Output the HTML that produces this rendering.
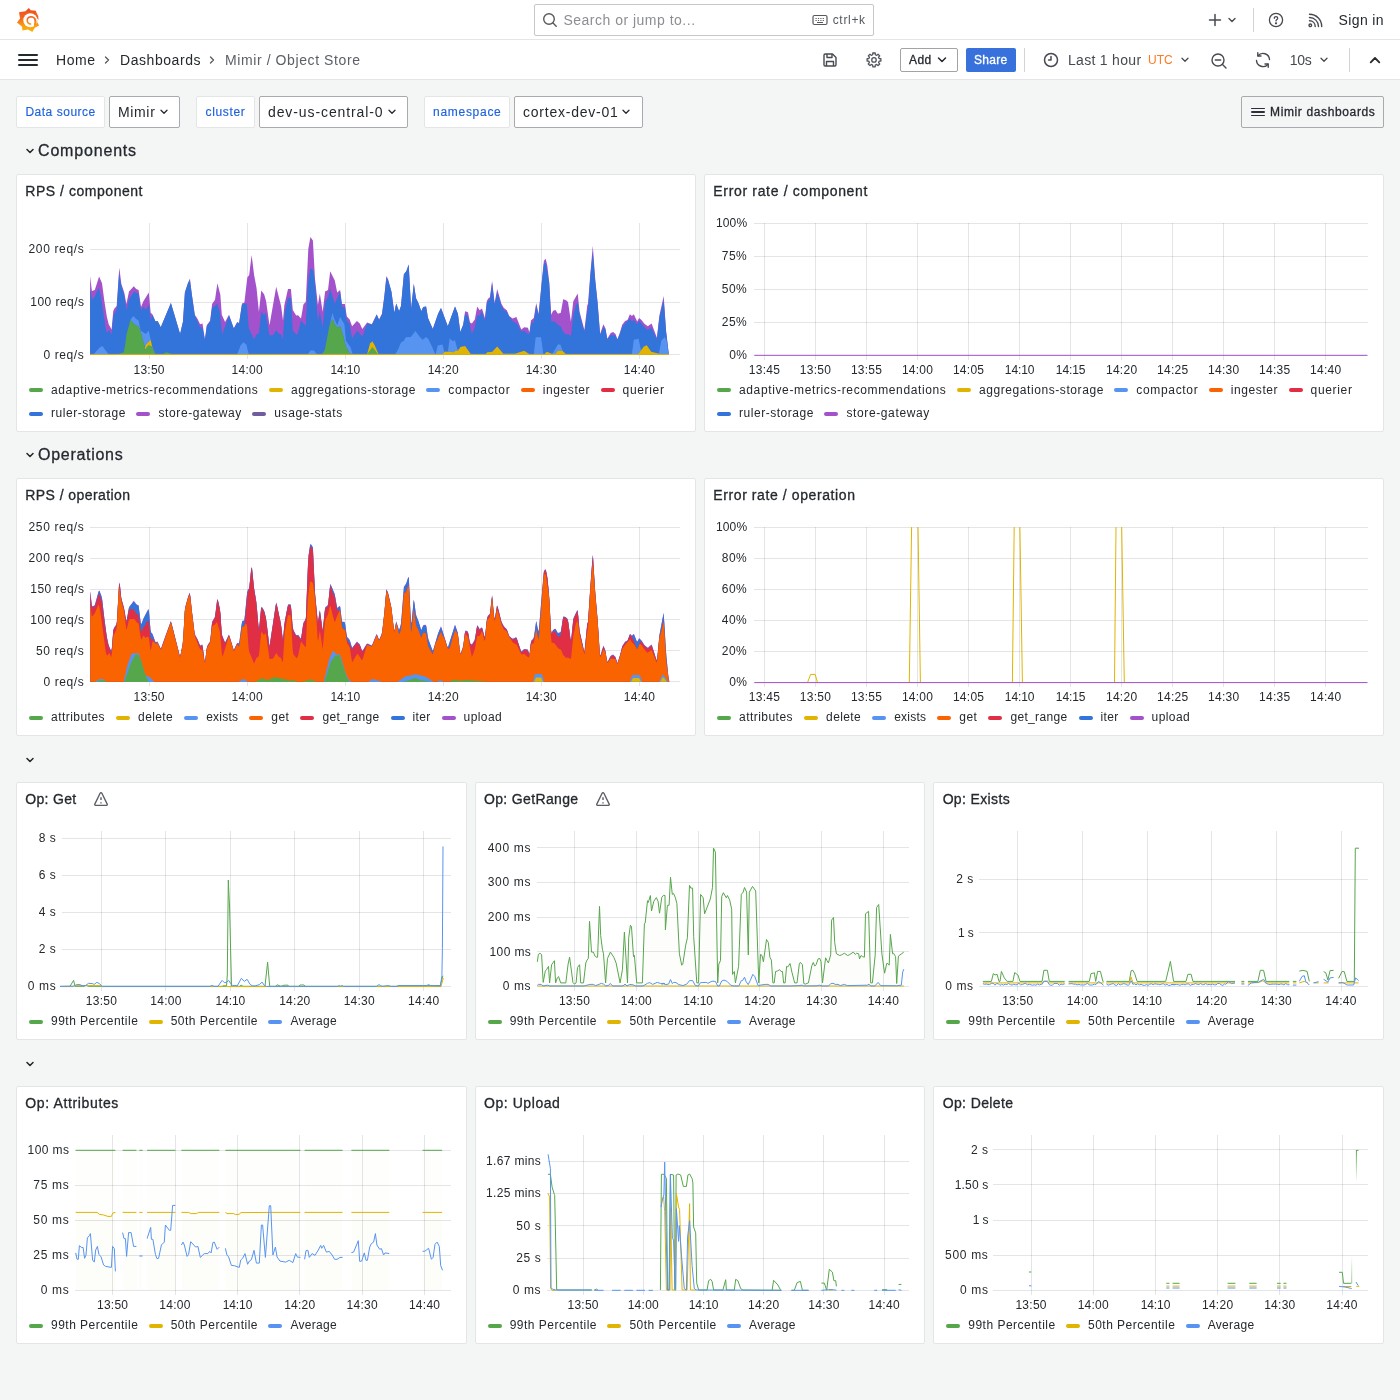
<!DOCTYPE html>
<html lang="en"><head><meta charset="utf-8"><title>Mimir / Object Store - Dashboards - Grafana</title>
<style>
html,body{margin:0;padding:0;}
body{width:1400px;height:1400px;background:#f4f5f5;font-family:"Liberation Sans",sans-serif;position:relative;overflow:hidden;color:#24292e;}
.t{position:absolute;white-space:nowrap;line-height:1;}
.b{position:absolute;box-sizing:border-box;}
svg{position:absolute;overflow:visible;}
svg text{font-family:"Liberation Sans",sans-serif;}
#root{position:absolute;left:0;top:0;width:1400px;height:1400px;will-change:transform;}
</style></head><body><div id="root">

<div class="b" style="left:0px;top:0px;width:1400px;height:40px;background:#fff;border-radius:0px;border-bottom:1px solid #e4e5e6;"></div>
<div class="b" style="left:0px;top:40px;width:1400px;height:40px;background:#fff;border-radius:0px;border-bottom:1px solid #e4e5e6;"></div>
<svg style="left:10px;top:2px" width="36" height="36" viewBox="0 0 1400 1400">
<defs><linearGradient id="lg" x1="0" y1="1165" x2="0" y2="235" gradientUnits="userSpaceOnUse"><stop offset="0" stop-color="#fbb70a"/><stop offset="0.250" stop-color="#f9a010"/><stop offset="0.550" stop-color="#f26c20"/><stop offset="1" stop-color="#ef4a1c"/></linearGradient></defs>
<path fill="url(#lg)" d="M735 235 L805 325 L1000 340 L1040 440 Q1140 560 1110 700 L1075 690 L1060 790 L1130 910 L965 1000 L870 1165 L700 1065 L480 1110 L470 960 L272 800 L392 640 L350 400 L600 360 Z"/>
<circle cx="790" cy="712" r="272" fill="#fff"/>
<path fill="#fff" d="M1020 640 L1120 690 L1075 700 L1062 790 L1010 800 Z"/>
<path fill="none" stroke="url(#lg)" stroke-width="58" stroke-linecap="round" d="M800 860 Q690 850 670 730 Q665 600 800 575 Q960 575 985 720 Q1000 830 960 900"/>
<path fill="url(#lg)" d="M1010 640 Q1050 760 1010 900 L930 960 L930 880 Q980 800 950 660 Z"/>
</svg>
<div class="b" style="left:534px;top:4px;width:340px;height:32px;background:#fff;border-radius:2px;border:1px solid #c4c7cb;"></div>
<svg style="left:542px;top:12px" width="16" height="16" viewBox="0 0 16 16" fill="none" stroke="#55595f" stroke-width="1.400" stroke-linecap="round"><circle cx="7" cy="7" r="5.300"/><path d="M11 11 L14.200 14.200"/></svg>
<div class="t" style="left:563.40px;top:11.95px;font-size:14px;color:#8b8e94;letter-spacing:0.499px;line-height:1.15;">Search or jump to...</div>
<svg style="left:812px;top:14px" width="16" height="12" viewBox="0 0 16 12" fill="none" stroke="#55595f" stroke-width="1.200"><rect x="1" y="1.500" width="14" height="9" rx="1.500"/><path d="M3.500 4.500h9 M3.500 6.500h9" stroke-dasharray="1.200 1.200" stroke-width="1"/><path d="M5 8.500h6" stroke-width="1"/></svg>
<div class="t" style="left:832.70px;top:14.30px;font-size:12px;color:#55595f;letter-spacing:0.681px;line-height:1.15;">ctrl+k</div>
<svg style="left:1208px;top:13px" width="14" height="14" viewBox="0 0 14 14" fill="none" stroke="#464a50" stroke-width="1.500" stroke-linecap="round"><path d="M7 1.500v11M1.500 7h11"/></svg>
<svg style="left:1227px;top:16px" width="10" height="8" viewBox="0 0 10 8" fill="none" stroke="#464a50" stroke-width="1.400" stroke-linecap="round" stroke-linejoin="round"><path d="M2 2.500l3 3 3-3"/></svg>
<div class="b" style="left:1253px;top:8px;width:1px;height:24px;background:#d2d4d7;border-radius:0px;"></div>
<svg style="left:1268px;top:12px" width="16" height="16" viewBox="0 0 16 16" fill="none" stroke="#464a50" stroke-width="1.300" stroke-linecap="round"><circle cx="8" cy="8" r="6.600"/><path d="M6.300 6.300c0-1 .8-1.700 1.700-1.700 1 0 1.700.7 1.700 1.600 0 1.300-1.700 1.400-1.700 2.700"/><circle cx="8" cy="11.300" r="0.500" fill="#464a50"/></svg>
<svg style="left:1308px;top:13px" width="15" height="15" viewBox="0 0 15 15" fill="none" stroke="#464a50" stroke-width="1.400" stroke-linecap="round"><circle cx="2.300" cy="12.300" r="1.300"/><path d="M1.500 7.800c3.300 0 5.700 2.400 5.700 5.700M1.500 4.500c5 0 9 4 9 9M1.500 1.300c6.800 0 12.200 5.400 12.200 12.200"/></svg>
<div class="t" style="left:1338.50px;top:11.95px;font-size:14px;color:#24292e;letter-spacing:0.386px;line-height:1.15;">Sign in</div>
<div class="b" style="left:18px;top:54px;width:20px;height:2px;background:#24292e;border-radius:1px;"></div>
<div class="b" style="left:18px;top:59px;width:20px;height:2px;background:#24292e;border-radius:1px;"></div>
<div class="b" style="left:18px;top:64px;width:20px;height:2px;background:#24292e;border-radius:1px;"></div>
<div class="t" style="left:56.00px;top:51.95px;font-size:14px;color:#24292e;letter-spacing:0.568px;line-height:1.15;">Home</div>
<svg style="left:103px;top:55px" width="8" height="10" viewBox="0 0 8 10" fill="none" stroke="#55595f" stroke-width="1.300" stroke-linecap="round" stroke-linejoin="round"><path d="M2.500 2l3 3-3 3"/></svg>
<div class="t" style="left:120.00px;top:51.95px;font-size:14px;color:#24292e;letter-spacing:0.555px;line-height:1.15;">Dashboards</div>
<svg style="left:208px;top:55px" width="8" height="10" viewBox="0 0 8 10" fill="none" stroke="#55595f" stroke-width="1.300" stroke-linecap="round" stroke-linejoin="round"><path d="M2.500 2l3 3-3 3"/></svg>
<div class="t" style="left:225.00px;top:51.95px;font-size:14px;color:#5b5f66;letter-spacing:0.592px;line-height:1.15;">Mimir / Object Store</div>
<svg style="left:822px;top:52px" width="16" height="16" viewBox="0 0 16 16" fill="none" stroke="#464a50" stroke-width="1.400" stroke-linejoin="round"><path d="M2 3.200c0-.7.500-1.200 1.200-1.200h7.300l3.500 3.500v7.300c0 .7-.5 1.200-1.200 1.200H3.200c-.7 0-1.200-.5-1.200-1.200z"/><path d="M5 2v3.500h5V2M4.500 14V9.500h7V14"/></svg>
<svg style="left:866px;top:52px" width="16" height="16" viewBox="0 0 16 16" fill="none" stroke="#50545a" stroke-width="1.300" stroke-linejoin="round"><circle cx="8" cy="7.900" r="2.250"/><path transform="translate(0 -0.100)" d="M6.72 2.86L6.78 1.11L9.22 1.11L9.28 2.86L10.73 3.46L12.02 2.27L13.73 3.98L12.54 5.27L13.14 6.72L14.89 6.78L14.89 9.22L13.14 9.28L12.54 10.73L13.73 12.02L12.02 13.73L10.73 12.54L9.28 13.14L9.22 14.89L6.78 14.89L6.72 13.14L5.27 12.54L3.98 13.73L2.27 12.02L3.46 10.73L2.86 9.28L1.11 9.22L1.11 6.78L2.86 6.72L3.46 5.27L2.27 3.98L3.98 2.27L5.27 3.46Z"/></svg>
<div class="b" style="left:900px;top:48px;width:58px;height:24px;background:#fff;border-radius:2px;border:1px solid #a0a3a8;"></div>
<div class="t" style="left:909.00px;top:54.30px;font-size:12px;color:#24292e;letter-spacing:0.385px;line-height:1.15;-webkit-text-stroke:0.3px #24292e;">Add</div>
<svg style="left:936px;top:56px" width="12" height="8" viewBox="0 0 12 8" fill="none" stroke="#24292e" stroke-width="1.500" stroke-linecap="round" stroke-linejoin="round"><path d="M2.500 2l3.500 3.500L9.500 2"/></svg>
<div class="b" style="left:966px;top:48px;width:50px;height:24px;background:#3871dc;border-radius:2px;"></div>
<div class="t" style="left:974.00px;top:54.30px;font-size:12px;color:#fff;letter-spacing:0.297px;line-height:1.15;-webkit-text-stroke:0.3px #fff;">Share</div>
<div class="b" style="left:1024px;top:48px;width:1px;height:24px;background:#d2d4d7;border-radius:0px;"></div>
<svg style="left:1043px;top:52px" width="16" height="16" viewBox="0 0 16 16" fill="none" stroke="#464a50" stroke-width="1.500" stroke-linecap="round" stroke-linejoin="round"><circle cx="8" cy="8" r="6.500"/><path d="M8 4.600V8H5.600"/></svg>
<div class="t" style="left:1068.00px;top:51.95px;font-size:14px;color:#464a50;letter-spacing:0.299px;line-height:1.15;">Last 1 hour</div>
<div class="t" style="left:1148.00px;top:54.30px;font-size:12px;color:#ff7a20;letter-spacing:0.043px;line-height:1.15;">UTC</div>
<svg style="left:1179px;top:56px" width="12" height="8" viewBox="0 0 12 8" fill="none" stroke="#464a50" stroke-width="1.300" stroke-linecap="round" stroke-linejoin="round"><path d="M3 2.300l3 3 3-3"/></svg>
<svg style="left:1210px;top:52px" width="18" height="18" viewBox="0 0 18 18" fill="none" stroke="#464a50" stroke-width="1.400" stroke-linecap="round"><circle cx="8" cy="8" r="6"/><path d="M5.300 8h5.400M12.500 12.500l3.500 3.500"/></svg>
<svg style="left:1254px;top:51px" width="18" height="18" viewBox="0 0 18 18" fill="none" stroke="#464a50" stroke-width="1.400" stroke-linecap="round" stroke-linejoin="round"><path d="M15.500 8.500a6.500 6.500 0 0 0-11.500-3.700M2.500 9.500a6.500 6.500 0 0 0 11.500 3.700"/><path d="M3.800 1.800v3.200h3.200M14.200 16.200v-3.200h-3.200"/></svg>
<div class="t" style="left:1289.70px;top:51.95px;font-size:14px;color:#464a50;letter-spacing:-0.254px;line-height:1.15;">10s</div>
<svg style="left:1318px;top:56px" width="12" height="8" viewBox="0 0 12 8" fill="none" stroke="#464a50" stroke-width="1.300" stroke-linecap="round" stroke-linejoin="round"><path d="M3 2.300l3 3 3-3"/></svg>
<div class="b" style="left:1349px;top:48px;width:1px;height:24px;background:#d2d4d7;border-radius:0px;"></div>
<svg style="left:1367px;top:54px" width="16" height="12" viewBox="0 0 16 12" fill="none" stroke="#24292e" stroke-width="1.800" stroke-linecap="round" stroke-linejoin="round"><path d="M3.700 8.300L8 4l4.300 4.300"/></svg>
<div class="b" style="left:16px;top:96px;width:89px;height:32px;background:#fff;border-radius:2px;border:1px solid #e4e5e6;"></div>
<div class="t" style="left:25.40px;top:106.10px;font-size:12px;color:#1f62e0;letter-spacing:0.519px;line-height:1.15;-webkit-text-stroke:0.15px #1f62e0;">Data source</div>
<div class="b" style="left:109px;top:96px;width:71px;height:32px;background:#fff;border-radius:2px;border:1px solid #a7aaae;"></div>
<div class="t" style="left:117.90px;top:103.95px;font-size:14px;color:#24292e;letter-spacing:0.682px;line-height:1.15;">Mimir</div>
<svg style="left:158px;top:108px" width="12" height="8" viewBox="0 0 12 8" fill="none" stroke="#24292e" stroke-width="1.300" stroke-linecap="round" stroke-linejoin="round"><path d="M3 2.300l3 3 3-3"/></svg>
<div class="b" style="left:196px;top:96px;width:59px;height:32px;background:#fff;border-radius:2px;border:1px solid #e4e5e6;"></div>
<div class="t" style="left:205.50px;top:106.10px;font-size:12px;color:#1f62e0;letter-spacing:0.665px;line-height:1.15;-webkit-text-stroke:0.15px #1f62e0;">cluster</div>
<div class="b" style="left:259px;top:96px;width:149px;height:32px;background:#fff;border-radius:2px;border:1px solid #a7aaae;"></div>
<div class="t" style="left:268.00px;top:103.95px;font-size:14px;color:#24292e;letter-spacing:0.900px;line-height:1.15;">dev-us-central-0</div>
<svg style="left:386px;top:108px" width="12" height="8" viewBox="0 0 12 8" fill="none" stroke="#24292e" stroke-width="1.300" stroke-linecap="round" stroke-linejoin="round"><path d="M3 2.300l3 3 3-3"/></svg>
<div class="b" style="left:424px;top:96px;width:86px;height:32px;background:#fff;border-radius:2px;border:1px solid #e4e5e6;"></div>
<div class="t" style="left:433.00px;top:106.10px;font-size:12px;color:#1f62e0;letter-spacing:0.719px;line-height:1.15;-webkit-text-stroke:0.15px #1f62e0;">namespace</div>
<div class="b" style="left:514px;top:96px;width:129px;height:32px;background:#fff;border-radius:2px;border:1px solid #a7aaae;"></div>
<div class="t" style="left:523.00px;top:103.95px;font-size:14px;color:#24292e;letter-spacing:0.766px;line-height:1.15;">cortex-dev-01</div>
<svg style="left:620px;top:108px" width="12" height="8" viewBox="0 0 12 8" fill="none" stroke="#24292e" stroke-width="1.300" stroke-linecap="round" stroke-linejoin="round"><path d="M3 2.300l3 3 3-3"/></svg>
<div class="b" style="left:1241px;top:96px;width:143px;height:32px;background:transparent;border-radius:2px;border:1px solid #a7aaae;"></div>
<div class="b" style="left:1251.4px;top:108px;width:13.4px;height:1.4px;background:#2c3137;border-radius:1px;"></div>
<div class="b" style="left:1251.4px;top:111.4px;width:13.4px;height:1.4px;background:#2c3137;border-radius:1px;"></div>
<div class="b" style="left:1251.4px;top:114.8px;width:13.4px;height:1.4px;background:#2c3137;border-radius:1px;"></div>
<div class="t" style="left:1270.00px;top:105.80px;font-size:12px;color:#24292e;letter-spacing:0.633px;line-height:1.15;-webkit-text-stroke:0.3px #24292e;">Mimir dashboards</div>
<svg style="left:24px;top:146px" width="12" height="10" viewBox="0 0 12 10" fill="none" stroke="#24292e" stroke-width="1.550" stroke-linecap="round" stroke-linejoin="round"><path d="M3 3.500l3 3 3-3"/></svg>
<div class="t" style="left:38.00px;top:141.80px;font-size:16px;color:#24292e;letter-spacing:0.822px;line-height:1.15;-webkit-text-stroke:0.3px #24292e;">Components</div>
<svg style="left:24px;top:450px" width="12" height="10" viewBox="0 0 12 10" fill="none" stroke="#24292e" stroke-width="1.550" stroke-linecap="round" stroke-linejoin="round"><path d="M3 3.500l3 3 3-3"/></svg>
<div class="t" style="left:38.00px;top:445.80px;font-size:16px;color:#24292e;letter-spacing:0.717px;line-height:1.15;-webkit-text-stroke:0.3px #24292e;">Operations</div>
<svg style="left:24px;top:755px" width="12" height="10" viewBox="0 0 12 10" fill="none" stroke="#24292e" stroke-width="1.550" stroke-linecap="round" stroke-linejoin="round"><path d="M3 3.500l3 3 3-3"/></svg>
<svg style="left:24px;top:1059px" width="12" height="10" viewBox="0 0 12 10" fill="none" stroke="#24292e" stroke-width="1.550" stroke-linecap="round" stroke-linejoin="round"><path d="M3 3.500l3 3 3-3"/></svg>
<div class="b" style="left:16px;top:174px;width:680px;height:258px;background:#fff;border-radius:2px;border:1px solid #e4e5e6;"></div>
<div class="t" style="left:25.30px;top:182.95px;font-size:14px;color:#24292e;letter-spacing:0.533px;line-height:1.15;-webkit-text-stroke:0.3px #24292e;">RPS / component</div>
<div class="b" style="left:29.0px;top:388.3px;width:14px;height:4px;border-radius:2px;background:#56a64b"></div>
<div class="t" style="left:51.00px;top:383.80px;font-size:12px;color:#24292e;letter-spacing:0.628px;line-height:1.15;">adaptive-metrics-recommendations</div>
<div class="b" style="left:268.9px;top:388.3px;width:14px;height:4px;border-radius:2px;background:#e0b400"></div>
<div class="t" style="left:290.90px;top:383.80px;font-size:12px;color:#24292e;letter-spacing:0.580px;line-height:1.15;">aggregations-storage</div>
<div class="b" style="left:426.3px;top:388.3px;width:14px;height:4px;border-radius:2px;background:#5794f2"></div>
<div class="t" style="left:448.30px;top:383.80px;font-size:12px;color:#24292e;letter-spacing:0.665px;line-height:1.15;">compactor</div>
<div class="b" style="left:520.7px;top:388.3px;width:14px;height:4px;border-radius:2px;background:#fa6400"></div>
<div class="t" style="left:542.70px;top:383.80px;font-size:12px;color:#24292e;letter-spacing:0.602px;line-height:1.15;">ingester</div>
<div class="b" style="left:600.6px;top:388.3px;width:14px;height:4px;border-radius:2px;background:#e02f44"></div>
<div class="t" style="left:622.60px;top:383.80px;font-size:12px;color:#24292e;letter-spacing:0.663px;line-height:1.15;">querier</div>
<div class="b" style="left:29.0px;top:411.6px;width:14px;height:4px;border-radius:2px;background:#3274d9"></div>
<div class="t" style="left:51.00px;top:407.10px;font-size:12px;color:#24292e;letter-spacing:0.536px;line-height:1.15;">ruler-storage</div>
<div class="b" style="left:136.4px;top:411.6px;width:14px;height:4px;border-radius:2px;background:#a352cc"></div>
<div class="t" style="left:158.40px;top:407.10px;font-size:12px;color:#24292e;letter-spacing:0.626px;line-height:1.15;">store-gateway</div>
<div class="b" style="left:252.3px;top:411.6px;width:14px;height:4px;border-radius:2px;background:#705da0"></div>
<div class="t" style="left:274.30px;top:407.10px;font-size:12px;color:#24292e;letter-spacing:0.589px;line-height:1.15;">usage-stats</div>
<div class="t" style="left:28.53px;top:243.10px;font-size:12px;color:#24292e;letter-spacing:0.650px;line-height:1.15;">200 req/s</div>
<div class="t" style="left:30.27px;top:295.80px;font-size:12px;color:#24292e;letter-spacing:0.457px;line-height:1.15;">100 req/s</div>
<div class="t" style="left:43.48px;top:348.50px;font-size:12px;color:#24292e;letter-spacing:0.607px;line-height:1.15;">0 req/s</div>
<div class="t" style="left:133.47px;top:363.50px;font-size:12px;color:#24292e;letter-spacing:0.260px;line-height:1.15;">13:50</div>
<div class="t" style="left:231.53px;top:363.50px;font-size:12px;color:#24292e;letter-spacing:0.260px;line-height:1.15;">14:00</div>
<div class="t" style="left:330.45px;top:363.50px;font-size:12px;color:#24292e;letter-spacing:-0.087px;line-height:1.15;">14:10</div>
<div class="t" style="left:427.63px;top:363.50px;font-size:12px;color:#24292e;letter-spacing:0.260px;line-height:1.15;">14:20</div>
<div class="t" style="left:525.68px;top:363.50px;font-size:12px;color:#24292e;letter-spacing:0.260px;line-height:1.15;">14:30</div>
<div class="t" style="left:623.74px;top:363.50px;font-size:12px;color:#24292e;letter-spacing:0.260px;line-height:1.15;">14:40</div>
<div class="b" style="left:704px;top:174px;width:680px;height:258px;background:#fff;border-radius:2px;border:1px solid #e4e5e6;"></div>
<div class="t" style="left:713.30px;top:182.95px;font-size:14px;color:#24292e;letter-spacing:0.668px;line-height:1.15;-webkit-text-stroke:0.3px #24292e;">Error rate / component</div>
<div class="b" style="left:717.0px;top:388.3px;width:14px;height:4px;border-radius:2px;background:#56a64b"></div>
<div class="t" style="left:739.00px;top:383.80px;font-size:12px;color:#24292e;letter-spacing:0.628px;line-height:1.15;">adaptive-metrics-recommendations</div>
<div class="b" style="left:956.9px;top:388.3px;width:14px;height:4px;border-radius:2px;background:#e0b400"></div>
<div class="t" style="left:978.90px;top:383.80px;font-size:12px;color:#24292e;letter-spacing:0.580px;line-height:1.15;">aggregations-storage</div>
<div class="b" style="left:1114.3px;top:388.3px;width:14px;height:4px;border-radius:2px;background:#5794f2"></div>
<div class="t" style="left:1136.30px;top:383.80px;font-size:12px;color:#24292e;letter-spacing:0.665px;line-height:1.15;">compactor</div>
<div class="b" style="left:1208.7px;top:388.3px;width:14px;height:4px;border-radius:2px;background:#fa6400"></div>
<div class="t" style="left:1230.70px;top:383.80px;font-size:12px;color:#24292e;letter-spacing:0.602px;line-height:1.15;">ingester</div>
<div class="b" style="left:1288.6px;top:388.3px;width:14px;height:4px;border-radius:2px;background:#e02f44"></div>
<div class="t" style="left:1310.60px;top:383.80px;font-size:12px;color:#24292e;letter-spacing:0.663px;line-height:1.15;">querier</div>
<div class="b" style="left:717.0px;top:411.6px;width:14px;height:4px;border-radius:2px;background:#3274d9"></div>
<div class="t" style="left:739.00px;top:407.10px;font-size:12px;color:#24292e;letter-spacing:0.536px;line-height:1.15;">ruler-storage</div>
<div class="b" style="left:824.4px;top:411.6px;width:14px;height:4px;border-radius:2px;background:#a352cc"></div>
<div class="t" style="left:846.40px;top:407.10px;font-size:12px;color:#24292e;letter-spacing:0.626px;line-height:1.15;">store-gateway</div>
<div class="t" style="left:716.06px;top:217.20px;font-size:12px;color:#24292e;letter-spacing:0.113px;line-height:1.15;">100%</div>
<div class="t" style="left:721.80px;top:250.20px;font-size:12px;color:#24292e;letter-spacing:0.463px;line-height:1.15;">75%</div>
<div class="t" style="left:721.80px;top:283.20px;font-size:12px;color:#24292e;letter-spacing:0.463px;line-height:1.15;">50%</div>
<div class="t" style="left:721.80px;top:316.10px;font-size:12px;color:#24292e;letter-spacing:0.463px;line-height:1.15;">25%</div>
<div class="t" style="left:729.27px;top:349.10px;font-size:12px;color:#24292e;letter-spacing:0.294px;line-height:1.15;">0%</div>
<div class="t" style="left:748.85px;top:364.10px;font-size:12px;color:#24292e;letter-spacing:0.260px;line-height:1.15;">13:45</div>
<div class="t" style="left:799.87px;top:364.10px;font-size:12px;color:#24292e;letter-spacing:0.260px;line-height:1.15;">13:50</div>
<div class="t" style="left:850.89px;top:364.10px;font-size:12px;color:#24292e;letter-spacing:0.260px;line-height:1.15;">13:55</div>
<div class="t" style="left:901.92px;top:364.10px;font-size:12px;color:#24292e;letter-spacing:0.260px;line-height:1.15;">14:00</div>
<div class="t" style="left:952.94px;top:364.10px;font-size:12px;color:#24292e;letter-spacing:0.260px;line-height:1.15;">14:05</div>
<div class="t" style="left:1004.83px;top:364.10px;font-size:12px;color:#24292e;letter-spacing:-0.087px;line-height:1.15;">14:10</div>
<div class="t" style="left:1055.86px;top:364.10px;font-size:12px;color:#24292e;letter-spacing:-0.087px;line-height:1.15;">14:15</div>
<div class="t" style="left:1106.01px;top:364.10px;font-size:12px;color:#24292e;letter-spacing:0.260px;line-height:1.15;">14:20</div>
<div class="t" style="left:1157.04px;top:364.10px;font-size:12px;color:#24292e;letter-spacing:0.260px;line-height:1.15;">14:25</div>
<div class="t" style="left:1208.06px;top:364.10px;font-size:12px;color:#24292e;letter-spacing:0.260px;line-height:1.15;">14:30</div>
<div class="t" style="left:1259.08px;top:364.10px;font-size:12px;color:#24292e;letter-spacing:0.260px;line-height:1.15;">14:35</div>
<div class="t" style="left:1310.11px;top:364.10px;font-size:12px;color:#24292e;letter-spacing:0.260px;line-height:1.15;">14:40</div>
<div class="b" style="left:16px;top:478px;width:680px;height:258px;background:#fff;border-radius:2px;border:1px solid #e4e5e6;"></div>
<div class="t" style="left:25.30px;top:486.95px;font-size:14px;color:#24292e;letter-spacing:0.426px;line-height:1.15;-webkit-text-stroke:0.3px #24292e;">RPS / operation</div>
<div class="b" style="left:29.0px;top:715.6px;width:14px;height:4px;border-radius:2px;background:#56a64b"></div>
<div class="t" style="left:51.00px;top:711.10px;font-size:12px;color:#24292e;letter-spacing:0.466px;line-height:1.15;">attributes</div>
<div class="b" style="left:116.1px;top:715.6px;width:14px;height:4px;border-radius:2px;background:#e0b400"></div>
<div class="t" style="left:138.10px;top:711.10px;font-size:12px;color:#24292e;letter-spacing:0.385px;line-height:1.15;">delete</div>
<div class="b" style="left:184.2px;top:715.6px;width:14px;height:4px;border-radius:2px;background:#5794f2"></div>
<div class="t" style="left:206.20px;top:711.10px;font-size:12px;color:#24292e;letter-spacing:0.221px;line-height:1.15;">exists</div>
<div class="b" style="left:249.3px;top:715.6px;width:14px;height:4px;border-radius:2px;background:#fa6400"></div>
<div class="t" style="left:271.30px;top:711.10px;font-size:12px;color:#24292e;letter-spacing:0.443px;line-height:1.15;">get</div>
<div class="b" style="left:300.4px;top:715.6px;width:14px;height:4px;border-radius:2px;background:#e02f44"></div>
<div class="t" style="left:322.40px;top:711.10px;font-size:12px;color:#24292e;letter-spacing:0.330px;line-height:1.15;">get_range</div>
<div class="b" style="left:390.5px;top:715.6px;width:14px;height:4px;border-radius:2px;background:#3274d9"></div>
<div class="t" style="left:412.50px;top:711.10px;font-size:12px;color:#24292e;letter-spacing:0.332px;line-height:1.15;">iter</div>
<div class="b" style="left:441.6px;top:715.6px;width:14px;height:4px;border-radius:2px;background:#a352cc"></div>
<div class="t" style="left:463.60px;top:711.10px;font-size:12px;color:#24292e;letter-spacing:0.411px;line-height:1.15;">upload</div>
<div class="t" style="left:28.53px;top:521.00px;font-size:12px;color:#24292e;letter-spacing:0.650px;line-height:1.15;">250 req/s</div>
<div class="t" style="left:28.53px;top:551.90px;font-size:12px;color:#24292e;letter-spacing:0.650px;line-height:1.15;">200 req/s</div>
<div class="t" style="left:30.27px;top:582.80px;font-size:12px;color:#24292e;letter-spacing:0.457px;line-height:1.15;">150 req/s</div>
<div class="t" style="left:30.27px;top:613.70px;font-size:12px;color:#24292e;letter-spacing:0.457px;line-height:1.15;">100 req/s</div>
<div class="t" style="left:36.01px;top:644.60px;font-size:12px;color:#24292e;letter-spacing:0.631px;line-height:1.15;">50 req/s</div>
<div class="t" style="left:43.48px;top:675.50px;font-size:12px;color:#24292e;letter-spacing:0.607px;line-height:1.15;">0 req/s</div>
<div class="t" style="left:133.47px;top:690.50px;font-size:12px;color:#24292e;letter-spacing:0.260px;line-height:1.15;">13:50</div>
<div class="t" style="left:231.53px;top:690.50px;font-size:12px;color:#24292e;letter-spacing:0.260px;line-height:1.15;">14:00</div>
<div class="t" style="left:330.45px;top:690.50px;font-size:12px;color:#24292e;letter-spacing:-0.087px;line-height:1.15;">14:10</div>
<div class="t" style="left:427.63px;top:690.50px;font-size:12px;color:#24292e;letter-spacing:0.260px;line-height:1.15;">14:20</div>
<div class="t" style="left:525.68px;top:690.50px;font-size:12px;color:#24292e;letter-spacing:0.260px;line-height:1.15;">14:30</div>
<div class="t" style="left:623.74px;top:690.50px;font-size:12px;color:#24292e;letter-spacing:0.260px;line-height:1.15;">14:40</div>
<div class="b" style="left:704px;top:478px;width:680px;height:258px;background:#fff;border-radius:2px;border:1px solid #e4e5e6;"></div>
<div class="t" style="left:713.30px;top:486.95px;font-size:14px;color:#24292e;letter-spacing:0.595px;line-height:1.15;-webkit-text-stroke:0.3px #24292e;">Error rate / operation</div>
<div class="b" style="left:717.0px;top:715.6px;width:14px;height:4px;border-radius:2px;background:#56a64b"></div>
<div class="t" style="left:739.00px;top:711.10px;font-size:12px;color:#24292e;letter-spacing:0.466px;line-height:1.15;">attributes</div>
<div class="b" style="left:804.1px;top:715.6px;width:14px;height:4px;border-radius:2px;background:#e0b400"></div>
<div class="t" style="left:826.10px;top:711.10px;font-size:12px;color:#24292e;letter-spacing:0.385px;line-height:1.15;">delete</div>
<div class="b" style="left:872.2px;top:715.6px;width:14px;height:4px;border-radius:2px;background:#5794f2"></div>
<div class="t" style="left:894.20px;top:711.10px;font-size:12px;color:#24292e;letter-spacing:0.221px;line-height:1.15;">exists</div>
<div class="b" style="left:937.3px;top:715.6px;width:14px;height:4px;border-radius:2px;background:#fa6400"></div>
<div class="t" style="left:959.30px;top:711.10px;font-size:12px;color:#24292e;letter-spacing:0.443px;line-height:1.15;">get</div>
<div class="b" style="left:988.4px;top:715.6px;width:14px;height:4px;border-radius:2px;background:#e02f44"></div>
<div class="t" style="left:1010.40px;top:711.10px;font-size:12px;color:#24292e;letter-spacing:0.330px;line-height:1.15;">get_range</div>
<div class="b" style="left:1078.5px;top:715.6px;width:14px;height:4px;border-radius:2px;background:#3274d9"></div>
<div class="t" style="left:1100.50px;top:711.10px;font-size:12px;color:#24292e;letter-spacing:0.332px;line-height:1.15;">iter</div>
<div class="b" style="left:1129.6px;top:715.6px;width:14px;height:4px;border-radius:2px;background:#a352cc"></div>
<div class="t" style="left:1151.60px;top:711.10px;font-size:12px;color:#24292e;letter-spacing:0.411px;line-height:1.15;">upload</div>
<div class="t" style="left:716.06px;top:520.90px;font-size:12px;color:#24292e;letter-spacing:0.113px;line-height:1.15;">100%</div>
<div class="t" style="left:721.80px;top:552.00px;font-size:12px;color:#24292e;letter-spacing:0.463px;line-height:1.15;">80%</div>
<div class="t" style="left:721.80px;top:583.10px;font-size:12px;color:#24292e;letter-spacing:0.463px;line-height:1.15;">60%</div>
<div class="t" style="left:721.80px;top:614.20px;font-size:12px;color:#24292e;letter-spacing:0.463px;line-height:1.15;">40%</div>
<div class="t" style="left:721.80px;top:645.30px;font-size:12px;color:#24292e;letter-spacing:0.463px;line-height:1.15;">20%</div>
<div class="t" style="left:729.27px;top:676.40px;font-size:12px;color:#24292e;letter-spacing:0.294px;line-height:1.15;">0%</div>
<div class="t" style="left:748.85px;top:691.40px;font-size:12px;color:#24292e;letter-spacing:0.260px;line-height:1.15;">13:45</div>
<div class="t" style="left:799.87px;top:691.40px;font-size:12px;color:#24292e;letter-spacing:0.260px;line-height:1.15;">13:50</div>
<div class="t" style="left:850.89px;top:691.40px;font-size:12px;color:#24292e;letter-spacing:0.260px;line-height:1.15;">13:55</div>
<div class="t" style="left:901.92px;top:691.40px;font-size:12px;color:#24292e;letter-spacing:0.260px;line-height:1.15;">14:00</div>
<div class="t" style="left:952.94px;top:691.40px;font-size:12px;color:#24292e;letter-spacing:0.260px;line-height:1.15;">14:05</div>
<div class="t" style="left:1004.83px;top:691.40px;font-size:12px;color:#24292e;letter-spacing:-0.087px;line-height:1.15;">14:10</div>
<div class="t" style="left:1055.86px;top:691.40px;font-size:12px;color:#24292e;letter-spacing:-0.087px;line-height:1.15;">14:15</div>
<div class="t" style="left:1106.01px;top:691.40px;font-size:12px;color:#24292e;letter-spacing:0.260px;line-height:1.15;">14:20</div>
<div class="t" style="left:1157.04px;top:691.40px;font-size:12px;color:#24292e;letter-spacing:0.260px;line-height:1.15;">14:25</div>
<div class="t" style="left:1208.06px;top:691.40px;font-size:12px;color:#24292e;letter-spacing:0.260px;line-height:1.15;">14:30</div>
<div class="t" style="left:1259.08px;top:691.40px;font-size:12px;color:#24292e;letter-spacing:0.260px;line-height:1.15;">14:35</div>
<div class="t" style="left:1310.11px;top:691.40px;font-size:12px;color:#24292e;letter-spacing:0.260px;line-height:1.15;">14:40</div>
<div class="b" style="left:16px;top:782px;width:451px;height:258px;background:#fff;border-radius:2px;border:1px solid #e4e5e6;"></div>
<div class="t" style="left:25.30px;top:790.95px;font-size:14px;color:#24292e;letter-spacing:0.312px;line-height:1.15;-webkit-text-stroke:0.3px #24292e;">Op: Get</div>
<svg style="left:93.1px;top:791.5px" width="16" height="15" viewBox="0 0 16 15" fill="none" stroke="#5a5e64" stroke-width="1.350" stroke-linejoin="round" stroke-linecap="round"><path d="M8 0.700Q8.600 0.700 8.900 1.300L14.200 12.100Q14.600 13.200 13.500 13.300H2.500Q1.400 13.200 1.800 12.100L7.100 1.300Q7.400 0.700 8 0.700Z"/><path d="M8 5.200v2.900" stroke-width="1.400" stroke-linecap="butt"/><path d="M7.300 10.900h1.400" stroke-width="1.200" stroke-linecap="butt"/></svg>
<div class="b" style="left:29.0px;top:1019.6px;width:14px;height:4px;border-radius:2px;background:#56a64b"></div>
<div class="t" style="left:51.00px;top:1015.10px;font-size:12px;color:#24292e;letter-spacing:0.485px;line-height:1.15;">99th Percentile</div>
<div class="b" style="left:148.7px;top:1019.6px;width:14px;height:4px;border-radius:2px;background:#e0b400"></div>
<div class="t" style="left:170.70px;top:1015.10px;font-size:12px;color:#24292e;letter-spacing:0.485px;line-height:1.15;">50th Percentile</div>
<div class="b" style="left:268.4px;top:1019.6px;width:14px;height:4px;border-radius:2px;background:#5794f2"></div>
<div class="t" style="left:290.40px;top:1015.10px;font-size:12px;color:#24292e;letter-spacing:0.319px;line-height:1.15;">Average</div>
<div class="t" style="left:38.87px;top:831.90px;font-size:12px;color:#24292e;letter-spacing:0.477px;line-height:1.15;">8 s</div>
<div class="t" style="left:38.87px;top:869.00px;font-size:12px;color:#24292e;letter-spacing:0.477px;line-height:1.15;">6 s</div>
<div class="t" style="left:38.87px;top:906.00px;font-size:12px;color:#24292e;letter-spacing:0.477px;line-height:1.15;">4 s</div>
<div class="t" style="left:38.87px;top:943.10px;font-size:12px;color:#24292e;letter-spacing:0.477px;line-height:1.15;">2 s</div>
<div class="t" style="left:27.82px;top:980.10px;font-size:12px;color:#24292e;letter-spacing:0.620px;line-height:1.15;">0 ms</div>
<div class="t" style="left:85.82px;top:995.10px;font-size:12px;color:#24292e;letter-spacing:0.260px;line-height:1.15;">13:50</div>
<div class="t" style="left:150.28px;top:995.10px;font-size:12px;color:#24292e;letter-spacing:0.260px;line-height:1.15;">14:00</div>
<div class="t" style="left:215.60px;top:995.10px;font-size:12px;color:#24292e;letter-spacing:-0.087px;line-height:1.15;">14:10</div>
<div class="t" style="left:279.19px;top:995.10px;font-size:12px;color:#24292e;letter-spacing:0.260px;line-height:1.15;">14:20</div>
<div class="t" style="left:343.65px;top:995.10px;font-size:12px;color:#24292e;letter-spacing:0.260px;line-height:1.15;">14:30</div>
<div class="t" style="left:408.11px;top:995.10px;font-size:12px;color:#24292e;letter-spacing:0.260px;line-height:1.15;">14:40</div>
<div class="b" style="left:475px;top:782px;width:450px;height:258px;background:#fff;border-radius:2px;border:1px solid #e4e5e6;"></div>
<div class="t" style="left:483.97px;top:790.95px;font-size:14px;color:#24292e;letter-spacing:0.349px;line-height:1.15;-webkit-text-stroke:0.3px #24292e;">Op: GetRange</div>
<svg style="left:595.0px;top:791.5px" width="16" height="15" viewBox="0 0 16 15" fill="none" stroke="#5a5e64" stroke-width="1.350" stroke-linejoin="round" stroke-linecap="round"><path d="M8 0.700Q8.600 0.700 8.900 1.300L14.200 12.100Q14.600 13.200 13.500 13.300H2.500Q1.400 13.200 1.800 12.100L7.100 1.300Q7.400 0.700 8 0.700Z"/><path d="M8 5.200v2.900" stroke-width="1.400" stroke-linecap="butt"/><path d="M7.300 10.900h1.400" stroke-width="1.200" stroke-linecap="butt"/></svg>
<div class="b" style="left:487.7px;top:1019.6px;width:14px;height:4px;border-radius:2px;background:#56a64b"></div>
<div class="t" style="left:509.70px;top:1015.10px;font-size:12px;color:#24292e;letter-spacing:0.485px;line-height:1.15;">99th Percentile</div>
<div class="b" style="left:607.4px;top:1019.6px;width:14px;height:4px;border-radius:2px;background:#e0b400"></div>
<div class="t" style="left:629.40px;top:1015.10px;font-size:12px;color:#24292e;letter-spacing:0.485px;line-height:1.15;">50th Percentile</div>
<div class="b" style="left:727.1px;top:1019.6px;width:14px;height:4px;border-radius:2px;background:#5794f2"></div>
<div class="t" style="left:749.10px;top:1015.10px;font-size:12px;color:#24292e;letter-spacing:0.319px;line-height:1.15;">Average</div>
<div class="t" style="left:487.77px;top:841.70px;font-size:12px;color:#24292e;letter-spacing:0.680px;line-height:1.15;">400 ms</div>
<div class="t" style="left:487.77px;top:876.30px;font-size:12px;color:#24292e;letter-spacing:0.680px;line-height:1.15;">300 ms</div>
<div class="t" style="left:487.77px;top:910.90px;font-size:12px;color:#24292e;letter-spacing:0.680px;line-height:1.15;">200 ms</div>
<div class="t" style="left:489.51px;top:945.50px;font-size:12px;color:#24292e;letter-spacing:0.391px;line-height:1.15;">100 ms</div>
<div class="t" style="left:502.72px;top:980.10px;font-size:12px;color:#24292e;letter-spacing:0.620px;line-height:1.15;">0 ms</div>
<div class="t" style="left:558.92px;top:995.10px;font-size:12px;color:#24292e;letter-spacing:0.260px;line-height:1.15;">13:50</div>
<div class="t" style="left:620.71px;top:995.10px;font-size:12px;color:#24292e;letter-spacing:0.260px;line-height:1.15;">14:00</div>
<div class="t" style="left:683.36px;top:995.10px;font-size:12px;color:#24292e;letter-spacing:-0.087px;line-height:1.15;">14:10</div>
<div class="t" style="left:744.28px;top:995.10px;font-size:12px;color:#24292e;letter-spacing:0.260px;line-height:1.15;">14:20</div>
<div class="t" style="left:806.07px;top:995.10px;font-size:12px;color:#24292e;letter-spacing:0.260px;line-height:1.15;">14:30</div>
<div class="t" style="left:867.86px;top:995.10px;font-size:12px;color:#24292e;letter-spacing:0.260px;line-height:1.15;">14:40</div>
<div class="b" style="left:933px;top:782px;width:451px;height:258px;background:#fff;border-radius:2px;border:1px solid #e4e5e6;"></div>
<div class="t" style="left:942.63px;top:790.95px;font-size:14px;color:#24292e;letter-spacing:0.357px;line-height:1.15;-webkit-text-stroke:0.3px #24292e;">Op: Exists</div>
<div class="b" style="left:946.3px;top:1019.6px;width:14px;height:4px;border-radius:2px;background:#56a64b"></div>
<div class="t" style="left:968.30px;top:1015.10px;font-size:12px;color:#24292e;letter-spacing:0.485px;line-height:1.15;">99th Percentile</div>
<div class="b" style="left:1066.0px;top:1019.6px;width:14px;height:4px;border-radius:2px;background:#e0b400"></div>
<div class="t" style="left:1088.00px;top:1015.10px;font-size:12px;color:#24292e;letter-spacing:0.485px;line-height:1.15;">50th Percentile</div>
<div class="b" style="left:1185.7px;top:1019.6px;width:14px;height:4px;border-radius:2px;background:#5794f2"></div>
<div class="t" style="left:1207.70px;top:1015.10px;font-size:12px;color:#24292e;letter-spacing:0.319px;line-height:1.15;">Average</div>
<div class="t" style="left:956.27px;top:873.00px;font-size:12px;color:#24292e;letter-spacing:0.477px;line-height:1.15;">2 s</div>
<div class="t" style="left:958.00px;top:926.60px;font-size:12px;color:#24292e;letter-spacing:-0.101px;line-height:1.15;">1 s</div>
<div class="t" style="left:945.22px;top:980.10px;font-size:12px;color:#24292e;letter-spacing:0.620px;line-height:1.15;">0 ms</div>
<div class="t" style="left:1002.13px;top:995.10px;font-size:12px;color:#24292e;letter-spacing:0.260px;line-height:1.15;">13:50</div>
<div class="t" style="left:1066.78px;top:995.10px;font-size:12px;color:#24292e;letter-spacing:0.260px;line-height:1.15;">14:00</div>
<div class="t" style="left:1132.29px;top:995.10px;font-size:12px;color:#24292e;letter-spacing:-0.087px;line-height:1.15;">14:10</div>
<div class="t" style="left:1196.07px;top:995.10px;font-size:12px;color:#24292e;letter-spacing:0.260px;line-height:1.15;">14:20</div>
<div class="t" style="left:1260.72px;top:995.10px;font-size:12px;color:#24292e;letter-spacing:0.260px;line-height:1.15;">14:30</div>
<div class="t" style="left:1325.37px;top:995.10px;font-size:12px;color:#24292e;letter-spacing:0.260px;line-height:1.15;">14:40</div>
<div class="b" style="left:16px;top:1086px;width:451px;height:258px;background:#fff;border-radius:2px;border:1px solid #e4e5e6;"></div>
<div class="t" style="left:25.30px;top:1094.95px;font-size:14px;color:#24292e;letter-spacing:0.635px;line-height:1.15;-webkit-text-stroke:0.3px #24292e;">Op: Attributes</div>
<div class="b" style="left:29.0px;top:1323.6px;width:14px;height:4px;border-radius:2px;background:#56a64b"></div>
<div class="t" style="left:51.00px;top:1319.10px;font-size:12px;color:#24292e;letter-spacing:0.485px;line-height:1.15;">99th Percentile</div>
<div class="b" style="left:148.7px;top:1323.6px;width:14px;height:4px;border-radius:2px;background:#e0b400"></div>
<div class="t" style="left:170.70px;top:1319.10px;font-size:12px;color:#24292e;letter-spacing:0.485px;line-height:1.15;">50th Percentile</div>
<div class="b" style="left:268.4px;top:1323.6px;width:14px;height:4px;border-radius:2px;background:#5794f2"></div>
<div class="t" style="left:290.40px;top:1319.10px;font-size:12px;color:#24292e;letter-spacing:0.319px;line-height:1.15;">Average</div>
<div class="t" style="left:27.61px;top:1144.10px;font-size:12px;color:#24292e;letter-spacing:0.391px;line-height:1.15;">100 ms</div>
<div class="t" style="left:33.35px;top:1179.10px;font-size:12px;color:#24292e;letter-spacing:0.656px;line-height:1.15;">75 ms</div>
<div class="t" style="left:33.35px;top:1214.10px;font-size:12px;color:#24292e;letter-spacing:0.656px;line-height:1.15;">50 ms</div>
<div class="t" style="left:33.35px;top:1249.10px;font-size:12px;color:#24292e;letter-spacing:0.656px;line-height:1.15;">25 ms</div>
<div class="t" style="left:40.82px;top:1284.10px;font-size:12px;color:#24292e;letter-spacing:0.620px;line-height:1.15;">0 ms</div>
<div class="t" style="left:96.98px;top:1299.10px;font-size:12px;color:#24292e;letter-spacing:0.260px;line-height:1.15;">13:50</div>
<div class="t" style="left:159.37px;top:1299.10px;font-size:12px;color:#24292e;letter-spacing:0.260px;line-height:1.15;">14:00</div>
<div class="t" style="left:222.63px;top:1299.10px;font-size:12px;color:#24292e;letter-spacing:-0.087px;line-height:1.15;">14:10</div>
<div class="t" style="left:284.16px;top:1299.10px;font-size:12px;color:#24292e;letter-spacing:0.260px;line-height:1.15;">14:20</div>
<div class="t" style="left:346.56px;top:1299.10px;font-size:12px;color:#24292e;letter-spacing:0.260px;line-height:1.15;">14:30</div>
<div class="t" style="left:408.95px;top:1299.10px;font-size:12px;color:#24292e;letter-spacing:0.260px;line-height:1.15;">14:40</div>
<div class="b" style="left:475px;top:1086px;width:450px;height:258px;background:#fff;border-radius:2px;border:1px solid #e4e5e6;"></div>
<div class="t" style="left:483.97px;top:1094.95px;font-size:14px;color:#24292e;letter-spacing:0.564px;line-height:1.15;-webkit-text-stroke:0.3px #24292e;">Op: Upload</div>
<div class="b" style="left:487.7px;top:1323.6px;width:14px;height:4px;border-radius:2px;background:#56a64b"></div>
<div class="t" style="left:509.70px;top:1319.10px;font-size:12px;color:#24292e;letter-spacing:0.485px;line-height:1.15;">99th Percentile</div>
<div class="b" style="left:607.4px;top:1323.6px;width:14px;height:4px;border-radius:2px;background:#e0b400"></div>
<div class="t" style="left:629.40px;top:1319.10px;font-size:12px;color:#24292e;letter-spacing:0.485px;line-height:1.15;">50th Percentile</div>
<div class="b" style="left:727.1px;top:1323.6px;width:14px;height:4px;border-radius:2px;background:#5794f2"></div>
<div class="t" style="left:749.10px;top:1319.10px;font-size:12px;color:#24292e;letter-spacing:0.319px;line-height:1.15;">Average</div>
<div class="t" style="left:486.02px;top:1155.10px;font-size:12px;color:#24292e;letter-spacing:0.351px;line-height:1.15;">1.67 mins</div>
<div class="t" style="left:486.02px;top:1187.30px;font-size:12px;color:#24292e;letter-spacing:0.351px;line-height:1.15;">1.25 mins</div>
<div class="t" style="left:516.30px;top:1219.60px;font-size:12px;color:#24292e;letter-spacing:0.558px;line-height:1.15;">50 s</div>
<div class="t" style="left:516.30px;top:1251.80px;font-size:12px;color:#24292e;letter-spacing:0.558px;line-height:1.15;">25 s</div>
<div class="t" style="left:512.72px;top:1284.10px;font-size:12px;color:#24292e;letter-spacing:0.620px;line-height:1.15;">0 ms</div>
<div class="t" style="left:567.47px;top:1299.10px;font-size:12px;color:#24292e;letter-spacing:0.260px;line-height:1.15;">13:50</div>
<div class="t" style="left:627.68px;top:1299.10px;font-size:12px;color:#24292e;letter-spacing:0.260px;line-height:1.15;">14:00</div>
<div class="t" style="left:688.75px;top:1299.10px;font-size:12px;color:#24292e;letter-spacing:-0.087px;line-height:1.15;">14:10</div>
<div class="t" style="left:748.09px;top:1299.10px;font-size:12px;color:#24292e;letter-spacing:0.260px;line-height:1.15;">14:20</div>
<div class="t" style="left:808.30px;top:1299.10px;font-size:12px;color:#24292e;letter-spacing:0.260px;line-height:1.15;">14:30</div>
<div class="t" style="left:868.51px;top:1299.10px;font-size:12px;color:#24292e;letter-spacing:0.260px;line-height:1.15;">14:40</div>
<div class="b" style="left:933px;top:1086px;width:451px;height:258px;background:#fff;border-radius:2px;border:1px solid #e4e5e6;"></div>
<div class="t" style="left:942.63px;top:1094.95px;font-size:14px;color:#24292e;letter-spacing:0.396px;line-height:1.15;-webkit-text-stroke:0.3px #24292e;">Op: Delete</div>
<div class="b" style="left:946.3px;top:1323.6px;width:14px;height:4px;border-radius:2px;background:#56a64b"></div>
<div class="t" style="left:968.30px;top:1319.10px;font-size:12px;color:#24292e;letter-spacing:0.485px;line-height:1.15;">99th Percentile</div>
<div class="b" style="left:1066.0px;top:1323.6px;width:14px;height:4px;border-radius:2px;background:#e0b400"></div>
<div class="t" style="left:1088.00px;top:1319.10px;font-size:12px;color:#24292e;letter-spacing:0.485px;line-height:1.15;">50th Percentile</div>
<div class="b" style="left:1185.7px;top:1323.6px;width:14px;height:4px;border-radius:2px;background:#5794f2"></div>
<div class="t" style="left:1207.70px;top:1319.10px;font-size:12px;color:#24292e;letter-spacing:0.319px;line-height:1.15;">Average</div>
<div class="t" style="left:971.07px;top:1143.50px;font-size:12px;color:#24292e;letter-spacing:0.477px;line-height:1.15;">2 s</div>
<div class="t" style="left:954.70px;top:1178.70px;font-size:12px;color:#24292e;letter-spacing:0.188px;line-height:1.15;">1.50 s</div>
<div class="t" style="left:972.80px;top:1213.80px;font-size:12px;color:#24292e;letter-spacing:-0.101px;line-height:1.15;">1 s</div>
<div class="t" style="left:945.07px;top:1249.00px;font-size:12px;color:#24292e;letter-spacing:0.680px;line-height:1.15;">500 ms</div>
<div class="t" style="left:960.02px;top:1284.10px;font-size:12px;color:#24292e;letter-spacing:0.620px;line-height:1.15;">0 ms</div>
<div class="t" style="left:1015.45px;top:1299.10px;font-size:12px;color:#24292e;letter-spacing:0.260px;line-height:1.15;">13:50</div>
<div class="t" style="left:1077.64px;top:1299.10px;font-size:12px;color:#24292e;letter-spacing:0.260px;line-height:1.15;">14:00</div>
<div class="t" style="left:1140.69px;top:1299.10px;font-size:12px;color:#24292e;letter-spacing:-0.087px;line-height:1.15;">14:10</div>
<div class="t" style="left:1202.00px;top:1299.10px;font-size:12px;color:#24292e;letter-spacing:0.260px;line-height:1.15;">14:20</div>
<div class="t" style="left:1264.19px;top:1299.10px;font-size:12px;color:#24292e;letter-spacing:0.260px;line-height:1.15;">14:30</div>
<div class="t" style="left:1326.37px;top:1299.10px;font-size:12px;color:#24292e;letter-spacing:0.260px;line-height:1.15;">14:40</div>
<svg style="left:0;top:0" width="1400" height="1400" viewBox="0 0 1400 1400"><path d="M90 249.5H680" stroke="rgba(36,41,46,0.12)" stroke-width="1"/>
<path d="M90 302.5H680" stroke="rgba(36,41,46,0.12)" stroke-width="1"/>
<path d="M90 354.5H680" stroke="rgba(36,41,46,0.12)" stroke-width="1"/>
<path d="M149.5 223V359" stroke="rgba(36,41,46,0.12)" stroke-width="1"/>
<path d="M247.5 223V359" stroke="rgba(36,41,46,0.12)" stroke-width="1"/>
<path d="M345.5 223V359" stroke="rgba(36,41,46,0.12)" stroke-width="1"/>
<path d="M443.5 223V359" stroke="rgba(36,41,46,0.12)" stroke-width="1"/>
<path d="M541.5 223V359" stroke="rgba(36,41,46,0.12)" stroke-width="1"/>
<path d="M639.5 223V359" stroke="rgba(36,41,46,0.12)" stroke-width="1"/>
<path d="M90.1 354.7 L90.1 276.1 L91.9 291.1 L94.8 290.1 L99.1 276.6 L102.0 283.3 L104.4 301.2 L106.8 316.6 L108.7 324.3 L111.6 329.6 L113.3 310.8 L114.5 308.4 L116.7 306.0 L119.3 267.4 L121.3 283.8 L124.2 292.5 L126.4 304.1 L129.0 291.5 L133.8 286.2 L136.2 289.1 L138.6 290.1 L141.0 307.0 L143.4 301.2 L148.8 292.5 L150.7 312.8 L152.4 314.2 L155.5 321.4 L157.6 320.9 L160.8 327.2 L170.9 303.1 L180.1 334.0 L183.0 321.4 L184.9 292.5 L188.0 282.9 L189.9 278.5 L191.9 294.4 L194.8 314.7 L197.6 319.0 L200.1 324.3 L202.5 323.4 L204.9 339.8 L206.8 325.3 L210.2 320.5 L212.1 304.1 L215.0 299.7 L217.4 283.3 L220.3 294.4 L221.8 314.7 L225.1 321.9 L229.0 314.7 L233.8 328.2 L237.2 321.9 L239.1 322.9 L242.0 303.6 L244.4 302.6 L247.3 277.6 L249.2 275.1 L251.6 254.9 L254.1 275.1 L256.5 287.7 L258.9 311.8 L261.3 290.6 L264.2 294.4 L266.1 301.2 L269.5 325.3 L276.2 286.7 L281.1 306.0 L283.0 320.5 L284.4 305.0 L288.0 289.1 L290.9 289.1 L292.8 309.9 L296.2 315.6 L298.1 315.2 L301.0 318.5 L303.4 304.6 L305.8 301.7 L308.3 249.1 L310.4 237.1 L312.9 240.4 L315.0 279.0 L317.9 305.0 L319.8 293.5 L322.7 311.8 L325.1 291.5 L328.0 290.1 L330.2 271.3 L334.8 280.4 L337.2 292.5 L340.1 290.1 L342.0 304.1 L344.9 304.1 L346.8 316.6 L349.7 319.5 L352.1 326.3 L356.9 320.9 L359.8 323.4 L362.3 329.1 L367.1 322.4 L371.9 324.3 L376.7 314.2 L379.1 319.5 L382.0 313.7 L384.4 295.4 L386.4 276.1 L388.0 279.0 L391.4 291.5 L394.3 312.8 L396.2 303.6 L399.1 311.3 L401.0 306.0 L403.9 274.2 L406.3 271.3 L408.7 264.5 L411.1 308.9 L413.8 283.8 L416.0 298.3 L418.4 303.1 L421.3 311.3 L423.2 307.0 L426.1 306.5 L428.0 318.1 L432.8 329.1 L438.1 313.7 L441.0 307.9 L447.8 326.3 L455.0 306.5 L457.9 313.7 L460.3 332.0 L463.2 324.8 L465.1 311.3 L468.0 312.3 L470.0 322.4 L471.9 323.4 L474.8 319.5 L477.2 306.5 L479.6 310.3 L482.0 308.4 L484.9 318.1 L486.8 301.2 L488.0 298.8 L489.9 297.3 L492.1 280.9 L494.6 303.1 L497.2 289.1 L501.5 304.1 L503.9 307.9 L506.8 310.3 L509.2 316.1 L512.6 318.5 L516.4 317.1 L521.3 329.6 L524.2 327.2 L528.0 327.7 L529.5 333.0 L530.9 320.5 L533.8 318.1 L536.2 303.1 L538.6 313.7 L542.0 279.0 L543.9 260.7 L545.7 258.8 L547.3 265.5 L549.2 281.9 L551.2 314.7 L553.1 310.8 L555.5 309.9 L557.9 313.7 L560.8 312.8 L563.2 299.3 L566.1 300.2 L568.0 302.1 L570.9 321.4 L573.3 301.2 L577.7 293.5 L579.6 311.8 L584.4 330.1 L587.3 305.0 L588.0 304.1 L590.4 273.2 L592.8 245.7 L595.2 279.0 L597.6 302.1 L600.1 334.0 L603.4 324.3 L605.4 328.2 L607.3 338.8 L610.7 333.0 L613.1 332.0 L615.5 334.0 L617.4 339.3 L619.8 333.0 L622.2 324.8 L625.1 320.9 L627.5 320.0 L629.9 314.2 L631.9 316.1 L633.8 314.2 L637.2 321.4 L639.1 318.1 L641.5 320.0 L644.4 323.8 L647.8 326.3 L651.6 323.4 L656.9 337.8 L659.4 315.6 L663.7 295.9 L666.1 331.1 L668.8 354.2 L668.8 354.7Z" fill="#a352cc" fill-opacity="1" stroke="none"/>
<path d="M90.1 354.7 L90.1 287.7 L91.9 299.7 L94.8 296.4 L98.6 287.7 L100.1 292.5 L102.5 307.0 L105.8 329.1 L106.8 332.5 L109.2 330.1 L111.6 334.5 L113.3 315.6 L116.7 309.9 L119.1 273.2 L121.3 285.8 L124.2 294.4 L126.4 310.3 L129.0 299.3 L134.3 291.5 L138.6 293.9 L141.0 310.3 L143.4 307.0 L145.9 309.4 L148.8 305.0 L150.7 320.0 L152.4 314.7 L155.5 321.4 L157.6 320.9 L160.8 327.2 L170.9 303.1 L180.1 334.0 L183.0 321.4 L184.9 292.5 L188.0 282.9 L189.9 280.4 L191.9 295.4 L194.8 315.6 L200.1 327.2 L202.5 327.7 L204.9 339.8 L206.8 326.3 L210.2 321.4 L212.1 307.4 L215.0 306.0 L216.9 303.6 L219.8 311.8 L222.2 334.5 L229.0 315.6 L233.8 328.7 L237.2 322.4 L239.1 323.4 L242.0 304.6 L246.8 303.6 L248.8 328.2 L254.1 339.3 L256.5 334.5 L258.9 333.0 L261.3 311.8 L264.2 315.2 L265.6 312.3 L269.5 335.4 L273.3 334.9 L276.2 330.1 L278.6 333.5 L281.1 334.5 L282.7 339.3 L284.9 311.8 L288.0 297.8 L290.9 298.3 L292.8 330.6 L296.7 334.9 L298.1 332.5 L301.0 320.5 L305.8 325.8 L307.8 284.8 L310.2 268.4 L313.1 269.8 L315.0 282.9 L317.9 321.4 L319.8 310.8 L322.7 327.2 L325.1 302.1 L328.0 297.3 L330.2 289.1 L334.8 303.6 L340.1 291.5 L342.0 307.0 L344.9 307.0 L346.8 320.5 L349.7 323.8 L352.1 338.3 L357.4 330.6 L362.3 336.9 L367.1 323.4 L371.9 324.8 L376.7 314.7 L379.1 320.0 L382.0 314.2 L384.4 296.4 L386.4 277.6 L388.0 280.0 L391.4 291.5 L394.3 312.8 L396.2 303.6 L399.1 311.3 L401.0 306.0 L403.9 274.2 L406.3 271.3 L408.7 264.5 L411.1 308.9 L413.8 283.8 L416.0 298.3 L418.4 303.1 L421.3 311.3 L423.2 307.0 L426.1 306.5 L428.0 318.1 L432.8 329.1 L438.1 313.7 L441.0 307.9 L447.8 326.3 L455.0 306.5 L457.9 313.7 L460.3 332.0 L463.2 324.8 L465.1 313.7 L468.0 316.6 L471.9 334.0 L474.8 327.2 L477.2 315.6 L479.6 315.6 L482.0 311.3 L484.9 321.4 L486.8 303.1 L488.0 301.2 L489.9 299.7 L492.1 282.9 L494.6 304.6 L497.2 292.5 L501.5 306.0 L503.9 310.3 L506.8 311.8 L509.2 316.6 L513.1 321.4 L516.9 323.4 L521.3 331.6 L524.2 331.1 L529.0 334.5 L531.4 322.4 L533.8 322.4 L536.2 305.0 L538.6 316.1 L542.0 280.4 L543.9 263.6 L545.7 262.6 L549.2 282.9 L551.2 321.4 L554.5 321.4 L558.4 325.3 L560.8 326.3 L563.2 332.0 L566.1 334.5 L568.0 334.0 L570.9 335.9 L573.3 315.6 L575.8 305.5 L577.7 302.1 L579.6 314.7 L584.4 332.0 L587.3 311.8 L588.0 309.9 L590.4 275.1 L592.8 252.0 L595.2 280.9 L597.6 304.1 L600.1 334.9 L603.4 327.2 L605.4 329.1 L607.3 339.3 L610.7 334.9 L615.5 335.4 L617.4 339.8 L619.8 334.0 L622.2 326.7 L625.1 323.4 L629.9 318.5 L631.9 321.4 L633.8 320.0 L637.2 324.3 L639.1 320.5 L644.4 327.2 L647.3 330.1 L651.6 327.7 L656.9 339.3 L659.4 317.6 L663.7 300.2 L666.1 332.0 L668.8 354.2 L668.8 354.7Z" fill="#3274d9" fill-opacity="1" stroke="none"/>
<path d="M93.8 354.2 L99.6 347.5 L102.5 346.0 L104.9 349.4 L108.7 354.2Z" fill="#5794f2" fill-opacity="1" stroke="none"/>
<path d="M130.4 320.0 L133.3 316.1 L136.2 319.0 L138.6 320.5 L140.6 330.6 L145.9 334.0 L148.6 330.6 L150.7 339.8 L145.9 344.6 L145.4 349.4 L141.0 333.0 L138.6 326.3 L135.3 325.3Z" fill="#5794f2" fill-opacity="1" stroke="none"/>
<path d="M237.2 354.2 L240.6 345.5 L243.4 342.2 L246.3 344.6 L248.8 354.2Z" fill="#5794f2" fill-opacity="1" stroke="none"/>
<path d="M307.8 354.2 L310.4 350.4 L314.0 350.4 L316.9 354.2Z" fill="#5794f2" fill-opacity="1" stroke="none"/>
<path d="M329.5 325.3 L332.6 312.8 L333.8 317.6 L337.2 325.3 L340.1 317.1 L344.4 324.3 L345.9 340.7 L350.7 347.5 L352.6 354.2 L349.7 353.3 L345.9 346.5 L342.5 333.0 L340.1 326.3 L337.7 327.7 L335.3 325.3 L332.6 319.0Z" fill="#5794f2" fill-opacity="1" stroke="none"/>
<path d="M395.2 354.2 L397.6 350.4 L401.0 342.6 L403.9 340.7 L405.8 337.3 L410.7 336.9 L415.5 331.1 L419.8 336.9 L422.7 339.8 L426.1 336.9 L428.5 339.3 L431.9 346.5 L435.3 354.2Z" fill="#5794f2" fill-opacity="1" stroke="none"/>
<path d="M435.7 354.2 L437.7 345.5 L442.5 344.6 L444.4 352.3 L447.8 352.3 L449.7 338.3 L452.6 341.2 L455.0 340.2 L457.4 349.4 L459.4 348.9 L458.4 350.4 L455.5 350.8 L453.6 352.3 L449.7 351.8 L444.9 351.8 L442.0 354.2Z" fill="#5794f2" fill-opacity="1" stroke="none"/>
<path d="M533.8 354.2 L535.7 337.3 L541.0 337.3 L543.4 354.2Z" fill="#5794f2" fill-opacity="1" stroke="none"/>
<path d="M552.6 353.7 L557.9 344.6 L560.3 344.6 L562.7 350.8 L557.9 350.8 L555.5 353.7Z" fill="#5794f2" fill-opacity="1" stroke="none"/>
<path d="M631.9 354.2 L633.8 339.8 L638.6 338.8 L641.0 350.4 L638.1 354.2Z" fill="#5794f2" fill-opacity="1" stroke="none"/>
<path d="M658.9 353.7 L661.3 340.7 L664.7 336.9 L666.6 340.7 L668.5 354.2Z" fill="#5794f2" fill-opacity="1" stroke="none"/>
<path d="M144.4 349.4 L145.9 344.6 L150.7 339.8 L152.4 347.5 L155.5 354.2 L151.2 346.0 L148.3 345.5 L145.4 349.4Z" fill="#e0b400" fill-opacity="1" stroke="none"/>
<path d="M367.1 354.2 L370.0 343.6 L372.4 341.2 L374.8 345.5 L378.6 354.2Z" fill="#e0b400" fill-opacity="1" stroke="none"/>
<path d="M442.0 354.2 L444.9 351.8 L449.7 351.8 L453.6 352.3 L455.5 350.8 L458.4 350.4 L460.3 347.0 L465.1 346.0 L470.9 354.2Z" fill="#e0b400" fill-opacity="1" stroke="none"/>
<path d="M485.4 354.2 L488.0 351.8 L488.0 354.2Z" fill="#e0b400" fill-opacity="1" stroke="none"/>
<path d="M488.0 354.2 L488.0 352.3 L492.3 351.8 L497.2 346.5 L503.4 353.7 L515.0 353.7 L524.2 350.8 L529.5 354.2Z" fill="#e0b400" fill-opacity="1" stroke="none"/>
<path d="M544.4 354.2 L546.8 351.8 L551.6 353.7 L555.5 353.7 L557.9 350.8 L562.3 350.8 L566.1 354.2Z" fill="#e0b400" fill-opacity="1" stroke="none"/>
<path d="M638.1 354.2 L643.9 346.5 L646.8 345.3 L651.2 351.8 L659.4 353.7 L665.1 354.2Z" fill="#e0b400" fill-opacity="1" stroke="none"/>
<path d="M117.9 354.2 L123.7 352.3 L125.1 345.5 L126.6 334.0 L130.4 320.0 L135.3 325.3 L138.6 326.3 L141.0 333.0 L145.4 349.4 L148.3 345.5 L151.2 346.0 L155.5 354.2Z" fill="#56a64b" fill-opacity="1" stroke="none"/>
<path d="M162.3 354.2 L166.6 352.3 L171.9 354.2Z" fill="#56a64b" fill-opacity="1" stroke="none"/>
<path d="M321.8 354.2 L324.6 350.4 L326.6 340.7 L329.5 325.3 L332.6 319.0 L335.3 325.3 L337.7 327.7 L340.1 326.3 L342.5 333.0 L345.9 346.5 L349.7 353.3 L352.6 354.2Z" fill="#56a64b" fill-opacity="1" stroke="none"/>
<path d="M367.1 354.2 L372.4 347.0 L378.2 354.2Z" fill="#56a64b" fill-opacity="1" stroke="none"/>
<path d="M90.3 354.4H669" stroke="#e0b400" stroke-width="1"/>
<path d="M754 223.5H1368" stroke="rgba(36,41,46,0.12)" stroke-width="1"/>
<path d="M754 256.5H1368" stroke="rgba(36,41,46,0.12)" stroke-width="1"/>
<path d="M754 289.5H1368" stroke="rgba(36,41,46,0.12)" stroke-width="1"/>
<path d="M754 322.5H1368" stroke="rgba(36,41,46,0.12)" stroke-width="1"/>
<path d="M754 355.5H1368" stroke="rgba(36,41,46,0.12)" stroke-width="1"/>
<path d="M764.5 223V360" stroke="rgba(36,41,46,0.12)" stroke-width="1"/>
<path d="M815.5 223V360" stroke="rgba(36,41,46,0.12)" stroke-width="1"/>
<path d="M866.5 223V360" stroke="rgba(36,41,46,0.12)" stroke-width="1"/>
<path d="M917.5 223V360" stroke="rgba(36,41,46,0.12)" stroke-width="1"/>
<path d="M968.5 223V360" stroke="rgba(36,41,46,0.12)" stroke-width="1"/>
<path d="M1019.5 223V360" stroke="rgba(36,41,46,0.12)" stroke-width="1"/>
<path d="M1070.5 223V360" stroke="rgba(36,41,46,0.12)" stroke-width="1"/>
<path d="M1121.5 223V360" stroke="rgba(36,41,46,0.12)" stroke-width="1"/>
<path d="M1172.5 223V360" stroke="rgba(36,41,46,0.12)" stroke-width="1"/>
<path d="M1223.5 223V360" stroke="rgba(36,41,46,0.12)" stroke-width="1"/>
<path d="M1274.5 223V360" stroke="rgba(36,41,46,0.12)" stroke-width="1"/>
<path d="M1325.5 223V360" stroke="rgba(36,41,46,0.12)" stroke-width="1"/>
<path d="M754.3 355.3 L1367.4 355.3" fill="none" stroke="#a352cc" stroke-width="1" stroke-linejoin="round"/>
<path d="M90 527.5H680" stroke="rgba(36,41,46,0.12)" stroke-width="1"/>
<path d="M90 558.5H680" stroke="rgba(36,41,46,0.12)" stroke-width="1"/>
<path d="M90 589.5H680" stroke="rgba(36,41,46,0.12)" stroke-width="1"/>
<path d="M90 619.5H680" stroke="rgba(36,41,46,0.12)" stroke-width="1"/>
<path d="M90 650.5H680" stroke="rgba(36,41,46,0.12)" stroke-width="1"/>
<path d="M90 681.5H680" stroke="rgba(36,41,46,0.12)" stroke-width="1"/>
<path d="M149.5 527V686" stroke="rgba(36,41,46,0.12)" stroke-width="1"/>
<path d="M247.5 527V686" stroke="rgba(36,41,46,0.12)" stroke-width="1"/>
<path d="M345.5 527V686" stroke="rgba(36,41,46,0.12)" stroke-width="1"/>
<path d="M443.5 527V686" stroke="rgba(36,41,46,0.12)" stroke-width="1"/>
<path d="M541.5 527V686" stroke="rgba(36,41,46,0.12)" stroke-width="1"/>
<path d="M639.5 527V686" stroke="rgba(36,41,46,0.12)" stroke-width="1"/>
<path d="M90.3 681.7 L90.3 590.7 L91.0 597.8 L91.7 604.9 L92.4 606.3 L93.1 606.0 L93.8 605.7 L94.5 605.4 L95.2 603.7 L95.9 601.1 L96.6 598.6 L97.3 596.0 L98.0 593.5 L98.7 590.9 L99.4 590.4 L100.1 592.3 L100.8 594.2 L101.5 596.1 L102.2 599.3 L102.9 605.4 L103.6 611.5 L104.3 617.5 L105.0 622.9 L105.7 628.1 L106.4 633.4 L107.1 637.8 L107.8 641.1 L108.5 644.4 L109.2 646.5 L109.9 648.0 L110.6 649.5 L111.3 651.0 L112.0 646.7 L112.7 637.2 L113.4 629.3 L114.1 627.8 L114.8 626.5 L115.5 625.6 L116.2 624.7 L116.9 621.2 L117.6 609.0 L118.3 596.8 L119.0 584.7 L119.7 582.3 L120.4 589.3 L121.1 596.3 L121.8 599.9 L122.5 602.3 L123.2 604.8 L123.9 607.2 L124.6 610.8 L125.3 615.1 L126.0 619.4 L126.7 619.9 L127.4 616.0 L128.1 612.0 L128.8 608.1 L129.5 606.4 L130.2 605.5 L130.9 604.6 L131.6 603.7 L132.3 602.8 L133.0 601.8 L133.7 600.9 L134.4 601.6 L135.1 602.6 L135.8 603.6 L136.5 604.3 L137.2 604.7 L137.9 605.0 L138.6 605.3 L139.3 610.9 L140.0 616.6 L140.7 622.4 L141.4 624.1 L142.1 622.1 L142.8 620.2 L143.5 618.2 L144.2 616.9 L144.9 615.6 L145.6 614.2 L146.3 612.9 L147.0 611.5 L147.7 610.2 L148.4 608.8 L149.1 612.4 L149.8 621.1 L150.5 629.7 L151.2 632.4 L151.9 633.1 L152.6 634.1 L153.3 636.0 L154.0 638.0 L154.7 639.9 L155.4 641.8 L156.1 641.9 L156.8 641.7 L157.5 641.6 L158.2 642.9 L158.9 644.5 L159.6 646.1 L160.3 647.7 L161.0 648.3 L161.7 646.4 L162.4 644.4 L163.1 642.5 L163.8 640.5 L164.5 638.6 L165.2 636.6 L165.9 634.6 L166.6 632.7 L167.3 630.7 L168.0 628.8 L168.7 626.8 L169.4 624.9 L170.1 622.9 L170.8 621.0 L171.5 622.8 L172.2 625.6 L172.9 628.4 L173.6 631.1 L174.3 633.9 L175.0 636.7 L175.7 639.4 L176.4 642.2 L177.1 645.0 L177.8 647.7 L178.5 650.5 L179.2 653.3 L179.9 656.0 L180.6 654.2 L181.3 650.7 L182.0 647.1 L182.7 643.5 L183.4 634.8 L184.1 622.5 L184.8 610.2 L185.5 606.0 L186.2 603.4 L186.9 600.9 L187.6 598.3 L188.3 596.1 L189.0 594.2 L189.7 592.4 L190.4 596.3 L191.1 603.1 L191.8 609.9 L192.5 615.7 L193.2 621.4 L193.9 627.2 L194.6 632.9 L195.3 635.1 L196.0 636.4 L196.7 637.6 L197.4 638.8 L198.1 640.4 L198.8 642.2 L199.5 644.0 L200.2 645.4 L200.9 645.1 L201.6 644.8 L202.3 644.4 L203.0 648.6 L203.7 654.2 L204.4 659.8 L205.1 661.6 L205.8 655.4 L206.5 649.3 L207.2 645.9 L207.9 644.8 L208.6 643.6 L209.3 642.4 L210.0 641.3 L210.7 635.8 L211.4 628.8 L212.1 621.8 L212.8 620.5 L213.5 619.3 L214.2 618.1 L214.9 616.8 L215.6 611.9 L216.3 606.3 L217.0 600.7 L217.7 598.7 L218.4 601.9 L219.1 605.0 L219.8 608.2 L220.5 613.6 L221.2 625.1 L221.9 634.5 L222.6 636.3 L223.3 638.1 L224.0 639.8 L224.7 641.6 L225.4 642.0 L226.1 640.5 L226.8 639.0 L227.5 637.4 L228.2 635.9 L228.9 634.4 L229.6 636.2 L230.3 638.5 L231.0 640.8 L231.7 643.1 L232.4 645.4 L233.1 647.7 L233.8 650.0 L234.5 648.5 L235.2 647.0 L235.9 645.4 L236.6 643.9 L237.3 642.7 L238.0 643.1 L238.7 643.5 L239.4 641.5 L240.1 636.0 L240.8 630.6 L241.5 625.1 L242.2 621.1 L242.9 620.7 L243.6 620.4 L244.3 620.1 L245.0 614.1 L245.7 607.0 L246.4 599.8 L247.1 592.7 L247.8 589.9 L248.5 588.9 L249.2 587.9 L249.9 581.2 L250.6 574.4 L251.3 567.5 L252.0 567.6 L252.7 574.4 L253.4 581.3 L254.1 588.1 L254.8 592.3 L255.5 596.6 L256.2 600.9 L256.9 607.6 L257.6 615.8 L258.3 624.0 L259.0 629.5 L259.7 622.3 L260.4 615.1 L261.1 607.8 L261.8 606.7 L262.5 607.8 L263.2 608.9 L263.9 610.0 L264.6 612.1 L265.3 615.0 L266.0 617.9 L266.7 623.3 L267.4 629.1 L268.1 635.0 L268.8 640.9 L269.5 646.5 L270.2 641.8 L270.9 637.1 L271.6 632.4 L272.3 627.7 L273.0 623.1 L273.7 618.4 L274.4 613.7 L275.1 609.0 L275.8 604.3 L276.5 602.6 L277.2 605.9 L277.9 609.2 L278.6 612.5 L279.3 615.8 L280.0 619.0 L280.7 622.3 L281.4 627.0 L282.1 633.2 L282.8 639.3 L283.5 634.5 L284.2 625.8 L284.9 620.4 L285.6 616.8 L286.3 613.1 L287.0 609.4 L287.7 605.8 L288.4 604.2 L289.1 604.2 L289.8 604.2 L290.5 604.2 L291.2 608.1 L291.9 616.9 L292.6 625.7 L293.3 629.5 L294.0 630.9 L294.7 632.3 L295.4 633.7 L296.1 635.1 L296.8 635.1 L297.5 634.9 L298.2 634.8 L298.9 635.8 L299.6 636.8 L300.3 637.7 L301.0 638.7 L301.7 634.1 L302.4 629.3 L303.1 624.5 L303.8 621.8 L304.5 620.8 L305.2 619.8 L305.9 617.4 L306.6 599.5 L307.3 581.6 L308.0 563.7 L308.7 554.3 L309.4 549.6 L310.1 545.0 L310.8 543.8 L311.5 544.9 L312.2 546.0 L312.9 547.5 L313.6 562.5 L314.3 577.4 L315.0 592.3 L315.7 599.7 L316.4 607.1 L317.1 614.5 L317.8 621.9 L318.5 618.6 L319.2 613.7 L319.9 609.9 L320.6 615.1 L321.3 620.3 L322.0 625.5 L322.7 630.7 L323.4 624.0 L324.1 617.1 L324.8 610.2 L325.5 606.8 L326.2 606.4 L326.9 606.0 L327.6 605.6 L328.3 602.5 L329.0 595.6 L329.7 588.6 L330.4 583.7 L331.1 585.3 L331.8 587.0 L332.5 588.6 L333.2 590.3 L333.9 592.0 L334.6 593.6 L335.3 597.1 L336.0 601.2 L336.7 605.3 L337.4 607.9 L338.1 607.3 L338.8 606.6 L339.5 605.9 L340.2 606.4 L340.9 612.4 L341.6 618.3 L342.3 621.7 L343.0 621.7 L343.7 621.7 L344.4 621.7 L345.1 623.3 L345.8 628.6 L346.5 634.0 L347.2 636.9 L347.9 637.7 L348.6 638.5 L349.3 639.3 L350.0 640.8 L350.7 643.1 L351.4 645.4 L352.1 647.7 L352.8 646.9 L353.5 646.0 L354.2 645.1 L354.9 644.2 L355.6 643.3 L356.3 642.4 L357.0 641.6 L357.7 642.3 L358.4 642.9 L359.1 643.6 L359.8 644.3 L360.5 646.2 L361.2 648.2 L361.9 650.1 L362.6 650.6 L363.3 649.4 L364.0 648.3 L364.7 647.1 L365.4 646.0 L366.1 644.8 L366.8 643.7 L367.5 643.4 L368.2 643.7 L368.9 644.1 L369.6 644.4 L370.3 644.7 L371.0 645.1 L371.7 645.4 L372.4 644.2 L373.1 642.5 L373.8 640.8 L374.5 639.1 L375.2 637.3 L375.9 635.6 L376.6 633.9 L377.3 635.1 L378.0 636.9 L378.7 638.7 L379.4 639.2 L380.1 637.5 L380.8 635.9 L381.5 634.3 L382.2 631.4 L382.9 625.2 L383.6 619.0 L384.3 612.7 L385.0 604.9 L385.7 596.7 L386.4 589.0 L387.1 590.5 L387.8 591.9 L388.5 594.5 L389.2 597.6 L389.9 600.6 L390.6 603.7 L391.3 606.7 L392.0 612.4 L392.7 618.4 L393.4 624.4 L394.1 630.5 L394.8 628.9 L395.5 625.0 L396.2 621.2 L396.9 623.4 L397.6 625.6 L398.3 627.7 L399.0 629.9 L399.7 628.2 L400.4 626.0 L401.1 622.9 L401.8 613.9 L402.5 604.9 L403.2 595.9 L403.9 586.8 L404.6 585.7 L405.3 584.7 L406.0 583.7 L406.7 582.0 L407.4 579.7 L408.1 577.4 L408.8 576.8 L409.5 591.9 L410.2 607.0 L410.9 622.1 L411.6 622.4 L412.3 614.8 L413.0 607.2 L413.7 599.5 L414.4 602.4 L415.1 608.0 L415.8 613.6 L416.5 616.2 L417.2 617.8 L417.9 619.5 L418.6 621.3 L419.3 623.7 L420.0 626.0 L420.7 628.3 L421.4 629.9 L422.1 628.0 L422.8 626.2 L423.5 625.1 L424.2 624.9 L424.9 624.8 L425.6 624.7 L426.3 626.0 L427.0 631.0 L427.7 635.9 L428.4 639.2 L429.1 641.0 L429.8 642.9 L430.5 644.8 L431.2 646.7 L431.9 648.6 L432.6 650.5 L433.3 649.6 L434.0 647.2 L434.7 644.8 L435.4 642.4 L436.1 640.0 L436.8 637.6 L437.5 635.2 L438.2 632.9 L438.9 631.3 L439.6 629.6 L440.3 628.0 L441.0 626.3 L441.7 628.4 L442.4 630.6 L443.1 632.8 L443.8 635.0 L444.5 637.3 L445.2 639.5 L445.9 641.7 L446.6 644.0 L447.3 646.2 L448.0 647.1 L448.7 644.8 L449.4 642.6 L450.1 640.3 L450.8 638.1 L451.5 635.8 L452.2 633.6 L452.9 631.4 L453.6 629.1 L454.3 626.9 L455.0 624.6 L455.7 626.6 L456.4 628.6 L457.1 630.7 L457.8 632.7 L458.5 638.3 L459.2 644.5 L459.9 650.7 L460.6 653.7 L461.3 651.7 L462.0 649.6 L462.7 647.6 L463.4 644.5 L464.1 638.8 L464.8 633.0 L465.5 630.4 L466.2 630.6 L466.9 630.9 L467.6 631.2 L468.3 633.0 L469.0 637.3 L469.7 641.6 L470.4 643.5 L471.1 643.9 L471.8 644.3 L472.5 643.4 L473.2 642.3 L473.9 641.2 L474.6 640.1 L475.3 636.6 L476.0 632.2 L476.7 627.7 L477.4 624.9 L478.1 626.2 L478.8 627.6 L479.5 628.9 L480.2 628.5 L480.9 627.9 L481.6 627.2 L482.3 627.9 L483.0 630.6 L483.7 633.4 L484.4 636.1 L485.1 636.2 L485.8 629.0 L486.5 621.9 L487.2 617.5 L487.9 615.8 L488.6 615.0 L489.3 614.4 L490.0 613.2 L490.7 606.8 L491.4 600.5 L492.1 595.1 L492.8 602.4 L493.5 609.6 L494.2 616.9 L494.9 618.4 L495.6 614.0 L496.3 609.6 L497.0 605.2 L497.7 606.4 L498.4 609.2 L499.1 612.0 L499.8 614.9 L500.5 617.7 L501.2 620.5 L501.9 622.5 L502.6 623.8 L503.3 625.1 L504.0 626.3 L504.7 627.0 L505.4 627.7 L506.1 628.4 L506.8 629.1 L507.5 631.0 L508.2 633.0 L508.9 635.0 L509.6 636.2 L510.3 636.8 L511.0 637.4 L511.7 637.9 L512.4 638.5 L513.1 638.5 L513.8 638.2 L514.5 637.9 L515.2 637.5 L515.9 637.2 L516.6 637.5 L517.3 639.6 L518.0 641.7 L518.7 643.9 L519.4 646.0 L520.1 648.1 L520.8 650.3 L521.5 651.5 L522.2 650.8 L522.9 650.1 L523.6 649.4 L524.3 648.9 L525.0 649.0 L525.7 649.1 L526.4 649.2 L527.1 649.3 L527.8 649.4 L528.5 651.5 L529.2 654.5 L529.9 651.2 L530.6 644.1 L531.3 640.6 L532.0 639.9 L532.7 639.2 L533.4 638.5 L534.1 636.0 L534.8 630.9 L535.5 625.8 L536.2 620.7 L536.9 624.1 L537.6 627.7 L538.3 631.4 L539.0 628.5 L539.7 620.1 L540.4 611.7 L541.1 603.2 L541.8 594.8 L542.5 586.8 L543.2 579.0 L543.9 571.2 L544.6 570.0 L545.3 569.1 L546.0 570.2 L546.7 573.6 L547.4 577.4 L548.1 584.4 L548.8 591.4 L549.5 601.0 L550.2 615.0 L550.9 628.9 L551.6 633.1 L552.3 631.5 L553.0 629.9 L553.7 629.4 L554.4 629.0 L555.1 628.7 L555.8 629.1 L556.5 630.4 L557.2 631.7 L557.9 633.0 L558.6 632.8 L559.3 632.5 L560.0 632.2 L560.7 632.0 L561.4 628.0 L562.1 623.4 L562.8 618.8 L563.5 616.2 L564.2 616.5 L564.9 616.7 L565.6 617.0 L566.3 617.4 L567.0 618.3 L567.7 619.1 L568.4 622.3 L569.1 627.8 L569.8 633.2 L570.5 638.7 L571.2 639.4 L571.9 632.5 L572.6 625.7 L573.3 618.8 L574.0 617.0 L574.7 615.5 L575.4 614.0 L576.1 612.6 L576.8 611.1 L577.5 609.7 L578.2 615.1 L578.9 622.9 L579.6 630.7 L580.3 633.9 L581.0 637.0 L581.7 640.1 L582.4 643.2 L583.1 646.3 L583.8 649.4 L584.5 651.6 L585.2 644.5 L585.9 637.3 L586.6 630.2 L587.3 623.1 L588.0 621.7 L588.7 611.2 L589.4 600.7 L590.1 590.2 L590.8 580.3 L591.5 571.0 L592.2 561.6 L592.9 554.6 L593.6 565.9 L594.3 577.2 L595.0 588.6 L595.7 597.6 L596.4 605.5 L597.1 613.4 L597.8 621.9 L598.5 632.7 L599.2 643.6 L599.9 654.4 L600.6 655.0 L601.3 652.6 L602.0 650.3 L602.7 647.9 L603.4 645.6 L604.1 647.1 L604.8 648.7 L605.5 650.9 L606.2 655.4 L606.9 659.9 L607.6 661.8 L608.3 660.4 L609.0 659.0 L609.7 657.6 L610.4 656.2 L611.1 655.5 L611.8 655.1 L612.5 654.8 L613.2 654.6 L613.9 655.3 L614.6 656.0 L615.3 656.6 L616.0 658.5 L616.7 660.7 L617.4 663.0 L618.1 660.9 L618.8 658.8 L619.5 656.6 L620.2 654.2 L620.9 651.4 L621.6 648.6 L622.3 645.9 L623.0 644.8 L623.7 643.8 L624.4 642.7 L625.1 641.6 L625.8 641.2 L626.5 640.9 L627.2 640.5 L627.9 639.4 L628.6 637.4 L629.3 635.4 L630.0 633.7 L630.7 634.5 L631.4 635.3 L632.1 635.6 L632.8 634.8 L633.5 634.0 L634.2 634.6 L634.9 636.4 L635.6 638.1 L636.3 639.9 L637.0 641.6 L637.7 641.0 L638.4 639.6 L639.1 638.1 L639.8 638.8 L640.5 639.4 L641.2 640.1 L641.9 641.0 L642.6 642.1 L643.3 643.2 L644.0 644.3 L644.7 645.2 L645.4 645.7 L646.1 646.3 L646.8 646.9 L647.5 647.5 L648.2 647.4 L648.9 646.8 L649.6 646.1 L650.3 645.5 L651.0 644.9 L651.7 644.5 L652.4 646.8 L653.1 649.0 L653.8 651.2 L654.5 653.5 L655.2 655.7 L655.9 658.0 L656.6 660.2 L657.3 657.5 L658.0 650.0 L658.7 642.4 L659.4 635.1 L660.1 631.3 L660.8 627.6 L661.5 623.9 L662.2 620.1 L662.9 616.4 L663.6 612.6 L664.3 622.4 L665.0 634.4 L665.7 646.4 L666.4 656.3 L667.1 663.3 L667.8 670.4 L668.5 677.4 L669.2 680.5 L669.2 681.7Z" fill="#a352cc" fill-opacity="1" stroke="none"/>
<path d="M90.3 681.7 L90.3 591.3 L91.0 598.4 L91.7 605.5 L92.4 606.9 L93.1 606.6 L93.8 606.3 L94.5 606.0 L95.2 604.3 L95.9 601.7 L96.6 599.2 L97.3 596.6 L98.0 594.1 L98.7 591.5 L99.4 591.0 L100.1 592.9 L100.8 594.8 L101.5 596.7 L102.2 599.9 L102.9 606.0 L103.6 612.1 L104.3 618.1 L105.0 623.5 L105.7 628.7 L106.4 634.0 L107.1 638.4 L107.8 641.7 L108.5 645.0 L109.2 647.1 L109.9 648.6 L110.6 650.1 L111.3 651.6 L112.0 647.3 L112.7 637.8 L113.4 629.9 L114.1 628.4 L114.8 627.1 L115.5 626.2 L116.2 625.3 L116.9 621.8 L117.6 609.6 L118.3 597.4 L119.0 585.3 L119.7 582.9 L120.4 589.9 L121.1 596.9 L121.8 600.5 L122.5 602.9 L123.2 605.4 L123.9 607.8 L124.6 611.4 L125.3 615.7 L126.0 620.0 L126.7 620.5 L127.4 616.6 L128.1 612.6 L128.8 608.7 L129.5 607.0 L130.2 606.1 L130.9 605.2 L131.6 604.3 L132.3 603.4 L133.0 602.4 L133.7 601.5 L134.4 602.2 L135.1 603.2 L135.8 604.2 L136.5 604.9 L137.2 605.3 L137.9 605.6 L138.6 605.9 L139.3 611.5 L140.0 617.2 L140.7 623.0 L141.4 624.7 L142.1 622.7 L142.8 620.8 L143.5 618.8 L144.2 617.5 L144.9 616.2 L145.6 614.8 L146.3 613.5 L147.0 612.1 L147.7 610.8 L148.4 609.4 L149.1 613.0 L149.8 621.7 L150.5 630.3 L151.2 633.0 L151.9 633.7 L152.6 634.7 L153.3 636.6 L154.0 638.6 L154.7 640.5 L155.4 642.4 L156.1 642.5 L156.8 642.3 L157.5 642.2 L158.2 643.5 L158.9 645.1 L159.6 646.7 L160.3 648.3 L161.0 648.9 L161.7 647.0 L162.4 645.0 L163.1 643.1 L163.8 641.1 L164.5 639.2 L165.2 637.2 L165.9 635.2 L166.6 633.3 L167.3 631.3 L168.0 629.4 L168.7 627.4 L169.4 625.5 L170.1 623.5 L170.8 621.6 L171.5 623.4 L172.2 626.2 L172.9 629.0 L173.6 631.7 L174.3 634.5 L175.0 637.3 L175.7 640.0 L176.4 642.8 L177.1 645.6 L177.8 648.3 L178.5 651.1 L179.2 653.9 L179.9 656.6 L180.6 654.8 L181.3 651.3 L182.0 647.7 L182.7 644.1 L183.4 635.4 L184.1 623.1 L184.8 610.8 L185.5 606.6 L186.2 604.0 L186.9 601.5 L187.6 598.9 L188.3 596.7 L189.0 594.8 L189.7 593.0 L190.4 596.9 L191.1 603.7 L191.8 610.5 L192.5 616.3 L193.2 622.0 L193.9 627.8 L194.6 633.5 L195.3 635.7 L196.0 637.0 L196.7 638.2 L197.4 639.4 L198.1 641.0 L198.8 642.8 L199.5 644.6 L200.2 646.0 L200.9 645.7 L201.6 645.4 L202.3 645.0 L203.0 649.2 L203.7 654.8 L204.4 660.4 L205.1 662.2 L205.8 656.0 L206.5 649.9 L207.2 646.5 L207.9 645.4 L208.6 644.2 L209.3 643.0 L210.0 641.9 L210.7 636.4 L211.4 629.4 L212.1 622.4 L212.8 621.1 L213.5 619.9 L214.2 618.7 L214.9 617.4 L215.6 612.5 L216.3 606.9 L217.0 601.3 L217.7 599.3 L218.4 602.5 L219.1 605.6 L219.8 608.8 L220.5 614.2 L221.2 625.7 L221.9 635.1 L222.6 636.9 L223.3 638.7 L224.0 640.4 L224.7 642.2 L225.4 642.6 L226.1 641.1 L226.8 639.6 L227.5 638.0 L228.2 636.5 L228.9 635.0 L229.6 636.8 L230.3 639.1 L231.0 641.4 L231.7 643.7 L232.4 646.0 L233.1 648.3 L233.8 650.6 L234.5 649.1 L235.2 647.6 L235.9 646.0 L236.6 644.5 L237.3 643.3 L238.0 643.7 L238.7 644.1 L239.4 642.1 L240.1 636.6 L240.8 631.2 L241.5 625.7 L242.2 621.7 L242.9 621.3 L243.6 621.0 L244.3 620.7 L245.0 614.7 L245.7 607.6 L246.4 600.4 L247.1 593.3 L247.8 590.5 L248.5 589.5 L249.2 588.5 L249.9 581.8 L250.6 575.0 L251.3 568.1 L252.0 568.2 L252.7 575.0 L253.4 581.9 L254.1 588.7 L254.8 592.9 L255.5 597.2 L256.2 601.5 L256.9 608.2 L257.6 616.4 L258.3 624.6 L259.0 630.1 L259.7 622.9 L260.4 615.7 L261.1 608.4 L261.8 607.3 L262.5 608.4 L263.2 609.5 L263.9 610.6 L264.6 612.7 L265.3 615.6 L266.0 618.5 L266.7 623.9 L267.4 629.7 L268.1 635.6 L268.8 641.5 L269.5 647.1 L270.2 642.4 L270.9 637.7 L271.6 633.0 L272.3 628.3 L273.0 623.7 L273.7 619.0 L274.4 614.3 L275.1 609.6 L275.8 604.9 L276.5 603.2 L277.2 606.5 L277.9 609.8 L278.6 613.1 L279.3 616.4 L280.0 619.6 L280.7 622.9 L281.4 627.6 L282.1 633.8 L282.8 639.9 L283.5 635.1 L284.2 626.4 L284.9 621.0 L285.6 617.4 L286.3 613.7 L287.0 610.0 L287.7 606.4 L288.4 604.8 L289.1 604.8 L289.8 604.8 L290.5 604.8 L291.2 608.7 L291.9 617.5 L292.6 626.3 L293.3 630.1 L294.0 631.5 L294.7 632.9 L295.4 634.3 L296.1 635.7 L296.8 635.7 L297.5 635.5 L298.2 635.4 L298.9 636.4 L299.6 637.4 L300.3 638.3 L301.0 639.3 L301.7 634.7 L302.4 629.9 L303.1 625.1 L303.8 622.4 L304.5 621.4 L305.2 620.4 L305.9 618.0 L306.6 600.1 L307.3 582.2 L308.0 564.3 L308.7 554.9 L309.4 550.2 L310.1 545.6 L310.8 544.4 L311.5 545.5 L312.2 546.6 L312.9 548.1 L313.6 563.1 L314.3 578.0 L315.0 592.9 L315.7 600.3 L316.4 607.7 L317.1 615.1 L317.8 622.5 L318.5 619.2 L319.2 614.3 L319.9 610.5 L320.6 615.7 L321.3 620.9 L322.0 626.1 L322.7 631.3 L323.4 624.6 L324.1 617.7 L324.8 610.8 L325.5 607.4 L326.2 607.0 L326.9 606.6 L327.6 606.2 L328.3 603.1 L329.0 596.2 L329.7 589.2 L330.4 584.3 L331.1 585.9 L331.8 587.6 L332.5 589.2 L333.2 590.9 L333.9 592.6 L334.6 594.2 L335.3 597.7 L336.0 601.8 L336.7 605.9 L337.4 608.5 L338.1 607.9 L338.8 607.2 L339.5 606.5 L340.2 607.0 L340.9 613.0 L341.6 618.9 L342.3 622.3 L343.0 622.3 L343.7 622.3 L344.4 622.3 L345.1 623.9 L345.8 629.2 L346.5 634.6 L347.2 637.5 L347.9 638.3 L348.6 639.1 L349.3 639.9 L350.0 641.4 L350.7 643.7 L351.4 646.0 L352.1 648.3 L352.8 647.5 L353.5 646.6 L354.2 645.7 L354.9 644.8 L355.6 643.9 L356.3 643.0 L357.0 642.2 L357.7 642.9 L358.4 643.5 L359.1 644.2 L359.8 644.9 L360.5 646.8 L361.2 648.8 L361.9 650.7 L362.6 651.2 L363.3 650.0 L364.0 648.9 L364.7 647.7 L365.4 646.6 L366.1 645.4 L366.8 644.3 L367.5 644.0 L368.2 644.3 L368.9 644.7 L369.6 645.0 L370.3 645.3 L371.0 645.7 L371.7 646.0 L372.4 644.8 L373.1 643.1 L373.8 641.4 L374.5 639.7 L375.2 637.9 L375.9 636.2 L376.6 634.5 L377.3 635.7 L378.0 637.5 L378.7 639.3 L379.4 639.8 L380.1 638.1 L380.8 636.5 L381.5 634.9 L382.2 632.0 L382.9 625.8 L383.6 619.6 L384.3 613.3 L385.0 605.5 L385.7 597.3 L386.4 589.6 L387.1 591.1 L387.8 592.5 L388.5 595.1 L389.2 598.2 L389.9 601.2 L390.6 604.3 L391.3 607.3 L392.0 613.0 L392.7 619.0 L393.4 625.0 L394.1 631.1 L394.8 629.5 L395.5 625.6 L396.2 621.8 L396.9 624.0 L397.6 626.2 L398.3 628.3 L399.0 630.5 L399.7 628.8 L400.4 626.6 L401.1 623.5 L401.8 614.5 L402.5 605.5 L403.2 596.5 L403.9 587.4 L404.6 586.3 L405.3 585.3 L406.0 584.3 L406.7 582.6 L407.4 580.3 L408.1 578.0 L408.8 577.4 L409.5 592.5 L410.2 607.6 L410.9 622.7 L411.6 623.0 L412.3 615.4 L413.0 607.8 L413.7 600.1 L414.4 603.0 L415.1 608.6 L415.8 614.2 L416.5 616.8 L417.2 618.4 L417.9 620.1 L418.6 621.9 L419.3 624.3 L420.0 626.6 L420.7 628.9 L421.4 630.5 L422.1 628.6 L422.8 626.8 L423.5 625.7 L424.2 625.5 L424.9 625.4 L425.6 625.3 L426.3 626.6 L427.0 631.6 L427.7 636.5 L428.4 639.8 L429.1 641.6 L429.8 643.5 L430.5 645.4 L431.2 647.3 L431.9 649.2 L432.6 651.1 L433.3 650.2 L434.0 647.8 L434.7 645.4 L435.4 643.0 L436.1 640.6 L436.8 638.2 L437.5 635.8 L438.2 633.5 L438.9 631.9 L439.6 630.2 L440.3 628.6 L441.0 626.9 L441.7 629.0 L442.4 631.2 L443.1 633.4 L443.8 635.6 L444.5 637.9 L445.2 640.1 L445.9 642.3 L446.6 644.6 L447.3 646.8 L448.0 647.7 L448.7 645.4 L449.4 643.2 L450.1 640.9 L450.8 638.7 L451.5 636.4 L452.2 634.2 L452.9 632.0 L453.6 629.7 L454.3 627.5 L455.0 625.2 L455.7 627.2 L456.4 629.2 L457.1 631.3 L457.8 633.3 L458.5 638.9 L459.2 645.1 L459.9 651.3 L460.6 654.3 L461.3 652.3 L462.0 650.2 L462.7 648.2 L463.4 645.1 L464.1 639.4 L464.8 633.6 L465.5 631.0 L466.2 631.2 L466.9 631.5 L467.6 631.8 L468.3 633.6 L469.0 637.9 L469.7 642.2 L470.4 644.1 L471.1 644.5 L471.8 644.9 L472.5 644.0 L473.2 642.9 L473.9 641.8 L474.6 640.7 L475.3 637.2 L476.0 632.8 L476.7 628.3 L477.4 625.5 L478.1 626.8 L478.8 628.2 L479.5 629.5 L480.2 629.1 L480.9 628.5 L481.6 627.8 L482.3 628.5 L483.0 631.2 L483.7 634.0 L484.4 636.7 L485.1 636.8 L485.8 629.6 L486.5 622.5 L487.2 618.1 L487.9 616.4 L488.6 615.6 L489.3 615.0 L490.0 613.8 L490.7 607.4 L491.4 601.1 L492.1 595.7 L492.8 603.0 L493.5 610.2 L494.2 617.5 L494.9 619.0 L495.6 614.6 L496.3 610.2 L497.0 605.8 L497.7 607.0 L498.4 609.8 L499.1 612.6 L499.8 615.5 L500.5 618.3 L501.2 621.1 L501.9 623.1 L502.6 624.4 L503.3 625.7 L504.0 626.9 L504.7 627.6 L505.4 628.3 L506.1 629.0 L506.8 629.7 L507.5 631.6 L508.2 633.6 L508.9 635.6 L509.6 636.8 L510.3 637.4 L511.0 638.0 L511.7 638.5 L512.4 639.1 L513.1 639.1 L513.8 638.8 L514.5 638.5 L515.2 638.1 L515.9 637.8 L516.6 638.1 L517.3 640.2 L518.0 642.3 L518.7 644.5 L519.4 646.6 L520.1 648.7 L520.8 650.9 L521.5 652.1 L522.2 651.4 L522.9 650.7 L523.6 650.0 L524.3 649.5 L525.0 649.6 L525.7 649.7 L526.4 649.8 L527.1 649.9 L527.8 650.0 L528.5 652.1 L529.2 655.1 L529.9 651.8 L530.6 644.7 L531.3 641.2 L532.0 640.5 L532.7 639.8 L533.4 639.1 L534.1 636.6 L534.8 631.5 L535.5 626.4 L536.2 621.3 L536.9 624.7 L537.6 628.3 L538.3 632.0 L539.0 629.1 L539.7 620.7 L540.4 612.3 L541.1 603.8 L541.8 595.4 L542.5 587.4 L543.2 579.6 L543.9 571.8 L544.6 570.6 L545.3 569.7 L546.0 570.8 L546.7 574.2 L547.4 578.0 L548.1 585.0 L548.8 592.0 L549.5 601.6 L550.2 615.6 L550.9 629.5 L551.6 633.7 L552.3 632.1 L553.0 630.5 L553.7 630.0 L554.4 629.6 L555.1 629.3 L555.8 629.7 L556.5 631.0 L557.2 632.3 L557.9 633.6 L558.6 633.4 L559.3 633.1 L560.0 632.8 L560.7 632.6 L561.4 628.6 L562.1 624.0 L562.8 619.4 L563.5 616.8 L564.2 617.1 L564.9 617.3 L565.6 617.6 L566.3 618.0 L567.0 618.9 L567.7 619.7 L568.4 622.9 L569.1 628.4 L569.8 633.8 L570.5 639.3 L571.2 640.0 L571.9 633.1 L572.6 626.3 L573.3 619.4 L574.0 617.6 L574.7 616.1 L575.4 614.6 L576.1 613.2 L576.8 611.7 L577.5 610.3 L578.2 615.7 L578.9 623.5 L579.6 631.3 L580.3 634.5 L581.0 637.6 L581.7 640.7 L582.4 643.8 L583.1 646.9 L583.8 650.0 L584.5 652.2 L585.2 645.1 L585.9 637.9 L586.6 630.8 L587.3 623.7 L588.0 622.3 L588.7 611.8 L589.4 601.3 L590.1 590.8 L590.8 580.9 L591.5 571.6 L592.2 562.2 L592.9 555.2 L593.6 566.5 L594.3 577.8 L595.0 589.2 L595.7 598.2 L596.4 606.1 L597.1 614.0 L597.8 622.5 L598.5 633.3 L599.2 644.2 L599.9 655.0 L600.6 655.6 L601.3 653.2 L602.0 650.9 L602.7 648.5 L603.4 646.2 L604.1 647.7 L604.8 649.3 L605.5 651.5 L606.2 656.0 L606.9 660.5 L607.6 662.4 L608.3 661.0 L609.0 659.6 L609.7 658.2 L610.4 656.8 L611.1 656.1 L611.8 655.7 L612.5 655.4 L613.2 655.2 L613.9 655.9 L614.6 656.6 L615.3 657.2 L616.0 659.1 L616.7 661.3 L617.4 663.6 L618.1 661.5 L618.8 659.4 L619.5 657.2 L620.2 654.8 L620.9 652.0 L621.6 649.2 L622.3 646.5 L623.0 645.4 L623.7 644.4 L624.4 643.3 L625.1 642.2 L625.8 641.8 L626.5 641.5 L627.2 641.1 L627.9 640.0 L628.6 638.0 L629.3 636.0 L630.0 634.3 L630.7 635.1 L631.4 635.9 L632.1 636.2 L632.8 635.4 L633.5 634.6 L634.2 635.2 L634.9 637.0 L635.6 638.7 L636.3 640.5 L637.0 642.2 L637.7 641.6 L638.4 640.2 L639.1 638.7 L639.8 639.4 L640.5 640.0 L641.2 640.7 L641.9 641.6 L642.6 642.7 L643.3 643.8 L644.0 644.9 L644.7 645.8 L645.4 646.3 L646.1 646.9 L646.8 647.5 L647.5 648.1 L648.2 648.0 L648.9 647.4 L649.6 646.7 L650.3 646.1 L651.0 645.5 L651.7 645.1 L652.4 647.4 L653.1 649.6 L653.8 651.8 L654.5 654.1 L655.2 656.3 L655.9 658.6 L656.6 660.8 L657.3 658.1 L658.0 650.6 L658.7 643.0 L659.4 635.7 L660.1 631.9 L660.8 628.2 L661.5 624.5 L662.2 620.7 L662.9 617.0 L663.6 613.2 L664.3 623.0 L665.0 635.0 L665.7 647.0 L666.4 656.9 L667.1 663.9 L667.8 671.0 L668.5 678.0 L669.2 681.1 L669.2 681.7Z" fill="#3274d9" fill-opacity="1" stroke="none"/>
<path d="M90.3 681.7 L90.3 591.8 L91.0 598.9 L91.7 606.0 L92.4 607.4 L93.1 607.1 L93.8 606.8 L94.5 606.9 L95.2 605.5 L95.9 603.3 L96.6 601.0 L97.3 598.8 L98.0 596.6 L98.7 594.4 L99.4 594.1 L100.1 596.2 L100.8 598.3 L101.5 600.4 L102.2 603.7 L102.9 609.6 L103.6 615.3 L104.3 620.9 L105.0 625.9 L105.7 630.8 L106.4 635.7 L107.1 639.8 L107.8 642.7 L108.5 645.6 L109.2 647.6 L109.9 649.1 L110.6 650.6 L111.3 652.1 L112.0 647.8 L112.7 638.3 L113.4 630.4 L114.1 628.9 L114.8 627.6 L115.5 626.7 L116.2 625.8 L116.9 622.3 L117.6 610.1 L118.3 597.9 L119.0 585.8 L119.7 583.5 L120.4 590.5 L121.1 597.5 L121.8 601.1 L122.5 603.6 L123.2 606.1 L123.9 608.6 L124.6 612.3 L125.3 616.7 L126.0 621.1 L126.7 621.8 L127.4 618.1 L128.1 614.4 L128.8 610.8 L129.5 609.4 L130.2 608.9 L130.9 608.9 L131.6 609.1 L132.3 609.3 L133.0 609.6 L133.7 609.4 L134.4 610.6 L135.1 612.0 L135.8 613.1 L136.5 613.9 L137.2 614.3 L137.9 614.6 L138.6 614.8 L139.3 619.5 L140.0 624.3 L140.7 629.4 L141.4 631.6 L142.1 630.1 L142.8 628.7 L143.5 627.3 L144.2 626.6 L144.9 626.1 L145.6 624.5 L146.3 622.4 L147.0 621.7 L147.7 621.1 L148.4 620.5 L149.1 623.5 L149.8 630.7 L150.5 637.6 L151.2 639.2 L151.9 639.0 L152.6 638.9 L153.3 639.8 L154.0 640.8 L154.7 642.0 L155.4 643.5 L156.1 643.4 L156.8 643.0 L157.5 642.7 L158.2 644.0 L158.9 645.6 L159.6 647.2 L160.3 648.8 L161.0 649.4 L161.7 647.5 L162.4 645.5 L163.1 643.6 L163.8 641.6 L164.5 639.7 L165.2 637.7 L165.9 635.7 L166.6 633.8 L167.3 631.8 L168.0 629.9 L168.7 627.9 L169.4 626.0 L170.1 624.0 L170.8 622.1 L171.5 623.9 L172.2 626.7 L172.9 629.5 L173.6 632.2 L174.3 635.0 L175.0 637.8 L175.7 640.5 L176.4 643.3 L177.1 646.1 L177.8 648.8 L178.5 651.6 L179.2 654.4 L179.9 657.1 L180.6 655.3 L181.3 651.8 L182.0 648.2 L182.7 644.6 L183.4 635.9 L184.1 623.6 L184.8 611.3 L185.5 607.1 L186.2 604.5 L186.9 602.0 L187.6 599.4 L188.3 597.2 L189.0 595.3 L189.7 593.5 L190.4 597.4 L191.1 604.2 L191.8 611.0 L192.5 616.8 L193.2 622.5 L193.9 628.3 L194.6 634.0 L195.3 636.2 L196.0 637.5 L196.7 638.7 L197.4 639.9 L198.1 641.5 L198.8 643.3 L199.5 645.1 L200.2 646.5 L200.9 646.2 L201.6 645.9 L202.3 645.5 L203.0 649.7 L203.7 655.3 L204.4 660.9 L205.1 662.7 L205.8 656.5 L206.5 650.4 L207.2 647.0 L207.9 645.9 L208.6 644.7 L209.3 643.5 L210.0 642.4 L210.7 636.9 L211.4 629.9 L212.1 622.9 L212.8 621.6 L213.5 620.4 L214.2 619.2 L214.9 617.9 L215.6 613.0 L216.3 607.4 L217.0 601.8 L217.7 599.8 L218.4 603.0 L219.1 606.1 L219.8 609.3 L220.5 614.7 L221.2 626.2 L221.9 635.6 L222.6 637.4 L223.3 639.2 L224.0 640.9 L224.7 642.7 L225.4 643.1 L226.1 641.6 L226.8 640.1 L227.5 638.5 L228.2 637.0 L228.9 635.5 L229.6 637.3 L230.3 639.6 L231.0 641.9 L231.7 644.2 L232.4 646.5 L233.1 648.8 L233.8 651.1 L234.5 649.6 L235.2 648.1 L235.9 646.5 L236.6 645.0 L237.3 643.9 L238.0 645.1 L238.7 646.2 L239.4 644.9 L240.1 640.2 L240.8 635.3 L241.5 630.2 L242.2 626.5 L242.9 626.5 L243.6 626.4 L244.3 625.8 L245.0 619.6 L245.7 612.2 L246.4 604.8 L247.1 596.5 L247.8 592.6 L248.5 590.4 L249.2 589.0 L249.9 582.3 L250.6 575.5 L251.3 568.6 L252.0 568.7 L252.7 575.5 L253.4 582.4 L254.1 589.2 L254.8 593.4 L255.5 597.7 L256.2 602.0 L256.9 608.7 L257.6 616.9 L258.3 625.1 L259.0 630.6 L259.7 623.4 L260.4 616.2 L261.1 608.9 L261.8 607.8 L262.5 608.9 L263.2 610.0 L263.9 611.1 L264.6 613.2 L265.3 616.1 L266.0 619.0 L266.7 624.4 L267.4 630.2 L268.1 636.1 L268.8 642.0 L269.5 647.6 L270.2 642.9 L270.9 638.2 L271.6 633.5 L272.3 628.8 L273.0 624.2 L273.7 619.5 L274.4 614.8 L275.1 610.1 L275.8 605.4 L276.5 603.7 L277.2 607.0 L277.9 610.3 L278.6 613.6 L279.3 616.9 L280.0 620.1 L280.7 623.4 L281.4 628.1 L282.1 634.3 L282.8 640.4 L283.5 635.6 L284.2 626.9 L284.9 621.5 L285.6 617.9 L286.3 614.2 L287.0 610.5 L287.7 606.9 L288.4 605.3 L289.1 605.3 L289.8 605.3 L290.5 605.3 L291.2 609.2 L291.9 618.0 L292.6 626.8 L293.3 630.6 L294.0 632.0 L294.7 633.4 L295.4 634.8 L296.1 636.2 L296.8 636.2 L297.5 636.0 L298.2 635.9 L298.9 636.9 L299.6 637.9 L300.3 638.8 L301.0 639.8 L301.7 635.2 L302.4 630.4 L303.1 625.6 L303.8 622.9 L304.5 621.9 L305.2 620.9 L305.9 618.5 L306.6 600.6 L307.3 582.7 L308.0 564.9 L308.7 555.9 L309.4 551.7 L310.1 547.5 L310.8 546.5 L311.5 547.6 L312.2 548.7 L312.9 550.2 L313.6 565.1 L314.3 579.9 L315.0 594.5 L315.7 601.5 L316.4 608.5 L317.1 615.6 L317.8 623.0 L318.5 619.7 L319.2 614.8 L319.9 611.0 L320.6 616.2 L321.3 621.4 L322.0 626.6 L322.7 631.8 L323.4 625.1 L324.1 618.2 L324.8 611.3 L325.5 607.9 L326.2 607.5 L326.9 607.1 L327.6 606.7 L328.3 603.6 L329.0 596.7 L329.7 589.9 L330.4 585.5 L331.1 587.8 L331.8 590.0 L332.5 592.3 L333.2 593.6 L333.9 594.9 L334.6 596.5 L335.3 600.0 L336.0 603.8 L336.7 607.5 L337.4 610.2 L338.1 610.3 L338.8 610.3 L339.5 610.2 L340.2 611.3 L340.9 617.6 L341.6 623.9 L342.3 627.6 L343.0 628.2 L343.7 628.9 L344.4 629.5 L345.1 629.1 L345.8 632.3 L346.5 637.5 L347.2 640.5 L347.9 641.5 L348.6 642.4 L349.3 643.3 L350.0 644.7 L350.7 646.6 L351.4 648.0 L352.1 649.4 L352.8 648.0 L353.5 647.1 L354.2 646.2 L354.9 645.3 L355.6 644.4 L356.3 643.5 L357.0 642.7 L357.7 643.4 L358.4 644.0 L359.1 644.7 L359.8 645.4 L360.5 647.3 L361.2 649.3 L361.9 651.2 L362.6 651.7 L363.3 650.5 L364.0 649.4 L364.7 648.2 L365.4 647.1 L366.1 645.9 L366.8 644.8 L367.5 644.5 L368.2 644.8 L368.9 645.2 L369.6 645.5 L370.3 645.8 L371.0 646.2 L371.7 646.5 L372.4 645.3 L373.1 643.6 L373.8 641.9 L374.5 640.2 L375.2 638.4 L375.9 636.7 L376.6 635.0 L377.3 636.2 L378.0 638.0 L378.7 639.8 L379.4 640.3 L380.1 638.6 L380.8 637.0 L381.5 635.4 L382.2 632.5 L382.9 626.3 L383.6 620.1 L384.3 613.8 L385.0 606.0 L385.7 597.8 L386.4 590.1 L387.1 591.6 L387.8 593.0 L388.5 595.6 L389.2 598.7 L389.9 601.7 L390.6 604.8 L391.3 607.8 L392.0 613.5 L392.7 619.5 L393.4 625.5 L394.1 631.6 L394.8 630.0 L395.5 626.3 L396.2 622.9 L396.9 625.6 L397.6 628.2 L398.3 631.0 L399.0 633.9 L399.7 632.9 L400.4 631.3 L401.1 628.8 L401.8 620.0 L402.5 611.1 L403.2 602.3 L403.9 593.5 L404.6 592.8 L405.3 592.4 L406.0 591.8 L406.7 590.1 L407.4 587.8 L408.1 585.6 L408.8 585.0 L409.5 600.1 L410.2 615.2 L410.9 630.5 L411.6 631.1 L412.3 623.8 L413.0 616.5 L413.7 609.3 L414.4 612.5 L415.1 618.1 L415.8 623.7 L416.5 626.2 L417.2 627.5 L417.9 628.8 L418.6 630.2 L419.3 632.2 L420.0 634.1 L420.7 636.2 L421.4 637.4 L422.1 635.3 L422.8 633.2 L423.5 632.4 L424.2 632.5 L424.9 632.6 L425.6 632.7 L426.3 634.2 L427.0 638.8 L427.7 643.4 L428.4 646.4 L429.1 647.8 L429.8 649.0 L430.5 650.3 L431.2 651.6 L431.9 652.8 L432.6 654.1 L433.3 652.5 L434.0 649.5 L434.7 646.4 L435.4 643.5 L436.1 641.8 L436.8 640.7 L437.5 639.6 L438.2 637.6 L438.9 636.0 L439.6 634.4 L440.3 632.9 L441.0 631.3 L441.7 633.4 L442.4 635.5 L443.1 636.5 L443.8 637.3 L444.5 638.4 L445.2 640.8 L445.9 643.0 L446.6 645.3 L447.3 647.5 L448.0 648.6 L448.7 648.4 L449.4 648.3 L450.1 646.8 L450.8 644.3 L451.5 641.8 L452.2 639.3 L452.9 637.0 L453.6 634.9 L454.3 632.6 L455.0 630.2 L455.7 630.9 L456.4 631.8 L457.1 632.8 L457.8 634.3 L458.5 639.8 L459.2 645.7 L459.9 651.8 L460.6 654.8 L461.3 652.8 L462.0 650.7 L462.7 648.7 L463.4 645.6 L464.1 639.9 L464.8 634.1 L465.5 631.5 L466.2 631.7 L466.9 632.0 L467.6 632.3 L468.3 634.1 L469.0 638.4 L469.7 642.7 L470.4 644.6 L471.1 645.0 L471.8 645.4 L472.5 644.5 L473.2 643.4 L473.9 642.3 L474.6 641.2 L475.3 637.7 L476.0 633.3 L476.7 628.8 L477.4 626.0 L478.1 627.3 L478.8 628.7 L479.5 630.0 L480.2 629.6 L480.9 629.0 L481.6 628.3 L482.3 629.0 L483.0 631.7 L483.7 634.5 L484.4 637.2 L485.1 637.3 L485.8 630.1 L486.5 623.0 L487.2 618.6 L487.9 616.9 L488.6 616.1 L489.3 615.5 L490.0 614.3 L490.7 607.9 L491.4 601.6 L492.1 596.2 L492.8 603.5 L493.5 610.7 L494.2 618.0 L494.9 619.5 L495.6 615.1 L496.3 610.7 L497.0 606.3 L497.7 607.5 L498.4 610.3 L499.1 613.1 L499.8 616.0 L500.5 618.8 L501.2 621.6 L501.9 623.6 L502.6 624.9 L503.3 626.2 L504.0 627.4 L504.7 628.1 L505.4 628.8 L506.1 629.5 L506.8 630.2 L507.5 632.1 L508.2 634.1 L508.9 636.1 L509.6 637.3 L510.3 637.9 L511.0 638.5 L511.7 639.0 L512.4 639.6 L513.1 639.6 L513.8 639.3 L514.5 639.0 L515.2 638.6 L515.9 638.3 L516.6 638.6 L517.3 640.7 L518.0 642.8 L518.7 645.0 L519.4 647.1 L520.1 649.2 L520.8 651.4 L521.5 652.6 L522.2 651.9 L522.9 651.2 L523.6 650.5 L524.3 650.0 L525.0 650.1 L525.7 650.2 L526.4 650.3 L527.1 650.4 L527.8 650.5 L528.5 652.6 L529.2 655.6 L529.9 652.3 L530.6 645.2 L531.3 641.7 L532.0 641.0 L532.7 640.3 L533.4 639.6 L534.1 638.1 L534.8 635.6 L535.5 633.0 L536.2 628.7 L536.9 632.2 L537.6 635.8 L538.3 639.4 L539.0 636.6 L539.7 628.1 L540.4 619.7 L541.1 611.1 L541.8 600.6 L542.5 590.6 L543.2 580.8 L543.9 572.3 L544.6 571.1 L545.3 570.2 L546.0 571.3 L546.7 574.7 L547.4 578.5 L548.1 585.5 L548.8 592.5 L549.5 602.1 L550.2 616.1 L550.9 630.0 L551.6 634.2 L552.3 632.6 L553.0 631.2 L553.7 631.2 L554.4 631.4 L555.1 631.6 L555.8 632.3 L556.5 633.8 L557.2 635.2 L557.9 636.7 L558.6 636.4 L559.3 636.2 L560.0 635.9 L560.7 635.2 L561.4 630.5 L562.1 625.2 L562.8 619.9 L563.5 617.3 L564.2 617.6 L564.9 617.8 L565.6 618.1 L566.3 618.5 L567.0 619.4 L567.7 620.2 L568.4 623.4 L569.1 628.9 L569.8 634.3 L570.5 639.8 L571.2 640.5 L571.9 633.6 L572.6 626.8 L573.3 619.9 L574.0 618.1 L574.7 616.6 L575.4 615.1 L576.1 613.7 L576.8 612.2 L577.5 610.8 L578.2 616.2 L578.9 624.0 L579.6 631.8 L580.3 635.0 L581.0 638.1 L581.7 641.2 L582.4 644.3 L583.1 647.4 L583.8 650.5 L584.5 652.7 L585.2 645.6 L585.9 638.4 L586.6 631.3 L587.3 624.2 L588.0 622.8 L588.7 612.3 L589.4 601.8 L590.1 591.3 L590.8 581.4 L591.5 572.1 L592.2 562.7 L592.9 555.7 L593.6 567.0 L594.3 578.3 L595.0 589.7 L595.7 598.7 L596.4 606.6 L597.1 614.5 L597.8 623.0 L598.5 633.8 L599.2 644.7 L599.9 655.5 L600.6 656.1 L601.3 653.7 L602.0 651.4 L602.7 649.0 L603.4 646.7 L604.1 648.2 L604.8 649.8 L605.5 652.0 L606.2 656.5 L606.9 661.0 L607.6 662.9 L608.3 661.5 L609.0 660.1 L609.7 658.7 L610.4 657.3 L611.1 656.6 L611.8 656.2 L612.5 655.9 L613.2 655.7 L613.9 656.4 L614.6 657.1 L615.3 657.7 L616.0 659.6 L616.7 661.8 L617.4 664.1 L618.1 662.0 L618.8 659.9 L619.5 657.7 L620.2 655.3 L620.9 652.5 L621.6 649.7 L622.3 647.0 L623.0 645.9 L623.7 644.9 L624.4 643.8 L625.1 642.7 L625.8 642.3 L626.5 642.0 L627.2 641.6 L627.9 640.5 L628.6 638.5 L629.3 636.5 L630.0 634.8 L630.7 635.6 L631.4 636.4 L632.1 637.4 L632.8 638.7 L633.5 640.1 L634.2 641.7 L634.9 643.5 L635.6 645.3 L636.3 647.1 L637.0 648.9 L637.7 648.4 L638.4 646.9 L639.1 644.1 L639.8 643.0 L640.5 641.9 L641.2 641.2 L641.9 642.1 L642.6 643.2 L643.3 644.3 L644.0 645.4 L644.7 646.3 L645.4 646.8 L646.1 647.4 L646.8 648.0 L647.5 648.6 L648.2 648.5 L648.9 647.9 L649.6 647.2 L650.3 646.6 L651.0 646.0 L651.7 645.6 L652.4 647.9 L653.1 650.1 L653.8 652.3 L654.5 654.6 L655.2 656.8 L655.9 659.1 L656.6 661.3 L657.3 658.6 L658.0 651.1 L658.7 643.5 L659.4 637.4 L660.1 635.2 L660.8 633.0 L661.5 630.5 L662.2 627.1 L662.9 623.7 L663.6 620.3 L664.3 630.4 L665.0 642.3 L665.7 653.7 L666.4 663.1 L667.1 668.5 L667.8 673.5 L668.5 678.6 L669.2 681.6 L669.2 681.7Z" fill="#e02f44" fill-opacity="1" stroke="none"/>
<path d="M90.3 681.7 L90.3 604.6 L91.0 610.3 L91.7 616.0 L92.4 616.5 L93.1 615.5 L93.8 614.6 L94.5 613.8 L95.2 612.4 L95.9 610.8 L96.6 609.1 L97.3 607.4 L98.0 605.7 L98.7 604.6 L99.4 607.5 L100.1 610.5 L100.8 615.5 L101.5 620.5 L102.2 625.5 L102.9 630.6 L103.6 635.8 L104.3 641.0 L105.0 646.2 L105.7 651.4 L106.4 654.6 L107.1 655.8 L107.8 654.8 L108.5 653.8 L109.2 652.9 L109.9 654.3 L110.6 655.8 L111.3 657.3 L112.0 652.9 L112.7 643.5 L113.4 635.6 L114.1 634.3 L114.8 632.9 L115.5 631.5 L116.2 630.2 L116.9 626.1 L117.6 613.1 L118.3 600.1 L119.0 587.1 L119.7 590.5 L120.4 595.2 L121.1 599.9 L121.8 602.9 L122.5 605.5 L123.2 608.0 L123.9 610.6 L124.6 615.4 L125.3 621.6 L126.0 627.8 L126.7 629.7 L127.4 626.7 L128.1 623.7 L128.8 620.8 L129.5 619.7 L130.2 619.2 L130.9 619.1 L131.6 619.1 L132.3 619.2 L133.0 619.2 L133.7 619.1 L134.4 619.0 L135.1 620.2 L135.8 621.1 L136.5 622.0 L137.2 622.7 L137.9 623.2 L138.6 623.6 L139.3 628.4 L140.0 633.2 L140.7 638.0 L141.4 639.8 L142.1 638.3 L142.8 636.9 L143.5 635.6 L144.2 636.3 L144.9 637.2 L145.6 637.9 L146.3 637.3 L147.0 637.0 L147.7 636.8 L148.4 636.7 L149.1 639.5 L149.8 645.3 L150.5 650.4 L151.2 648.8 L151.9 644.7 L152.6 641.4 L153.3 641.5 L154.0 641.8 L154.7 642.4 L155.4 643.8 L156.1 643.7 L156.8 643.3 L157.5 643.0 L158.2 644.3 L158.9 645.9 L159.6 647.5 L160.3 649.1 L161.0 649.7 L161.7 647.8 L162.4 645.8 L163.1 643.9 L163.8 641.9 L164.5 640.0 L165.2 638.0 L165.9 636.0 L166.6 634.1 L167.3 632.1 L168.0 630.2 L168.7 628.2 L169.4 626.3 L170.1 624.3 L170.8 622.4 L171.5 624.2 L172.2 627.0 L172.9 629.8 L173.6 632.5 L174.3 635.3 L175.0 638.1 L175.7 640.8 L176.4 643.6 L177.1 646.4 L177.8 649.1 L178.5 651.9 L179.2 654.7 L179.9 657.4 L180.6 655.6 L181.3 652.1 L182.0 648.5 L182.7 644.9 L183.4 636.2 L184.1 623.9 L184.8 611.6 L185.5 607.4 L186.2 604.8 L186.9 602.3 L187.6 599.7 L188.3 597.5 L189.0 596.0 L189.7 595.0 L190.4 598.9 L191.1 605.3 L191.8 611.6 L192.5 617.4 L193.2 623.2 L193.9 628.9 L194.6 634.7 L195.3 637.3 L196.0 639.1 L196.7 640.9 L197.4 642.7 L198.1 644.5 L198.8 646.3 L199.5 648.1 L200.2 649.5 L200.9 649.7 L201.6 649.8 L202.3 650.0 L203.0 653.2 L203.7 657.3 L204.4 661.4 L205.1 663.0 L205.8 656.8 L206.5 650.8 L207.2 647.7 L207.9 646.5 L208.6 645.3 L209.3 644.2 L210.0 643.0 L210.7 638.3 L211.4 632.3 L212.1 626.4 L212.8 625.9 L213.5 625.5 L214.2 625.1 L214.9 624.7 L215.6 623.7 L216.3 622.7 L217.0 622.0 L217.7 624.3 L218.4 626.7 L219.1 629.0 L219.8 631.3 L220.5 638.8 L221.2 646.6 L221.9 654.3 L222.6 656.8 L223.3 654.5 L224.0 652.2 L224.7 649.9 L225.4 647.6 L226.1 645.3 L226.8 643.0 L227.5 640.7 L228.2 638.5 L228.9 636.2 L229.6 637.9 L230.3 640.1 L231.0 642.3 L231.7 644.5 L232.4 646.8 L233.1 649.1 L233.8 651.4 L234.5 649.9 L235.2 648.4 L235.9 646.8 L236.6 645.3 L237.3 644.2 L238.0 645.4 L238.7 646.5 L239.4 645.2 L240.1 640.5 L240.8 635.6 L241.5 630.5 L242.2 626.8 L242.9 626.8 L243.6 626.7 L244.3 626.1 L245.0 624.4 L245.7 624.1 L246.4 623.8 L247.1 627.3 L247.8 637.1 L248.5 647.0 L249.2 651.7 L249.9 653.4 L250.6 655.1 L251.3 656.8 L252.0 658.6 L252.7 660.3 L253.4 662.0 L254.1 663.5 L254.8 661.9 L255.5 660.2 L256.2 658.6 L256.9 657.6 L257.6 657.2 L258.3 656.7 L259.0 655.0 L259.7 647.8 L260.4 640.5 L261.1 633.3 L261.8 632.1 L262.5 633.0 L263.2 634.0 L263.9 635.0 L264.6 634.4 L265.3 632.7 L266.0 634.6 L266.7 639.5 L267.4 644.4 L268.1 649.3 L268.8 654.3 L269.5 659.1 L270.2 659.0 L270.9 658.9 L271.6 658.8 L272.3 658.7 L273.0 658.6 L273.7 657.8 L274.4 656.5 L275.1 655.1 L275.8 653.7 L276.5 653.3 L277.2 654.4 L277.9 655.6 L278.6 656.7 L279.3 657.1 L280.0 657.5 L280.7 657.8 L281.4 659.1 L282.1 661.6 L282.8 662.1 L283.5 651.9 L284.2 641.8 L284.9 631.6 L285.6 627.7 L286.3 624.0 L287.0 620.3 L287.7 616.6 L288.4 615.1 L289.1 615.2 L289.8 615.3 L290.5 615.5 L291.2 621.6 L291.9 635.3 L292.6 649.1 L293.3 654.1 L294.0 655.0 L294.7 655.9 L295.4 656.8 L296.1 657.8 L296.8 658.3 L297.5 656.9 L298.2 655.3 L298.9 651.9 L299.6 648.5 L300.3 645.1 L301.0 641.6 L301.7 642.4 L302.4 643.3 L303.1 644.2 L303.8 645.1 L304.5 646.0 L305.2 646.9 L305.9 646.3 L306.6 628.8 L307.3 611.4 L308.0 597.9 L308.7 592.6 L309.4 587.2 L310.1 581.8 L310.8 581.6 L311.5 582.1 L312.2 582.5 L312.9 582.9 L313.6 587.2 L314.3 592.6 L315.0 598.0 L315.7 608.7 L316.4 619.5 L317.1 630.3 L317.8 641.2 L318.5 638.8 L319.2 634.3 L319.9 630.8 L320.6 635.4 L321.3 640.1 L322.0 644.7 L322.7 649.4 L323.4 641.1 L324.1 632.6 L324.8 624.0 L325.5 619.3 L326.2 618.0 L326.9 616.6 L327.6 615.2 L328.3 613.2 L329.0 610.2 L329.7 607.2 L330.4 605.8 L331.1 608.7 L331.8 611.6 L332.5 614.5 L333.2 617.0 L333.9 619.4 L334.6 622.0 L335.3 621.2 L336.0 619.2 L336.7 617.1 L337.4 615.3 L338.1 613.9 L338.8 612.3 L339.5 610.8 L340.2 611.6 L340.9 617.9 L341.6 624.2 L342.3 628.1 L343.0 628.5 L343.7 629.2 L344.4 629.8 L345.1 629.7 L345.8 634.4 L346.5 640.1 L347.2 643.4 L347.9 644.4 L348.6 645.4 L349.3 646.4 L350.0 648.9 L350.7 653.7 L351.4 658.1 L352.1 662.6 L352.8 661.3 L353.5 660.1 L354.2 658.9 L354.9 657.7 L355.6 656.6 L356.3 655.4 L357.0 654.2 L357.7 653.8 L358.4 654.9 L359.1 656.0 L359.8 657.0 L360.5 658.1 L361.2 659.2 L361.9 660.2 L362.6 659.6 L363.3 657.3 L364.0 655.0 L364.7 652.7 L365.4 650.4 L366.1 648.1 L366.8 645.8 L367.5 645.1 L368.2 645.3 L368.9 645.6 L369.6 645.8 L370.3 646.1 L371.0 646.5 L371.7 646.8 L372.4 645.6 L373.1 643.9 L373.8 642.2 L374.5 640.5 L375.2 638.7 L375.9 637.0 L376.6 635.3 L377.3 636.5 L378.0 638.3 L378.7 640.1 L379.4 640.6 L380.1 638.9 L380.8 637.3 L381.5 635.7 L382.2 632.8 L382.9 626.6 L383.6 620.5 L384.3 614.4 L385.0 606.8 L385.7 598.8 L386.4 591.3 L387.1 592.5 L387.8 593.7 L388.5 596.1 L389.2 599.0 L389.9 602.0 L390.6 605.1 L391.3 608.1 L392.0 613.8 L392.7 619.8 L393.4 625.8 L394.1 631.9 L394.8 630.3 L395.5 626.6 L396.2 623.2 L396.9 625.9 L397.6 628.5 L398.3 631.3 L399.0 634.2 L399.7 633.2 L400.4 631.6 L401.1 629.1 L401.8 620.3 L402.5 611.4 L403.2 602.6 L403.9 593.8 L404.6 593.1 L405.3 592.7 L406.0 592.1 L406.7 590.4 L407.4 588.1 L408.1 585.9 L408.8 585.3 L409.5 600.4 L410.2 615.5 L410.9 630.8 L411.6 631.4 L412.3 624.1 L413.0 616.8 L413.7 609.6 L414.4 612.8 L415.1 618.4 L415.8 624.0 L416.5 626.5 L417.2 627.8 L417.9 629.1 L418.6 630.5 L419.3 632.5 L420.0 634.4 L420.7 636.5 L421.4 637.7 L422.1 635.6 L422.8 633.5 L423.5 632.7 L424.2 632.8 L424.9 632.9 L425.6 633.0 L426.3 634.5 L427.0 639.1 L427.7 643.7 L428.4 646.7 L429.1 648.1 L429.8 649.3 L430.5 650.6 L431.2 651.9 L431.9 653.1 L432.6 654.4 L433.3 652.8 L434.0 649.8 L434.7 646.7 L435.4 643.8 L436.1 642.1 L436.8 641.0 L437.5 639.9 L438.2 637.9 L438.9 636.3 L439.6 634.7 L440.3 633.2 L441.0 631.6 L441.7 633.7 L442.4 635.8 L443.1 636.8 L443.8 637.6 L444.5 638.7 L445.2 641.1 L445.9 643.3 L446.6 645.6 L447.3 647.8 L448.0 648.9 L448.7 648.7 L449.4 648.6 L450.1 647.1 L450.8 644.6 L451.5 642.1 L452.2 639.6 L452.9 637.3 L453.6 635.2 L454.3 632.9 L455.0 630.5 L455.7 631.2 L456.4 632.1 L457.1 633.1 L457.8 634.6 L458.5 640.1 L459.2 646.0 L459.9 652.1 L460.6 655.1 L461.3 653.1 L462.0 651.0 L462.7 649.0 L463.4 645.9 L464.1 640.7 L464.8 636.0 L465.5 634.1 L466.2 634.9 L466.9 635.7 L467.6 636.5 L468.3 638.4 L469.0 642.1 L469.7 645.8 L470.4 649.5 L471.1 653.2 L471.8 656.9 L472.5 655.7 L473.2 653.8 L473.9 651.9 L474.6 650.0 L475.3 646.6 L476.0 642.7 L476.7 638.7 L477.4 635.9 L478.1 635.9 L478.8 635.9 L479.5 635.9 L480.2 634.7 L480.9 633.2 L481.6 631.7 L482.3 632.0 L483.0 634.8 L483.7 637.7 L484.4 640.6 L485.1 640.6 L485.8 632.8 L486.5 625.0 L487.2 620.5 L487.9 619.1 L488.6 618.4 L489.3 617.8 L490.0 616.6 L490.7 610.0 L491.4 603.5 L492.1 598.0 L492.8 605.1 L493.5 612.2 L494.2 619.3 L494.9 621.0 L495.6 617.2 L496.3 613.4 L497.0 609.6 L497.7 610.7 L498.4 613.3 L499.1 615.8 L499.8 618.4 L500.5 620.9 L501.2 623.5 L501.9 625.4 L502.6 626.9 L503.3 628.4 L504.0 629.7 L504.7 630.1 L505.4 630.6 L506.1 631.0 L506.8 631.4 L507.5 633.0 L508.2 634.7 L508.9 636.4 L509.6 637.6 L510.3 638.6 L511.0 639.6 L511.7 640.7 L512.4 641.7 L513.1 642.7 L513.8 643.1 L514.5 643.5 L515.2 643.9 L515.9 644.3 L516.6 644.8 L517.3 645.8 L518.0 647.3 L518.7 648.9 L519.4 650.4 L520.1 652.0 L520.8 653.5 L521.5 654.5 L522.2 654.4 L522.9 654.2 L523.6 654.1 L524.3 654.1 L525.0 654.7 L525.7 655.3 L526.4 655.8 L527.1 656.4 L527.8 657.0 L528.5 657.6 L529.2 656.7 L529.9 652.6 L530.6 648.5 L531.3 644.4 L532.0 643.8 L532.7 643.8 L533.4 643.8 L534.1 641.9 L534.8 637.2 L535.5 633.3 L536.2 629.0 L536.9 632.5 L537.6 636.1 L538.3 639.7 L539.0 636.9 L539.7 628.4 L540.4 620.0 L541.1 611.4 L541.8 600.9 L542.5 590.9 L543.2 582.7 L543.9 575.1 L544.6 574.4 L545.3 573.9 L546.0 575.9 L546.7 580.6 L547.4 585.2 L548.1 589.9 L548.8 594.6 L549.5 603.7 L550.2 620.1 L550.9 636.5 L551.6 642.7 L552.3 642.7 L553.0 642.8 L553.7 643.1 L554.4 643.3 L555.1 644.2 L555.8 645.2 L556.5 646.1 L557.2 647.0 L557.9 647.9 L558.6 648.6 L559.3 648.9 L560.0 649.2 L560.7 649.4 L561.4 650.7 L562.1 652.3 L562.8 654.0 L563.5 655.4 L564.2 656.1 L564.9 656.8 L565.6 657.5 L566.3 657.9 L567.0 657.7 L567.7 657.5 L568.4 657.7 L569.1 658.2 L569.8 658.8 L570.5 659.3 L571.2 657.0 L571.9 650.1 L572.6 643.2 L573.3 636.3 L574.0 632.7 L574.7 629.2 L575.4 625.8 L576.1 623.3 L576.8 621.9 L577.5 620.4 L578.2 624.0 L578.9 629.4 L579.6 634.7 L580.3 637.7 L581.0 640.6 L581.7 643.6 L582.4 646.5 L583.1 649.5 L583.8 652.5 L584.5 654.6 L585.2 648.8 L585.9 643.1 L586.6 637.3 L587.3 631.6 L588.0 629.1 L588.7 617.3 L589.4 605.5 L590.1 593.7 L590.8 584.0 L591.5 576.1 L592.2 568.3 L592.9 562.4 L593.6 572.2 L594.3 582.1 L595.0 591.9 L595.7 600.5 L596.4 608.3 L597.1 616.2 L597.8 624.7 L598.5 635.2 L599.2 645.7 L599.9 656.2 L600.6 657.1 L601.3 655.2 L602.0 653.3 L602.7 651.4 L603.4 649.5 L604.1 650.3 L604.8 651.1 L605.5 652.6 L606.2 656.9 L606.9 661.3 L607.6 663.2 L608.3 662.1 L609.0 661.0 L609.7 660.0 L610.4 658.9 L611.1 658.6 L611.8 658.7 L612.5 658.7 L613.2 658.8 L613.9 658.9 L614.6 659.0 L615.3 659.1 L616.0 660.4 L616.7 662.3 L617.4 664.4 L618.1 662.3 L618.8 660.3 L619.5 658.3 L620.2 656.1 L620.9 653.6 L621.6 651.1 L622.3 648.8 L623.0 647.9 L623.7 646.9 L624.4 645.9 L625.1 645.0 L625.8 644.2 L626.5 643.3 L627.2 642.5 L627.9 641.7 L628.6 640.9 L629.3 640.1 L630.0 639.4 L630.7 640.6 L631.4 641.8 L632.1 642.8 L632.8 643.3 L633.5 643.8 L634.2 644.6 L634.9 645.7 L635.6 646.7 L636.3 647.8 L637.0 649.2 L637.7 648.7 L638.4 647.2 L639.1 644.4 L639.8 644.1 L640.5 644.3 L641.2 644.7 L641.9 645.7 L642.6 646.8 L643.3 647.8 L644.0 648.9 L644.7 649.8 L645.4 650.6 L646.1 651.4 L646.8 652.3 L647.5 652.7 L648.2 652.3 L648.9 651.8 L649.6 651.4 L650.3 650.9 L651.0 650.5 L651.7 650.2 L652.4 652.0 L653.1 653.8 L653.8 655.6 L654.5 657.3 L655.2 659.1 L655.9 660.9 L656.6 662.7 L657.3 659.9 L658.0 652.5 L658.7 645.1 L659.4 638.6 L660.1 636.1 L660.8 633.6 L661.5 630.9 L662.2 627.8 L662.9 624.6 L663.6 621.5 L664.3 630.7 L665.0 642.6 L665.7 654.0 L666.4 663.4 L667.1 668.8 L667.8 673.8 L668.5 678.9 L669.2 681.9 L669.2 681.7Z" fill="#fa6400" fill-opacity="1" stroke="none"/>
<path d="M123.7 681.9 L127.3 665.7 L131.6 653.6 L138.7 653.3 L140.9 660.0 L145.1 675.0 L149.4 677.1 L154.4 681.9Z" fill="#5794f2" fill-opacity="1" stroke="none"/>
<path d="M323.7 681.9 L329.4 658.6 L333.0 650.7 L337.3 655.0 L339.4 653.6 L341.6 659.3 L345.1 671.4 L348.0 678.6 L351.6 681.9Z" fill="#5794f2" fill-opacity="1" stroke="none"/>
<path d="M397.3 681.9 L405.1 676.4 L415.9 674.3 L425.1 676.4 L432.3 680.7 L433.7 681.9Z" fill="#5794f2" fill-opacity="1" stroke="none"/>
<path d="M95.1 681.9 L98.7 679.3 L103.7 679.3 L105.9 681.9Z" fill="#5794f2" fill-opacity="1" stroke="none"/>
<path d="M238.0 681.9 L243.7 678.9 L248.0 681.9Z" fill="#5794f2" fill-opacity="1" stroke="none"/>
<path d="M368.0 681.9 L373.0 678.9 L379.4 681.1 L382.3 681.9Z" fill="#5794f2" fill-opacity="1" stroke="none"/>
<path d="M436.6 681.9 L440.1 680.0 L443.7 681.9Z" fill="#5794f2" fill-opacity="1" stroke="none"/>
<path d="M533.0 681.7 L535.0 674.0 L542.0 674.0 L544.0 681.7Z" fill="#5794f2" fill-opacity="1" stroke="none"/>
<path d="M630.0 681.7 L632.0 675.0 L640.0 675.0 L642.0 681.7Z" fill="#5794f2" fill-opacity="1" stroke="none"/>
<path d="M659.0 681.7 L663.0 674.0 L668.0 681.7Z" fill="#5794f2" fill-opacity="1" stroke="none"/>
<path d="M124.4 681.9 L130.9 662.9 L135.1 655.0 L138.0 654.3 L140.9 660.0 L145.1 674.3 L148.7 681.9Z" fill="#56a64b" fill-opacity="1" stroke="none"/>
<path d="M324.4 681.9 L330.9 661.4 L335.1 655.7 L339.4 655.0 L343.0 665.7 L346.6 677.1 L349.4 681.9Z" fill="#56a64b" fill-opacity="1" stroke="none"/>
<path d="M402.3 681.9 L409.4 680.0 L415.1 677.9 L420.9 680.0 L430.9 681.9Z" fill="#56a64b" fill-opacity="1" stroke="none"/>
<path d="M255.1 681.9 L261.6 678.3 L268.0 680.0 L275.1 677.1 L280.9 678.6 L288.0 680.0 L288.0 680.7 L293.7 680.0 L296.6 681.9Z" fill="#56a64b" fill-opacity="1" stroke="none"/>
<path d="M302.3 681.9 L310.9 679.3 L316.6 681.9Z" fill="#56a64b" fill-opacity="1" stroke="none"/>
<path d="M96.6 681.9 L99.4 680.3 L104.4 680.3 L105.9 681.9Z" fill="#56a64b" fill-opacity="1" stroke="none"/>
<path d="M449.4 681.9 L453.7 679.7 L459.4 680.7 L468.0 680.0 L478.0 681.1 L488.0 681.9Z" fill="#56a64b" fill-opacity="1" stroke="none"/>
<path d="M534.0 681.7 L536.0 677.5 L541.0 677.5 L543.0 681.7Z" fill="#e0b400" fill-opacity="1" stroke="none"/>
<path d="M631.0 681.7 L633.0 678.0 L639.0 678.0 L641.0 681.7Z" fill="#e0b400" fill-opacity="1" stroke="none"/>
<path d="M660.0 681.7 L663.0 677.0 L667.0 681.7Z" fill="#e0b400" fill-opacity="1" stroke="none"/>
<path d="M754 527.5H1368" stroke="rgba(36,41,46,0.12)" stroke-width="1"/>
<path d="M754 558.5H1368" stroke="rgba(36,41,46,0.12)" stroke-width="1"/>
<path d="M754 589.5H1368" stroke="rgba(36,41,46,0.12)" stroke-width="1"/>
<path d="M754 620.5H1368" stroke="rgba(36,41,46,0.12)" stroke-width="1"/>
<path d="M754 651.5H1368" stroke="rgba(36,41,46,0.12)" stroke-width="1"/>
<path d="M754 682.5H1368" stroke="rgba(36,41,46,0.12)" stroke-width="1"/>
<path d="M764.5 527V687" stroke="rgba(36,41,46,0.12)" stroke-width="1"/>
<path d="M815.5 527V687" stroke="rgba(36,41,46,0.12)" stroke-width="1"/>
<path d="M866.5 527V687" stroke="rgba(36,41,46,0.12)" stroke-width="1"/>
<path d="M917.5 527V687" stroke="rgba(36,41,46,0.12)" stroke-width="1"/>
<path d="M968.5 527V687" stroke="rgba(36,41,46,0.12)" stroke-width="1"/>
<path d="M1019.5 527V687" stroke="rgba(36,41,46,0.12)" stroke-width="1"/>
<path d="M1070.5 527V687" stroke="rgba(36,41,46,0.12)" stroke-width="1"/>
<path d="M1121.5 527V687" stroke="rgba(36,41,46,0.12)" stroke-width="1"/>
<path d="M1172.5 527V687" stroke="rgba(36,41,46,0.12)" stroke-width="1"/>
<path d="M1223.5 527V687" stroke="rgba(36,41,46,0.12)" stroke-width="1"/>
<path d="M1274.5 527V687" stroke="rgba(36,41,46,0.12)" stroke-width="1"/>
<path d="M1325.5 527V687" stroke="rgba(36,41,46,0.12)" stroke-width="1"/>
<path d="M807.5 682.6 L810.6 674.4 L815.2 674.4 L817.5 682.6" fill="none" stroke="#e0b400" stroke-width="1" stroke-linejoin="round"/>
<path d="M909.3 682.6 L911.6 527.1" fill="none" stroke="#e0b400" stroke-width="1" stroke-linejoin="round"/>
<path d="M918.0 527.1 L920.4 682.6" fill="none" stroke="#e0b400" stroke-width="1" stroke-linejoin="round"/>
<path d="M1012.4 682.6 L1014.2 527.1" fill="none" stroke="#e0b400" stroke-width="1" stroke-linejoin="round"/>
<path d="M1019.9 527.1 L1022.4 682.6" fill="none" stroke="#e0b400" stroke-width="1" stroke-linejoin="round"/>
<path d="M1114.5 682.6 L1116.0 527.1" fill="none" stroke="#e0b400" stroke-width="1" stroke-linejoin="round"/>
<path d="M1121.7 527.1 L1124.3 682.6" fill="none" stroke="#e0b400" stroke-width="1" stroke-linejoin="round"/>
<path d="M754.3 682.6 L1367.4 682.6" fill="none" stroke="#a352cc" stroke-width="1" stroke-linejoin="round"/>
<path d="M62 838.5H451" stroke="rgba(36,41,46,0.12)" stroke-width="1"/>
<path d="M62 875.5H451" stroke="rgba(36,41,46,0.12)" stroke-width="1"/>
<path d="M62 912.5H451" stroke="rgba(36,41,46,0.12)" stroke-width="1"/>
<path d="M62 949.5H451" stroke="rgba(36,41,46,0.12)" stroke-width="1"/>
<path d="M62 986.5H451" stroke="rgba(36,41,46,0.12)" stroke-width="1"/>
<path d="M101.5 831V991" stroke="rgba(36,41,46,0.12)" stroke-width="1"/>
<path d="M165.5 831V991" stroke="rgba(36,41,46,0.12)" stroke-width="1"/>
<path d="M230.5 831V991" stroke="rgba(36,41,46,0.12)" stroke-width="1"/>
<path d="M294.5 831V991" stroke="rgba(36,41,46,0.12)" stroke-width="1"/>
<path d="M359.5 831V991" stroke="rgba(36,41,46,0.12)" stroke-width="1"/>
<path d="M423.5 831V991" stroke="rgba(36,41,46,0.12)" stroke-width="1"/>
<path d="M62.4 986.3 L70.0 986.3 L73.6 980.3 L75.0 986.3 L84.0 986.3 L86.0 985.3 L89.0 986.3 L226.5 986.3 L227.3 975.0 L228.3 880.1 L229.6 908.0 L231.5 986.3 L240.0 986.3 L241.0 985.0 L243.0 986.3 L265.0 986.3 L267.6 962.1 L269.7 986.3 L275.7 986.3 L277.0 984.8 L279.0 985.5 L281.0 986.3 L284.0 985.2 L288.0 985.2 L289.0 986.3 L299.0 986.3 L300.0 985.0 L304.0 985.0 L305.0 986.3 L397.0 986.3 L398.0 985.6 L440.2 985.6 L442.9 975.7" fill="none" stroke="#56a64b" stroke-width="1" stroke-linejoin="round"/>
<path d="M62.4 986.6 L73.0 986.6 L74.0 985.6 L101.0 985.6 L102.0 986.6 L222.0 986.6 L223.0 985.5 L226.0 985.5 L227.0 986.6 L441.0 986.6 L443.3 978.0" fill="none" stroke="#e0b400" stroke-width="1" stroke-linejoin="round"/>
<path d="M62.4 986.3 L60.0 986.4 L74.3 986.1 L76.4 984.6 L80.0 984.6 L82.1 985.7 L85.7 985.4 L88.6 983.3 L92.1 983.6 L94.3 984.3 L96.9 982.3 L99.3 983.6 L101.4 985.4 L102.1 986.4 L210.0 986.4 L212.1 985.4 L214.0 986.4 L217.9 986.4 L222.1 980.4 L224.3 982.6 L226.4 982.6 L228.6 980.3 L230.7 983.6 L232.9 985.7 L235.0 985.4 L237.1 986.0 L241.4 978.3 L244.3 981.4 L247.1 979.3 L250.0 984.3 L252.1 985.7 L255.0 986.0 L255.0 986.0 L259.3 984.6 L262.1 982.1 L264.3 985.4 L266.4 986.4 L337.9 986.4 L339.3 985.4 L340.7 986.4 L342.1 985.4 L343.3 986.4 L376.4 986.4 L379.0 984.6 L380.7 985.7 L382.9 986.4 L386.4 985.7 L389.3 985.7 L390.7 986.4 L397.9 986.4 L398.6 985.7 L426.4 985.7 L428.6 984.6 L430.7 985.7 L440.4 986.0 L441.9 975.7 L442.4 948.6 L443.0 846.4" fill="none" stroke="#5794f2" stroke-width="1" stroke-linejoin="round"/>
<path d="M537 847.5H909" stroke="rgba(36,41,46,0.12)" stroke-width="1"/>
<path d="M537 882.5H909" stroke="rgba(36,41,46,0.12)" stroke-width="1"/>
<path d="M537 917.5H909" stroke="rgba(36,41,46,0.12)" stroke-width="1"/>
<path d="M537 951.5H909" stroke="rgba(36,41,46,0.12)" stroke-width="1"/>
<path d="M537 986.5H909" stroke="rgba(36,41,46,0.12)" stroke-width="1"/>
<path d="M574.5 831V991" stroke="rgba(36,41,46,0.12)" stroke-width="1"/>
<path d="M636.5 831V991" stroke="rgba(36,41,46,0.12)" stroke-width="1"/>
<path d="M698.5 831V991" stroke="rgba(36,41,46,0.12)" stroke-width="1"/>
<path d="M759.5 831V991" stroke="rgba(36,41,46,0.12)" stroke-width="1"/>
<path d="M821.5 831V991" stroke="rgba(36,41,46,0.12)" stroke-width="1"/>
<path d="M883.5 831V991" stroke="rgba(36,41,46,0.12)" stroke-width="1"/>
<path d="M537.3 986.3 L537.3 961.8 L538.4 954.4 L540.1 953.2 L541.6 954.9 L543.2 982.4 L545.3 970.9 L546.4 969.8 L548.5 966.4 L549.6 982.9 L551.6 964.7 L554.4 960.7 L555.6 982.9 L557.3 977.8 L558.6 976.6 L560.7 982.9 L565.8 982.9 L568.1 964.1 L569.6 957.2 L571.6 972.1 L572.9 982.4 L574.4 984.1 L576.1 982.9 L577.5 967.5 L579.6 964.7 L580.7 982.9 L583.5 982.9 L585.8 962.9 L587.0 960.1 L588.3 958.4 L589.5 921.2 L591.5 952.1 L593.3 952.1 L595.0 956.1 L596.1 957.2 L597.6 957.2 L599.5 906.4 L600.7 935.5 L602.4 949.2 L603.5 953.8 L605.6 982.9 L607.5 958.4 L610.4 952.1 L613.8 957.2 L616.1 962.9 L620.1 982.9 L622.4 969.8 L624.4 932.1 L627.5 982.9 L628.7 937.8 L630.4 925.2 L631.5 927.0 L633.5 956.7 L634.4 955.5 L636.7 982.9 L642.4 982.9 L644.4 923.5 L645.2 923.0 L647.5 900.7 L648.3 902.4 L650.4 895.5 L651.5 911.0 L653.8 901.3 L656.3 897.6 L658.1 901.3 L659.5 913.2 L661.8 897.3 L663.5 895.3 L665.0 895.5 L665.4 929.8 L667.4 905.3 L669.1 905.3 L670.5 877.3 L672.3 894.4 L673.5 893.3 L675.4 897.8 L676.9 903.5 L679.4 953.8 L681.7 965.2 L682.8 964.1 L685.7 945.2 L687.4 937.8 L689.5 885.3 L690.8 888.1 L692.6 888.1 L693.7 936.7 L696.8 982.9 L698.6 982.9 L700.6 894.4 L703.2 897.8 L704.6 913.8 L710.3 899.0 L712.5 887.5 L713.5 848.1 L715.4 852.1 L717.7 982.9 L718.8 964.1 L720.5 960.7 L721.7 896.7 L723.4 892.7 L726.3 897.8 L727.4 895.5 L729.7 900.1 L731.7 909.3 L732.5 974.4 L734.3 971.5 L735.4 982.9 L738.6 966.4 L741.3 894.4 L743.2 892.1 L744.5 887.5 L746.6 892.1 L748.3 954.9 L749.3 892.1 L752.5 886.4 L755.7 891.0 L758.8 982.9 L760.5 954.4 L762.0 955.5 L763.4 961.8 L766.5 939.5 L768.3 942.4 L769.9 957.2 L771.4 960.1 L772.9 982.9 L774.2 982.9 L775.6 971.5 L777.7 970.9 L779.7 969.6 L781.1 971.5 L782.5 971.5 L783.6 982.9 L785.1 982.9 L786.6 966.4 L787.9 966.9 L790.0 963.5 L790.7 966.4 L791.9 972.1 L794.7 982.9 L797.0 982.9 L799.3 964.1 L800.4 962.4 L802.4 964.7 L803.8 983.5 L805.3 984.1 L808.4 982.9 L811.8 965.8 L813.3 962.4 L814.7 966.1 L816.1 964.7 L818.1 958.9 L819.8 958.4 L821.0 961.8 L822.5 982.9 L825.6 957.8 L827.0 960.7 L828.4 962.9 L830.7 954.9 L831.6 920.1 L833.5 917.5 L834.7 942.4 L836.4 953.8 L839.8 955.5 L841.5 954.9 L844.4 953.2 L847.6 955.5 L849.2 954.9 L853.3 952.1 L855.3 954.4 L856.7 953.2 L858.7 953.8 L859.5 958.9 L861.0 955.5 L862.7 956.7 L864.4 957.2 L865.5 913.8 L868.6 911.3 L870.7 982.9 L872.4 982.9 L875.2 954.9 L876.6 907.5 L878.7 904.5 L881.9 953.8 L884.6 973.2 L886.7 963.5 L887.8 963.5 L889.2 965.2 L890.4 934.4 L892.6 953.8 L893.5 953.2 L895.6 956.7 L896.7 983.5 L898.4 956.1 L903.8 952.1 L903.8 986.3Z" fill="#b0b040" fill-opacity="0.025" stroke="none"/>
<path d="M537.3 961.8 L538.4 954.4 L540.1 953.2 L541.6 954.9 L543.2 982.4 L545.3 970.9 L546.4 969.8 L548.5 966.4 L549.6 982.9 L551.6 964.7 L554.4 960.7 L555.6 982.9 L557.3 977.8 L558.6 976.6 L560.7 982.9 L565.8 982.9 L568.1 964.1 L569.6 957.2 L571.6 972.1 L572.9 982.4 L574.4 984.1 L576.1 982.9 L577.5 967.5 L579.6 964.7 L580.7 982.9 L583.5 982.9 L585.8 962.9 L587.0 960.1 L588.3 958.4 L589.5 921.2 L591.5 952.1 L593.3 952.1 L595.0 956.1 L596.1 957.2 L597.6 957.2 L599.5 906.4 L600.7 935.5 L602.4 949.2 L603.5 953.8 L605.6 982.9 L607.5 958.4 L610.4 952.1 L613.8 957.2 L616.1 962.9 L620.1 982.9 L622.4 969.8 L624.4 932.1 L627.5 982.9 L628.7 937.8 L630.4 925.2 L631.5 927.0 L633.5 956.7 L634.4 955.5 L636.7 982.9 L642.4 982.9 L644.4 923.5 L645.2 923.0 L647.5 900.7 L648.3 902.4 L650.4 895.5 L651.5 911.0 L653.8 901.3 L656.3 897.6 L658.1 901.3 L659.5 913.2 L661.8 897.3 L663.5 895.3 L665.0 895.5 L665.4 929.8 L667.4 905.3 L669.1 905.3 L670.5 877.3 L672.3 894.4 L673.5 893.3 L675.4 897.8 L676.9 903.5 L679.4 953.8 L681.7 965.2 L682.8 964.1 L685.7 945.2 L687.4 937.8 L689.5 885.3 L690.8 888.1 L692.6 888.1 L693.7 936.7 L696.8 982.9 L698.6 982.9 L700.6 894.4 L703.2 897.8 L704.6 913.8 L710.3 899.0 L712.5 887.5 L713.5 848.1 L715.4 852.1 L717.7 982.9 L718.8 964.1 L720.5 960.7 L721.7 896.7 L723.4 892.7 L726.3 897.8 L727.4 895.5 L729.7 900.1 L731.7 909.3 L732.5 974.4 L734.3 971.5 L735.4 982.9 L738.6 966.4 L741.3 894.4 L743.2 892.1 L744.5 887.5 L746.6 892.1 L748.3 954.9 L749.3 892.1 L752.5 886.4 L755.7 891.0 L758.8 982.9 L760.5 954.4 L762.0 955.5 L763.4 961.8 L766.5 939.5 L768.3 942.4 L769.9 957.2 L771.4 960.1 L772.9 982.9 L774.2 982.9 L775.6 971.5 L777.7 970.9 L779.7 969.6 L781.1 971.5 L782.5 971.5 L783.6 982.9 L785.1 982.9 L786.6 966.4 L787.9 966.9 L790.0 963.5 L790.7 966.4 L791.9 972.1 L794.7 982.9 L797.0 982.9 L799.3 964.1 L800.4 962.4 L802.4 964.7 L803.8 983.5 L805.3 984.1 L808.4 982.9 L811.8 965.8 L813.3 962.4 L814.7 966.1 L816.1 964.7 L818.1 958.9 L819.8 958.4 L821.0 961.8 L822.5 982.9 L825.6 957.8 L827.0 960.7 L828.4 962.9 L830.7 954.9 L831.6 920.1 L833.5 917.5 L834.7 942.4 L836.4 953.8 L839.8 955.5 L841.5 954.9 L844.4 953.2 L847.6 955.5 L849.2 954.9 L853.3 952.1 L855.3 954.4 L856.7 953.2 L858.7 953.8 L859.5 958.9 L861.0 955.5 L862.7 956.7 L864.4 957.2 L865.5 913.8 L868.6 911.3 L870.7 982.9 L872.4 982.9 L875.2 954.9 L876.6 907.5 L878.7 904.5 L881.9 953.8 L884.6 973.2 L886.7 963.5 L887.8 963.5 L889.2 965.2 L890.4 934.4 L892.6 953.8 L893.5 953.2 L895.6 956.7 L896.7 983.5 L898.4 956.1 L903.8 952.1" fill="none" stroke="#56a64b" stroke-width="1" stroke-linejoin="round"/>
<path d="M537.5 986.0 L903.8 986.0" fill="none" stroke="#e0b400" stroke-width="1" stroke-linejoin="round"/>
<path d="M537.3 985.2 L538.4 984.4 L541.3 984.4 L543.0 986.0 L547.6 985.2 L549.9 986.0 L584.1 986.0 L589.8 984.4 L593.3 984.4 L595.5 985.6 L599.0 984.4 L601.3 983.3 L603.5 984.1 L605.8 986.0 L608.1 985.6 L610.4 983.5 L612.7 986.0 L623.0 986.0 L625.0 984.1 L627.0 986.0 L629.8 984.4 L633.2 984.9 L635.5 986.0 L643.0 986.0 L647.5 983.3 L649.8 982.6 L652.7 984.4 L657.2 982.4 L660.7 983.5 L665.0 983.5 L661.7 984.1 L663.4 983.3 L665.1 984.6 L668.6 984.1 L670.5 979.5 L672.3 983.5 L673.7 982.4 L676.0 982.6 L678.8 984.6 L682.8 985.6 L686.8 984.1 L689.5 980.6 L692.6 980.6 L695.4 985.6 L698.3 986.0 L700.6 982.6 L706.3 982.4 L708.0 983.3 L712.0 981.2 L715.4 981.4 L717.7 986.0 L719.4 986.0 L721.7 981.0 L724.0 980.1 L726.8 981.2 L730.8 985.2 L733.1 986.0 L738.8 986.0 L741.3 980.6 L742.8 980.3 L744.5 977.2 L746.2 981.8 L748.2 984.6 L750.2 980.6 L752.8 974.4 L754.8 976.6 L758.2 985.8 L760.0 985.2 L765.1 984.4 L768.0 984.4 L770.8 986.0 L790.0 986.0 L790.7 986.0 L798.7 985.6 L802.1 985.2 L803.8 986.0 L817.0 985.8 L819.3 985.2 L822.7 986.0 L828.4 986.0 L830.7 983.7 L833.0 983.3 L835.3 984.4 L838.1 984.4 L840.4 985.6 L844.4 984.4 L847.3 985.6 L867.2 985.2 L869.0 984.1 L870.7 986.0 L874.7 986.0 L878.1 982.4 L880.7 985.6 L896.4 985.8 L901.3 985.2 L902.7 972.1 L903.8 969.2" fill="none" stroke="#5794f2" stroke-width="1" stroke-linejoin="round"/>
<path d="M979 879.5H1368" stroke="rgba(36,41,46,0.12)" stroke-width="1"/>
<path d="M979 932.5H1368" stroke="rgba(36,41,46,0.12)" stroke-width="1"/>
<path d="M979 986.5H1368" stroke="rgba(36,41,46,0.12)" stroke-width="1"/>
<path d="M1017.5 831V991" stroke="rgba(36,41,46,0.12)" stroke-width="1"/>
<path d="M1082.5 831V991" stroke="rgba(36,41,46,0.12)" stroke-width="1"/>
<path d="M1147.5 831V991" stroke="rgba(36,41,46,0.12)" stroke-width="1"/>
<path d="M1211.5 831V991" stroke="rgba(36,41,46,0.12)" stroke-width="1"/>
<path d="M1276.5 831V991" stroke="rgba(36,41,46,0.12)" stroke-width="1"/>
<path d="M1341.5 831V991" stroke="rgba(36,41,46,0.12)" stroke-width="1"/>
<path d="M982.9 981.4 L991.4 981.4 L993.3 973.6 L995.0 975.0 L997.1 974.3 L999.0 981.4 L1000.0 981.4 L1001.4 971.4 L1004.3 977.9 L1007.1 981.4 L1012.9 981.4 L1014.7 972.6 L1017.9 975.0 L1020.0 981.4 L1042.1 981.4 L1043.9 970.3 L1047.4 970.3 L1049.3 981.4 L1064.7 981.4" fill="none" stroke="#56a64b" stroke-width="1" stroke-linejoin="round"/>
<path d="M1068.6 981.4 L1089.3 981.4 L1091.0 973.6 L1093.6 973.1 L1094.3 972.6 L1095.7 981.4 L1097.6 971.4 L1100.4 971.4 L1102.9 981.4 L1103.6 981.4" fill="none" stroke="#56a64b" stroke-width="1" stroke-linejoin="round"/>
<path d="M1106.4 981.4 L1129.3 981.4 L1131.1 970.7 L1132.9 970.3 L1134.7 973.6 L1137.1 981.4 L1165.7 981.4 L1170.4 961.4 L1173.6 981.4 L1186.0 981.4 L1187.9 974.3 L1191.1 974.3 L1192.9 981.4 L1235.0 981.4" fill="none" stroke="#56a64b" stroke-width="1" stroke-linejoin="round"/>
<path d="M1241.4 981.4 L1244.3 981.4" fill="none" stroke="#56a64b" stroke-width="1" stroke-linejoin="round"/>
<path d="M1247.9 981.4 L1257.9 981.4 L1260.3 970.3 L1263.6 970.3 L1266.0 981.4 L1289.3 981.4" fill="none" stroke="#56a64b" stroke-width="1" stroke-linejoin="round"/>
<path d="M1292.9 981.4 L1296.4 981.4" fill="none" stroke="#56a64b" stroke-width="1" stroke-linejoin="round"/>
<path d="M1299.3 971.1 L1302.9 970.3 L1307.1 971.4 L1309.3 981.4" fill="none" stroke="#56a64b" stroke-width="1" stroke-linejoin="round"/>
<path d="M1323.6 971.7 L1325.7 972.6 L1327.9 980.0 L1330.0 970.7 L1333.6 970.3" fill="none" stroke="#56a64b" stroke-width="1" stroke-linejoin="round"/>
<path d="M1338.6 978.3 L1342.1 971.4 L1344.3 971.7 L1346.9 981.4 L1354.3 981.4 L1355.3 848.2 L1359.0 848.2" fill="none" stroke="#56a64b" stroke-width="1" stroke-linejoin="round"/>
<path d="M982.9 982.9 L1042.1 982.9 L1043.9 981.1 L1047.4 981.1 L1049.3 982.9 L1064.7 982.9" fill="none" stroke="#e0b400" stroke-width="1" stroke-linejoin="round"/>
<path d="M1068.6 982.9 L1103.6 982.9" fill="none" stroke="#e0b400" stroke-width="1" stroke-linejoin="round"/>
<path d="M1106.4 982.9 L1129.3 982.9 L1131.1 976.9 L1132.9 982.9 L1175.0 982.9 L1235.0 982.9" fill="none" stroke="#e0b400" stroke-width="1" stroke-linejoin="round"/>
<path d="M1241.4 982.9 L1244.3 982.9" fill="none" stroke="#e0b400" stroke-width="1" stroke-linejoin="round"/>
<path d="M1247.9 982.9 L1258.6 982.6 L1262.9 980.7 L1265.7 982.9 L1289.3 982.9" fill="none" stroke="#e0b400" stroke-width="1" stroke-linejoin="round"/>
<path d="M1292.9 982.9 L1296.4 982.9" fill="none" stroke="#e0b400" stroke-width="1" stroke-linejoin="round"/>
<path d="M1299.3 982.9 L1304.3 981.4 L1307.9 982.9" fill="none" stroke="#e0b400" stroke-width="1" stroke-linejoin="round"/>
<path d="M1313.6 982.9 L1318.6 982.9" fill="none" stroke="#e0b400" stroke-width="1" stroke-linejoin="round"/>
<path d="M1323.6 982.9 L1328.6 982.9" fill="none" stroke="#e0b400" stroke-width="1" stroke-linejoin="round"/>
<path d="M1338.6 982.9 L1358.6 982.9" fill="none" stroke="#e0b400" stroke-width="1" stroke-linejoin="round"/>
<path d="M982.9 983.7 L984.6 984.4 L986.3 984.0 L988.0 984.5 L989.7 984.6 L991.4 983.3 L993.1 983.2 L994.9 985.1 L996.6 983.7 L998.3 983.7 L1000.0 985.4 L1001.7 984.2 L1003.4 985.1 L1005.1 984.2 L1006.9 984.6 L1008.6 983.5 L1010.3 984.6 L1012.0 985.1 L1013.7 984.3 L1015.4 984.8 L1017.1 984.7 L1018.9 983.3 L1020.6 984.9 L1022.3 984.5 L1024.0 983.8 L1025.7 983.2 L1027.4 985.1 L1029.1 984.2 L1030.9 984.8 L1032.6 985.2 L1034.3 984.8 L1036.0 985.2 L1037.7 984.0 L1039.4 985.0 L1041.1 984.2 L1042.1 984.3 L1043.9 981.4 L1047.4 981.4 L1049.3 984.6 L1050.7 985.3 L1052.4 985.2 L1054.1 983.4 L1055.9 983.5 L1057.6 983.6 L1059.3 985.3 L1061.0 984.1 L1062.7 984.6 L1064.4 983.8 L1064.7 984.3" fill="none" stroke="#5794f2" stroke-width="1" stroke-linejoin="round"/>
<path d="M1068.6 984.0 L1070.3 983.7 L1072.0 983.7 L1073.7 984.2 L1075.4 984.2 L1077.1 984.9 L1078.9 984.4 L1080.6 985.0 L1082.3 984.8 L1084.0 985.1 L1085.7 984.4 L1087.4 983.2 L1089.1 984.8 L1090.9 985.1 L1092.6 984.9 L1094.3 984.2 L1096.0 984.5 L1096.4 984.0 L1098.6 981.4 L1100.7 982.9 L1103.6 985.4" fill="none" stroke="#5794f2" stroke-width="1" stroke-linejoin="round"/>
<path d="M1106.4 983.9 L1108.1 985.1 L1109.9 984.6 L1111.6 984.0 L1113.3 983.6 L1115.0 985.1 L1116.7 985.4 L1118.4 983.6 L1120.1 985.0 L1121.9 984.2 L1123.6 983.7 L1125.3 984.0 L1127.0 985.0 L1128.7 985.2 L1129.3 984.4 L1131.1 980.7 L1132.9 984.3 L1134.3 983.8 L1136.0 984.8 L1137.7 983.8 L1139.4 984.9 L1141.1 984.3 L1142.9 985.2 L1144.6 985.4 L1146.3 984.6 L1148.0 985.4 L1149.7 984.2 L1151.4 983.8 L1153.1 984.7 L1154.9 983.8 L1156.6 984.1 L1158.3 984.4 L1160.0 984.8 L1161.7 984.0 L1163.4 983.8 L1165.1 985.2 L1166.9 984.3 L1168.6 985.4 L1170.3 985.3 L1172.0 984.4 L1173.7 984.5 L1175.0 984.6 L1171.4 984.5 L1173.1 984.7 L1174.9 984.6 L1176.6 984.5 L1178.3 984.7 L1180.0 985.3 L1181.7 984.4 L1183.4 984.3 L1185.1 984.9 L1186.9 983.9 L1188.6 984.0 L1190.3 985.4 L1192.0 984.5 L1193.7 984.5 L1195.4 983.5 L1197.1 984.3 L1198.9 984.6 L1200.6 983.5 L1202.3 984.7 L1204.0 984.7 L1205.7 983.5 L1207.4 984.7 L1209.1 984.4 L1210.9 984.8 L1212.6 984.1 L1214.3 984.8 L1216.0 984.9 L1217.7 983.5 L1219.4 983.5 L1221.1 984.8 L1222.9 985.4 L1224.6 983.9 L1225.7 984.4 L1228.6 981.4 L1231.4 983.6 L1235.0 982.9" fill="none" stroke="#5794f2" stroke-width="1" stroke-linejoin="round"/>
<path d="M1241.4 984.0 L1244.3 984.0" fill="none" stroke="#5794f2" stroke-width="1" stroke-linejoin="round"/>
<path d="M1247.9 985.4 L1251.4 982.9 L1258.6 982.1 L1263.6 979.3 L1266.4 983.6 L1268.6 984.3 L1270.3 984.6 L1272.0 984.1 L1273.7 984.2 L1275.4 984.1 L1277.1 984.2 L1278.9 984.6 L1280.6 984.0 L1282.3 984.2 L1284.0 985.0 L1285.7 983.5 L1287.4 984.6 L1289.1 984.9 L1289.3 984.4" fill="none" stroke="#5794f2" stroke-width="1" stroke-linejoin="round"/>
<path d="M1292.9 985.1 L1296.4 985.1" fill="none" stroke="#5794f2" stroke-width="1" stroke-linejoin="round"/>
<path d="M1299.3 981.4 L1302.1 976.4 L1304.3 975.7 L1305.7 981.4 L1309.3 985.0" fill="none" stroke="#5794f2" stroke-width="1" stroke-linejoin="round"/>
<path d="M1313.6 982.9 L1318.6 981.7" fill="none" stroke="#5794f2" stroke-width="1" stroke-linejoin="round"/>
<path d="M1323.6 979.3 L1327.9 982.1 L1330.0 977.9 L1333.6 977.4" fill="none" stroke="#5794f2" stroke-width="1" stroke-linejoin="round"/>
<path d="M1338.6 982.9 L1342.9 982.6 L1347.1 985.0 L1353.6 985.0 L1355.7 977.9 L1358.6 980.7" fill="none" stroke="#5794f2" stroke-width="1" stroke-linejoin="round"/>
<path d="M75 1150.5H451" stroke="rgba(36,41,46,0.12)" stroke-width="1"/>
<path d="M75 1185.5H451" stroke="rgba(36,41,46,0.12)" stroke-width="1"/>
<path d="M75 1220.5H451" stroke="rgba(36,41,46,0.12)" stroke-width="1"/>
<path d="M75 1255.5H451" stroke="rgba(36,41,46,0.12)" stroke-width="1"/>
<path d="M75 1290.5H451" stroke="rgba(36,41,46,0.12)" stroke-width="1"/>
<path d="M112.5 1135V1295" stroke="rgba(36,41,46,0.12)" stroke-width="1"/>
<path d="M175.5 1135V1295" stroke="rgba(36,41,46,0.12)" stroke-width="1"/>
<path d="M237.5 1135V1295" stroke="rgba(36,41,46,0.12)" stroke-width="1"/>
<path d="M299.5 1135V1295" stroke="rgba(36,41,46,0.12)" stroke-width="1"/>
<path d="M362.5 1135V1295" stroke="rgba(36,41,46,0.12)" stroke-width="1"/>
<path d="M424.5 1135V1295" stroke="rgba(36,41,46,0.12)" stroke-width="1"/>
<rect x="75.7" y="1150.3" width="39.7" height="140" fill="#e6d070" fill-opacity="0.022"/>
<rect x="75.7" y="1212.4" width="39.7" height="77.900" fill="#e6d070" fill-opacity="0.022"/>
<path d="M75.7 1150.3 L115.4 1150.3" fill="none" stroke="#56a64b" stroke-width="1" stroke-linejoin="round"/>
<rect x="122.6" y="1150.3" width="13.9" height="140" fill="#e6d070" fill-opacity="0.022"/>
<rect x="122.6" y="1212.4" width="13.9" height="77.900" fill="#e6d070" fill-opacity="0.022"/>
<path d="M122.6 1150.3 L136.4 1150.3" fill="none" stroke="#56a64b" stroke-width="1" stroke-linejoin="round"/>
<rect x="139.3" y="1150.3" width="3.3" height="140" fill="#e6d070" fill-opacity="0.022"/>
<rect x="139.3" y="1212.4" width="3.3" height="77.900" fill="#e6d070" fill-opacity="0.022"/>
<path d="M139.3 1150.3 L142.6 1150.3" fill="none" stroke="#56a64b" stroke-width="1" stroke-linejoin="round"/>
<rect x="147.1" y="1150.3" width="28.3" height="140" fill="#e6d070" fill-opacity="0.022"/>
<rect x="147.1" y="1212.4" width="28.3" height="77.900" fill="#e6d070" fill-opacity="0.022"/>
<path d="M147.1 1150.3 L175.4 1150.3" fill="none" stroke="#56a64b" stroke-width="1" stroke-linejoin="round"/>
<rect x="181.4" y="1150.3" width="37.9" height="140" fill="#e6d070" fill-opacity="0.022"/>
<rect x="181.4" y="1212.4" width="37.9" height="77.900" fill="#e6d070" fill-opacity="0.022"/>
<path d="M181.4 1150.3 L219.3 1150.3" fill="none" stroke="#56a64b" stroke-width="1" stroke-linejoin="round"/>
<rect x="225.4" y="1150.3" width="75.0" height="140" fill="#e6d070" fill-opacity="0.022"/>
<rect x="225.4" y="1212.4" width="75.0" height="77.900" fill="#e6d070" fill-opacity="0.022"/>
<path d="M225.4 1150.3 L300.4 1150.3" fill="none" stroke="#56a64b" stroke-width="1" stroke-linejoin="round"/>
<rect x="304.6" y="1150.3" width="38.0" height="140" fill="#e6d070" fill-opacity="0.022"/>
<rect x="304.6" y="1212.4" width="38.0" height="77.900" fill="#e6d070" fill-opacity="0.022"/>
<path d="M304.6 1150.3 L342.6 1150.3" fill="none" stroke="#56a64b" stroke-width="1" stroke-linejoin="round"/>
<rect x="351.4" y="1150.3" width="37.9" height="140" fill="#e6d070" fill-opacity="0.022"/>
<rect x="351.4" y="1212.4" width="37.9" height="77.900" fill="#e6d070" fill-opacity="0.022"/>
<path d="M351.4 1150.3 L389.3 1150.3" fill="none" stroke="#56a64b" stroke-width="1" stroke-linejoin="round"/>
<rect x="422.6" y="1150.3" width="19.6" height="140" fill="#e6d070" fill-opacity="0.022"/>
<rect x="422.6" y="1212.4" width="19.6" height="77.900" fill="#e6d070" fill-opacity="0.022"/>
<path d="M422.6 1150.3 L442.1 1150.3" fill="none" stroke="#56a64b" stroke-width="1" stroke-linejoin="round"/>
<path d="M75.7 1212.4 L97.1 1212.4 L99.3 1214.3 L103.6 1215.0 L107.9 1216.4 L111.4 1216.4 L112.9 1212.9 L115.4 1212.4" fill="none" stroke="#e0b400" stroke-width="1" stroke-linejoin="round"/>
<path d="M122.6 1212.4 L136.4 1212.4" fill="none" stroke="#e0b400" stroke-width="1" stroke-linejoin="round"/>
<path d="M139.3 1212.4 L142.6 1212.4" fill="none" stroke="#e0b400" stroke-width="1" stroke-linejoin="round"/>
<path d="M147.1 1212.4 L175.4 1212.4" fill="none" stroke="#e0b400" stroke-width="1" stroke-linejoin="round"/>
<path d="M181.4 1212.4 L188.6 1212.4 L191.1 1213.6 L196.4 1213.6 L198.6 1212.4 L219.3 1212.4" fill="none" stroke="#e0b400" stroke-width="1" stroke-linejoin="round"/>
<path d="M225.4 1212.4 L227.1 1213.6 L233.6 1213.6 L235.7 1214.6 L239.3 1214.3 L240.7 1212.6 L270.0 1212.4 L300.4 1212.4" fill="none" stroke="#e0b400" stroke-width="1" stroke-linejoin="round"/>
<path d="M304.6 1212.4 L342.6 1212.4" fill="none" stroke="#e0b400" stroke-width="1" stroke-linejoin="round"/>
<path d="M351.4 1212.4 L389.3 1212.4" fill="none" stroke="#e0b400" stroke-width="1" stroke-linejoin="round"/>
<path d="M422.6 1212.4 L442.1 1212.4" fill="none" stroke="#e0b400" stroke-width="1" stroke-linejoin="round"/>
<path d="M75.7 1252.9 L77.1 1259.3 L78.3 1259.3 L79.4 1245.7 L81.4 1247.4 L83.1 1247.4 L84.6 1258.3 L86.0 1255.0 L87.4 1237.9 L89.3 1235.7 L90.4 1233.6 L92.6 1260.0 L94.3 1262.1 L95.7 1250.0 L97.4 1246.4 L98.9 1254.3 L101.1 1256.9 L103.6 1265.0 L105.7 1266.4 L111.4 1267.4 L112.6 1246.4 L114.3 1248.6 L115.4 1271.4" fill="none" stroke="#5794f2" stroke-width="1" stroke-linejoin="round"/>
<path d="M122.6 1232.6 L124.0 1238.6 L125.4 1238.6 L126.6 1256.4 L128.6 1232.6 L131.1 1232.6 L133.6 1246.4 L136.4 1246.4" fill="none" stroke="#5794f2" stroke-width="1" stroke-linejoin="round"/>
<path d="M139.3 1256.0 L142.6 1256.0" fill="none" stroke="#5794f2" stroke-width="1" stroke-linejoin="round"/>
<path d="M147.1 1238.6 L150.7 1227.4 L151.4 1239.3 L152.9 1239.3 L155.4 1254.3 L156.9 1258.6 L158.6 1258.3 L161.4 1245.0 L164.3 1242.1 L165.4 1225.0 L169.3 1230.3 L170.7 1230.3 L172.6 1205.4 L175.4 1205.4" fill="none" stroke="#5794f2" stroke-width="1" stroke-linejoin="round"/>
<path d="M181.4 1245.0 L183.1 1242.1 L184.3 1245.0 L187.1 1256.4 L188.6 1254.3 L190.7 1241.7 L195.7 1247.1 L197.9 1246.4 L200.3 1257.4 L204.3 1253.6 L207.9 1253.6 L209.7 1251.4 L211.1 1252.9 L212.9 1242.6 L214.3 1242.1 L217.1 1249.3 L219.3 1247.1" fill="none" stroke="#5794f2" stroke-width="1" stroke-linejoin="round"/>
<path d="M225.4 1248.3 L226.9 1255.0 L228.6 1256.9 L231.4 1265.4 L234.3 1265.7 L239.3 1267.4 L240.7 1260.0 L242.9 1257.9 L245.0 1253.6 L247.6 1264.3 L249.3 1261.1 L251.4 1259.7 L254.0 1250.3 L256.4 1263.1 L259.3 1263.1 L261.4 1225.0 L262.6 1225.0 L265.4 1257.4 L269.3 1205.7 L270.7 1205.7 L272.9 1255.0 L275.4 1247.1 L277.1 1257.1 L280.0 1261.1 L285.7 1262.1 L289.3 1260.3 L292.9 1262.6 L295.7 1253.6 L297.4 1257.1 L300.4 1257.4" fill="none" stroke="#5794f2" stroke-width="1" stroke-linejoin="round"/>
<path d="M304.6 1259.3 L306.0 1250.7 L307.9 1250.3 L309.3 1257.4 L312.1 1253.6 L315.0 1255.4 L318.3 1250.0 L320.7 1245.4 L321.7 1248.3 L323.6 1245.4 L326.4 1252.1 L329.3 1251.4 L332.1 1255.0 L334.6 1259.3 L337.1 1259.3 L340.0 1257.4 L342.6 1257.4" fill="none" stroke="#5794f2" stroke-width="1" stroke-linejoin="round"/>
<path d="M351.4 1252.6 L353.6 1252.1 L358.3 1240.7 L359.7 1261.4 L361.7 1261.1 L364.3 1252.9 L366.0 1260.3 L367.4 1260.3 L369.7 1247.1 L371.4 1243.6 L373.6 1242.1 L375.4 1233.6 L376.9 1245.0 L379.7 1249.3 L381.4 1248.6 L383.6 1255.0 L385.0 1252.9 L389.3 1253.6" fill="none" stroke="#5794f2" stroke-width="1" stroke-linejoin="round"/>
<path d="M422.6 1251.4 L425.0 1251.1 L428.6 1248.3 L431.4 1259.3 L433.1 1257.4 L435.0 1244.3 L437.1 1242.1 L439.3 1246.4 L440.7 1265.7 L442.6 1270.3" fill="none" stroke="#5794f2" stroke-width="1" stroke-linejoin="round"/>
<path d="M547 1161.5H909" stroke="rgba(36,41,46,0.12)" stroke-width="1"/>
<path d="M547 1193.5H909" stroke="rgba(36,41,46,0.12)" stroke-width="1"/>
<path d="M547 1225.5H909" stroke="rgba(36,41,46,0.12)" stroke-width="1"/>
<path d="M547 1258.5H909" stroke="rgba(36,41,46,0.12)" stroke-width="1"/>
<path d="M547 1290.5H909" stroke="rgba(36,41,46,0.12)" stroke-width="1"/>
<path d="M583.5 1135V1295" stroke="rgba(36,41,46,0.12)" stroke-width="1"/>
<path d="M643.5 1135V1295" stroke="rgba(36,41,46,0.12)" stroke-width="1"/>
<path d="M703.5 1135V1295" stroke="rgba(36,41,46,0.12)" stroke-width="1"/>
<path d="M763.5 1135V1295" stroke="rgba(36,41,46,0.12)" stroke-width="1"/>
<path d="M823.5 1135V1295" stroke="rgba(36,41,46,0.12)" stroke-width="1"/>
<path d="M884.5 1135V1295" stroke="rgba(36,41,46,0.12)" stroke-width="1"/>
<path d="M547.9 1174.3 L550.4 1174.3 L552.1 1187.1 L554.3 1194.3 L554.7 1195.7 L556.7 1290.0 L592.1 1290.0" fill="none" stroke="#56a64b" stroke-width="1" stroke-linejoin="round"/>
<path d="M594.3 1290.0 L596.4 1289.1 L597.9 1290.0" fill="none" stroke="#56a64b" stroke-width="1" stroke-linejoin="round"/>
<path d="M660.4 1290.0 L661.4 1174.3 L663.9 1174.3 L666.4 1178.3 L667.6 1290.0 L669.0 1290.0 L670.4 1174.3 L673.6 1175.0 L674.7 1290.0 L675.6 1290.0 L676.1 1175.0 L677.9 1174.0 L680.7 1175.0 L683.3 1186.4 L686.4 1186.4 L687.9 1175.0 L689.6 1174.0 L692.1 1178.6 L692.9 1182.9 L693.6 1227.1 L695.7 1232.9 L696.7 1282.9 L698.6 1290.0 L707.1 1290.0 L708.6 1280.7 L710.7 1279.3 L712.1 1281.4 L713.6 1290.0 L722.9 1290.0 L725.7 1279.7 L726.4 1290.0 L734.3 1290.0 L735.7 1279.3 L737.9 1280.7 L740.7 1288.6 L742.9 1290.0 L781.4 1290.3" fill="none" stroke="#56a64b" stroke-width="1" stroke-linejoin="round"/>
<path d="M772.1 1290.3 L773.6 1280.3 L777.9 1285.0 L780.7 1290.3" fill="none" stroke="#56a64b" stroke-width="1" stroke-linejoin="round"/>
<path d="M791.4 1290.3 L794.3 1290.3 L797.1 1282.6 L800.4 1281.4 L802.4 1290.3 L808.6 1290.3" fill="none" stroke="#56a64b" stroke-width="1" stroke-linejoin="round"/>
<path d="M821.4 1283.1 L824.3 1283.1 L826.7 1290.3 L829.3 1269.3 L832.4 1272.1 L833.9 1280.7 L835.7 1280.7 L836.4 1286.4" fill="none" stroke="#56a64b" stroke-width="1" stroke-linejoin="round"/>
<path d="M882.1 1289.7 L887.1 1289.7" fill="none" stroke="#56a64b" stroke-width="1" stroke-linejoin="round"/>
<path d="M898.6 1284.6 L901.4 1284.3" fill="none" stroke="#56a64b" stroke-width="1" stroke-linejoin="round"/>
<path d="M548.1 1193.3 L549.6 1197.1 L550.7 1288.6 L552.1 1290.3 L555.7 1290.3" fill="none" stroke="#e0b400" stroke-width="1" stroke-linejoin="round"/>
<path d="M661.4 1201.4 L663.6 1197.1 L664.7 1211.4 L666.4 1290.0 L670.0 1290.0 L670.7 1207.1 L672.1 1290.0 L675.3 1290.0 L676.4 1193.6 L678.6 1207.1 L679.6 1209.3 L682.1 1290.0 L687.1 1290.0 L689.6 1203.6 L690.4 1290.0 L696.4 1290.0" fill="none" stroke="#e0b400" stroke-width="1" stroke-linejoin="round"/>
<path d="M828.6 1290.0 L832.9 1290.0" fill="none" stroke="#e0b400" stroke-width="1" stroke-linejoin="round"/>
<path d="M548.1 1154.3 L550.4 1168.6 L551.0 1287.9 L552.9 1289.3 L555.7 1290.0 L591.4 1290.0" fill="none" stroke="#5794f2" stroke-width="1" stroke-linejoin="round"/>
<path d="M594.3 1290.3 L603.6 1290.3" fill="none" stroke="#5794f2" stroke-width="1" stroke-linejoin="round"/>
<path d="M612.1 1290.3 L620.7 1290.3" fill="none" stroke="#5794f2" stroke-width="1" stroke-linejoin="round"/>
<path d="M624.3 1290.3 L632.9 1290.3" fill="none" stroke="#5794f2" stroke-width="1" stroke-linejoin="round"/>
<path d="M636.4 1290.3 L645.0 1290.3" fill="none" stroke="#5794f2" stroke-width="1" stroke-linejoin="round"/>
<path d="M648.6 1290.3 L652.9 1290.3" fill="none" stroke="#5794f2" stroke-width="1" stroke-linejoin="round"/>
<path d="M661.0 1207.1 L662.4 1200.0 L663.9 1194.3 L664.7 1162.1 L666.1 1231.4 L667.6 1290.0 L669.3 1290.0 L670.4 1174.3 L672.4 1238.6 L673.6 1240.0 L675.3 1290.0 L675.7 1290.0 L676.4 1208.6 L678.6 1241.4 L679.3 1225.7 L681.4 1254.3 L684.3 1288.6 L686.4 1290.0 L687.6 1237.1 L689.6 1220.7 L692.1 1265.7 L694.3 1288.6 L696.4 1290.0 L781.4 1290.3" fill="none" stroke="#5794f2" stroke-width="1" stroke-linejoin="round"/>
<path d="M791.4 1290.3 L808.6 1290.3" fill="none" stroke="#5794f2" stroke-width="1" stroke-linejoin="round"/>
<path d="M821.4 1290.3 L828.6 1289.7 L832.9 1289.7 L836.4 1290.3" fill="none" stroke="#5794f2" stroke-width="1" stroke-linejoin="round"/>
<path d="M841.4 1290.3 L844.3 1290.3" fill="none" stroke="#5794f2" stroke-width="1" stroke-linejoin="round"/>
<path d="M851.4 1290.3 L854.3 1290.3" fill="none" stroke="#5794f2" stroke-width="1" stroke-linejoin="round"/>
<path d="M874.3 1290.3 L877.1 1290.3" fill="none" stroke="#5794f2" stroke-width="1" stroke-linejoin="round"/>
<path d="M882.1 1290.3 L895.7 1290.3" fill="none" stroke="#5794f2" stroke-width="1" stroke-linejoin="round"/>
<path d="M898.6 1289.7 L901.4 1290.3" fill="none" stroke="#5794f2" stroke-width="1" stroke-linejoin="round"/>
<path d="M993 1149.5H1368" stroke="rgba(36,41,46,0.12)" stroke-width="1"/>
<path d="M993 1184.5H1368" stroke="rgba(36,41,46,0.12)" stroke-width="1"/>
<path d="M993 1220.5H1368" stroke="rgba(36,41,46,0.12)" stroke-width="1"/>
<path d="M993 1255.5H1368" stroke="rgba(36,41,46,0.12)" stroke-width="1"/>
<path d="M993 1290.5H1368" stroke="rgba(36,41,46,0.12)" stroke-width="1"/>
<path d="M1031.5 1135V1295" stroke="rgba(36,41,46,0.12)" stroke-width="1"/>
<path d="M1093.5 1135V1295" stroke="rgba(36,41,46,0.12)" stroke-width="1"/>
<path d="M1155.5 1135V1295" stroke="rgba(36,41,46,0.12)" stroke-width="1"/>
<path d="M1217.5 1135V1295" stroke="rgba(36,41,46,0.12)" stroke-width="1"/>
<path d="M1279.5 1135V1295" stroke="rgba(36,41,46,0.12)" stroke-width="1"/>
<path d="M1342.5 1135V1295" stroke="rgba(36,41,46,0.12)" stroke-width="1"/>
<path d="M1029.0 1272.0 L1031.4 1272.0" fill="none" stroke="#56a64b" stroke-width="1" stroke-linejoin="round"/>
<path d="M1029.0 1285.8 L1031.4 1285.8" fill="none" stroke="#5794f2" stroke-width="1" stroke-linejoin="round"/>
<path d="M1166.3 1283.3 L1169.4 1283.3" fill="none" stroke="#56a64b" stroke-width="1" stroke-linejoin="round"/>
<path d="M1166.3 1286.1 L1169.4 1286.1" fill="none" stroke="#e0b400" stroke-width="1" stroke-linejoin="round"/>
<path d="M1166.3 1288.0 L1169.4 1288.0" fill="none" stroke="#5794f2" stroke-width="1" stroke-linejoin="round"/>
<path d="M1172.6 1283.3 L1179.6 1283.3" fill="none" stroke="#56a64b" stroke-width="1" stroke-linejoin="round"/>
<path d="M1172.6 1286.1 L1179.6 1286.1" fill="none" stroke="#e0b400" stroke-width="1" stroke-linejoin="round"/>
<path d="M1172.6 1288.0 L1179.6 1288.0" fill="none" stroke="#5794f2" stroke-width="1" stroke-linejoin="round"/>
<path d="M1227.6 1283.3 L1235.4 1283.3" fill="none" stroke="#56a64b" stroke-width="1" stroke-linejoin="round"/>
<path d="M1227.6 1286.1 L1235.4 1286.1" fill="none" stroke="#e0b400" stroke-width="1" stroke-linejoin="round"/>
<path d="M1227.6 1288.0 L1235.4 1288.0" fill="none" stroke="#5794f2" stroke-width="1" stroke-linejoin="round"/>
<path d="M1249.3 1283.3 L1256.6 1283.3" fill="none" stroke="#56a64b" stroke-width="1" stroke-linejoin="round"/>
<path d="M1249.3 1286.1 L1256.6 1286.1" fill="none" stroke="#e0b400" stroke-width="1" stroke-linejoin="round"/>
<path d="M1249.3 1288.0 L1256.6 1288.0" fill="none" stroke="#5794f2" stroke-width="1" stroke-linejoin="round"/>
<path d="M1277.0 1283.3 L1280.7 1283.3" fill="none" stroke="#56a64b" stroke-width="1" stroke-linejoin="round"/>
<path d="M1277.0 1286.1 L1280.7 1286.1" fill="none" stroke="#e0b400" stroke-width="1" stroke-linejoin="round"/>
<path d="M1277.0 1288.0 L1280.7 1288.0" fill="none" stroke="#5794f2" stroke-width="1" stroke-linejoin="round"/>
<path d="M1283.4 1283.3 L1286.5 1283.3" fill="none" stroke="#56a64b" stroke-width="1" stroke-linejoin="round"/>
<path d="M1283.4 1286.1 L1286.5 1286.1" fill="none" stroke="#e0b400" stroke-width="1" stroke-linejoin="round"/>
<path d="M1283.4 1288.0 L1286.5 1288.0" fill="none" stroke="#5794f2" stroke-width="1" stroke-linejoin="round"/>
<path d="M1339.1 1272.3 L1342.3 1272.3 L1343.5 1283.3 L1351.4 1283.3" fill="none" stroke="#56a64b" stroke-width="1" stroke-linejoin="round"/>
<path d="M1343.0 1286.5 L1351.4 1286.5" fill="none" stroke="#e0b400" stroke-width="1" stroke-linejoin="round"/>
<path d="M1339.1 1286.4 L1345.0 1287.0 L1351.7 1288.5" fill="none" stroke="#5794f2" stroke-width="1" stroke-linejoin="round"/>
<defs><linearGradient id="fg" x1="0" y1="0" x2="0" y2="1"><stop offset="0" stop-color="#56a64b"/><stop offset="1" stop-color="#56a64b" stop-opacity="0"/></linearGradient><linearGradient id="fg2" x1="0" y1="1" x2="0" y2="0"><stop offset="0" stop-color="#56a64b" stop-opacity="0.600"/><stop offset="1" stop-color="#56a64b" stop-opacity="0"/></linearGradient></defs>
<rect x="1355.900" y="1150" width="1" height="32" fill="url(#fg)"/>
<rect x="1351.200" y="1256" width="1" height="27" fill="url(#fg2)"/>
<path d="M1356.4 1150.6 L1358.5 1150.2" fill="none" stroke="#56a64b" stroke-width="1" stroke-linejoin="round"/>
<path d="M1356.0 1282.0 L1358.2 1285.5" fill="none" stroke="#5794f2" stroke-width="1" stroke-linejoin="round"/>
<path d="M1356.4 1286.3 L1359.3 1286.3" fill="none" stroke="#e0b400" stroke-width="1" stroke-linejoin="round"/></svg>
</div></body></html>
